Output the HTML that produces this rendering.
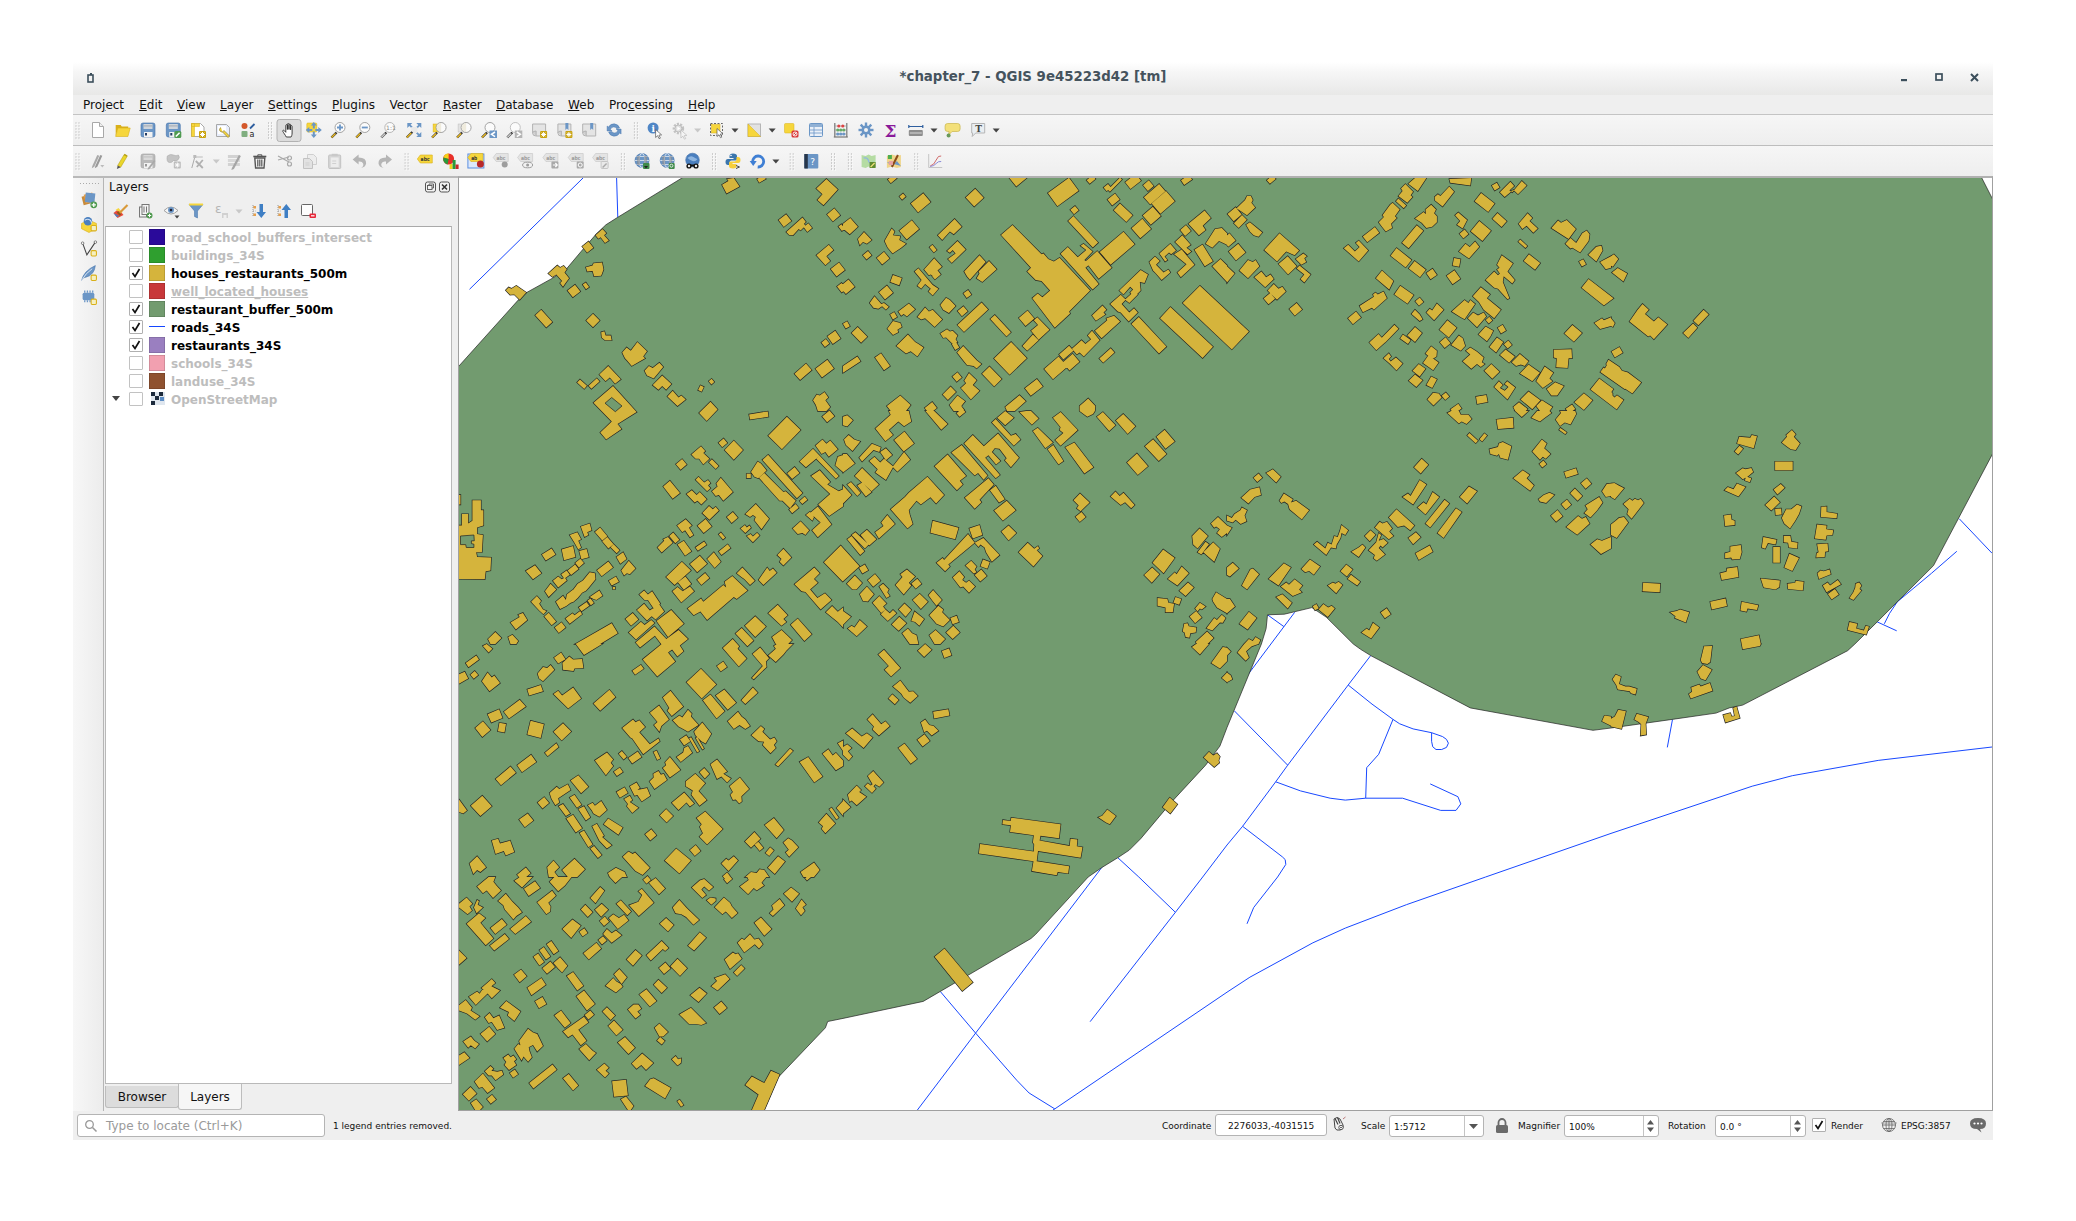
<!DOCTYPE html>
<html><head><meta charset="utf-8"><title>chapter_7 - QGIS</title>
<style>
html,body{margin:0;padding:0;background:#fff;}
body{width:2076px;height:1221px;position:relative;overflow:hidden;font-family:"DejaVu Sans","Liberation Sans",sans-serif;font-size:12px;color:#000;}
.abs{position:absolute;}
#win{position:absolute;left:73px;top:62px;width:1920px;height:1078px;background:#efefef;}
#title{position:absolute;left:0;top:0;width:1920px;height:33px;background:linear-gradient(#ffffff 0%,#f6f6f6 30%,#efefef 65%,#e8e8e7 100%);}
#title .t{position:absolute;left:0;width:1920px;top:7px;text-align:center;font-weight:bold;font-size:13.33px;color:#45535d;line-height:16px;}
#menubar{position:absolute;left:0;top:33px;width:1920px;height:19px;background:#efefef;border-bottom:1px solid #c4c4c4;}
#menubar span{position:absolute;top:3px;line-height:15px;font-size:12px;color:#111;}
#menubar u{text-decoration-thickness:1px;text-underline-offset:1px;}
.tb{position:absolute;left:0;width:1920px;height:30px;background:linear-gradient(#f6f6f6,#eeeeee);}
#tb1{top:53px;border-bottom:1px solid #bdbdbd;}
#tb2{top:84px;height:30px;}
#tbsep{position:absolute;left:0;top:114px;width:1920px;height:2px;background:#b9b9b9;}
#leftbar{position:absolute;left:0;top:116px;width:30px;height:933px;background:linear-gradient(90deg,#f7f7f7,#ececec);border-right:1px solid #b5b5b5;}
#panel{position:absolute;left:31px;top:116px;width:354px;height:933px;background:#efefef;}
#ptitle{position:absolute;left:5px;top:2px;font-size:12px;line-height:15px;color:#111;}
#ptitle.big{font-size:13px}
#list{position:absolute;left:1px;top:48px;width:345px;height:856px;background:#fff;border:1px solid #b9b9b9;border-top-color:#a9a9a9;}
.row{position:absolute;left:0;height:18px;width:345px;}
.cb{position:absolute;left:23px;top:2px;width:12px;height:12px;border:1px solid #c2c2c2;background:#fff;border-radius:1px;}
.cb.on{border-color:#b0b0b0;}
.sw{position:absolute;left:43px;top:1px;width:16px;height:16px;box-shadow:inset 0 0 0 0.5px rgba(0,0,0,.25);}
.nm{position:absolute;left:65px;top:2px;font-weight:bold;font-size:12px;line-height:16px;white-space:nowrap;}
.off .nm{color:#bdbdbd;}
#tabs{position:absolute;left:0;top:907px;width:354px;height:27px;}
.tab{position:absolute;font-size:12px;line-height:15px;color:#111;text-align:center;}
#tabB{left:1px;top:1px;width:72px;height:17px;padding-top:4px;background:#dcdcdc;border:1px solid #bdbdbd;border-top:none;border-radius:0 0 3px 3px;}
#tabL{left:74px;top:-1px;width:62px;height:19px;padding-top:6px;background:#f6f6f6;border:1px solid #bdbdbd;border-top:none;border-radius:0 0 3px 3px;}
#mapframe{position:absolute;left:385px;top:114px;width:1535px;height:935px;background:#fff;border:1px solid #a0a0a0;border-top:2px solid #b0b0b0;box-sizing:border-box;}
#status{position:absolute;left:0;top:1049px;width:1920px;height:29px;background:#efefef;}
#status .lb{position:absolute;font-size:9px;line-height:12px;top:9px;color:#111;white-space:nowrap;}
.box{position:absolute;background:#fff;border:1px solid #b4b4b4;border-radius:3px;box-sizing:border-box;}
.box span{position:absolute;font-size:9px;line-height:12px;top:5px;white-space:nowrap;color:#111;}
svg{position:absolute;overflow:visible;}
</style></head><body>
<div id="win">
<div id="title"><div class="t">*chapter_7 - QGIS 9e45223d42 [tm]</div><svg width="8" height="10" viewBox="0 0 8 10" style="left:14px;top:11px"><rect x="1" y="2" width="5" height="7" fill="none" stroke="#3c4f5c" stroke-width="1.600"/><rect x="3" y="0" width="2" height="2" fill="#3c4f5c"/></svg><svg width="8" height="4" viewBox="0 0 8 4" style="left:1828px;top:17px"><rect width="6" height="2.200" fill="#3c4f5c"/></svg><svg width="9" height="9" viewBox="0 0 9 9" style="left:1862px;top:11px"><rect x="1" y="1" width="6" height="6" fill="none" stroke="#3c4f5c" stroke-width="1.700"/></svg><svg width="9" height="9" viewBox="0 0 9 9" style="left:1897px;top:11px"><path d="M1 1l7 7M8 1l-7 7" stroke="#3c4f5c" stroke-width="2"/></svg></div>
<div id="menubar"><span style="left:10px">Pro<u>j</u>ect</span><span style="left:66.2px"><u>E</u>dit</span><span style="left:104px"><u>V</u>iew</span><span style="left:147.1px"><u>L</u>ayer</span><span style="left:195px"><u>S</u>ettings</span><span style="left:259.1px"><u>P</u>lugins</span><span style="left:316.4px">Vect<u>o</u>r</span><span style="left:370px"><u>R</u>aster</span><span style="left:423px"><u>D</u>atabase</span><span style="left:495.1px"><u>W</u>eb</span><span style="left:535.9px">Pro<u>c</u>essing</span><span style="left:615.1px"><u>H</u>elp</span></div>
<div class="tb" id="tb1"></div><div class="tb" id="tb2"></div><div id="tbsep"></div>
<div id="leftbar"></div>
<div id="panel"><div id="ptitle">Layers</div><div id="list"><div class="row off" style="top:1px"><div class="cb"></div><div class="sw" style="background:#2a0a9a"></div><div class="nm">road_school_buffers_intersect</div></div><div class="row off" style="top:19px"><div class="cb"></div><div class="sw" style="background:#2f9f2f"></div><div class="nm">buildings_34S</div></div><div class="row" style="top:37px"><div class="cb on"><svg width="12" height="12" viewBox="0 0 12 12" style="left:0;top:0"><path d="M2.500 6l2.500 3.500 4.500-7.500" fill="none" stroke="#111" stroke-width="1.700"/></svg></div><div class="sw" style="background:#d5b43c"></div><div class="nm">houses_restaurants_500m</div></div><div class="row off" style="top:55px"><div class="cb"></div><div class="sw" style="background:#c8383a"></div><div class="nm" style="text-decoration:underline;text-decoration-thickness:1px">well_located_houses</div></div><div class="row" style="top:73px"><div class="cb on"><svg width="12" height="12" viewBox="0 0 12 12" style="left:0;top:0"><path d="M2.500 6l2.500 3.500 4.500-7.500" fill="none" stroke="#111" stroke-width="1.700"/></svg></div><div class="sw" style="background:#729b6f"></div><div class="nm">restaurant_buffer_500m</div></div><div class="row" style="top:91px"><div class="cb on"><svg width="12" height="12" viewBox="0 0 12 12" style="left:0;top:0"><path d="M2.500 6l2.500 3.500 4.500-7.500" fill="none" stroke="#111" stroke-width="1.700"/></svg></div><div class="abs" style="left:43px;top:8px;width:16px;height:1px;background:#1446ff"></div><div class="nm">roads_34S</div></div><div class="row" style="top:109px"><div class="cb on"><svg width="12" height="12" viewBox="0 0 12 12" style="left:0;top:0"><path d="M2.500 6l2.500 3.500 4.500-7.500" fill="none" stroke="#111" stroke-width="1.700"/></svg></div><div class="sw" style="background:#9a7fc0"></div><div class="nm">restaurants_34S</div></div><div class="row off" style="top:127px"><div class="cb"></div><div class="sw" style="background:#f2a0b0"></div><div class="nm">schools_34S</div></div><div class="row off" style="top:145px"><div class="cb"></div><div class="sw" style="background:#8f5230"></div><div class="nm">landuse_34S</div></div><div class="row off" style="top:163px"><div class="cb"></div><svg width="14" height="13" viewBox="0 0 14 13" style="left:45px;top:2px"><rect width="14" height="13" fill="#dfe6ee"/><rect x="0" y="0" width="4" height="4" fill="#1c2a3c"/><rect x="8" y="0" width="4" height="4" fill="#1c2a3c"/><rect x="4" y="4" width="4" height="4" fill="#1c2a3c"/><rect x="0" y="9" width="4" height="4" fill="#1c2a3c"/><rect x="9" y="5" width="4" height="4" fill="#5b8cc4"/></svg><svg width="10" height="8" viewBox="0 0 10 8" style="left:6px;top:6px"><path d="M0 0h8l-4 5z" fill="#444"/></svg><div class="nm">OpenStreetMap</div></div></div><div id="tabs"><div class="tab" id="tabB">Browser</div><div class="tab" id="tabL">Layers</div></div></div>
<div id="mapframe"><div class="abs" style="left:0px;top:0px;width:1533px;height:932px;overflow:hidden"><svg id="map" width="1533" height="932" viewBox="0 0 1533 932" style="left:0;top:0;overflow:hidden">
<rect width="1533" height="932" fill="#fff"/>
<path d="M124 0 L10.5 111.3M157.6 0 L158.8 39.5M808.5 436.8 L824.9 448.6M835.7 434.3 L789 496.5 L642.6 689.7 L516.6 855.1 L458.4 932M911.5 477.8 L889.2 507 L828.7 587.2 L816.7 603.8 L783.6 648.3 L768 667 L743.7 699 L716.4 734.3 L631.1 843.7M775.3 532.8 L828.7 587.2M889.2 507 L913 526.1 L934 541.4 L940.7 545.8 L954.1 550.9 L972.6 554.7 L983.6 558.6 L987.5 561.4 L989.4 565.2 L987.5 569.4 L982.7 571.5 L977 571.5 L973.7 568.7 L972.6 563.3 L972.6 554.7M934 541.4 L919.7 576.3 L907.7 589.7 L906.7 620.2M816.7 603.8 L841.5 612.9 L871.1 620.2 L886.3 622.1 L906.7 620.2 L943.6 620.2 L981.7 632.4 L997 632.4 L1001.8 625.9 L998.9 618.7 L971.2 605.9M783.6 648.3 L823.3 678.8 L826.2 681.6 L826.8 686.4 L818.6 699 L794.7 729.5 L788 745.8M1533 569 L1419.2 582.4 L1333.3 597.7 L1293.2 608.2 L1152 655.4 L1026.6 699 L947.4 726.7 L886.3 750.1 L853.9 764.8 L790.9 799.2 L768 814.2 L595.8 930.9 L594 932M481.3 813.5 L516.6 855.1 L557.7 902.2 L570.1 915 L595.8 930.9M658.8 679.7 L679.8 699 L716.4 734.3M1213.5 541.4 L1208.3 569.4M1500.3 340.8 L1533 375.2M1497.8 373.3 L1472.6 395.2 L1438.3 423.8 L1430.6 435.3 L1425.3 445.8M1418.2 443.9 L1437.7 452.8" fill="none" stroke="#1848ff" stroke-width="1"/>
<polygon points="226.2,-2 1521.8,-2 1535,23.9 1535,273.1 1474.5,387.6 1418.2,443.9 1395.9,466 1388.6,472.7 1283.7,527.1 1270.3,529.9 1257,535.1 1213.1,541.4 1152,550 1134,552.3 1011.3,529.9 912.1,477.8 901.6,471.3 894.3,466 867.2,439.1 852.9,429.6 825.3,436.2 808.5,436.8 807.1,450.6 802.4,466 768,549.5 760.9,568.1 746.6,587.2 712.2,624.4 681.7,660.7 670.3,672.1 658.8,679.7 642.6,689.7 629.2,699 576.7,756.3 572,760.5 464.2,823.4 384,840.4 368.7,843.5 366.4,849.8 319.1,899.4 304.4,934 -2,934 -2,190.2 59.2,122.1 67.7,114.5 93.5,100.2 106.9,91.6 122.1,73.5 137,56.3 146.9,46.8 158.4,39.5" fill="#729b6f" stroke="#232323" stroke-width="0.7"/>
<path d="M263 6.7 269.5 2.9 268.1 1 274.8 0 280.5 8.6 267.6 15.6ZM298.1 1 304.7 -2.8 306.8 0.9 300.2 4.7ZM367.4 1 378.8 11.5 364.5 27.3 358.4 21.9 363.5 16.2 357.3 10.5ZM368 36.4 375.3 30.3 381.2 37.3 373.9 43.4ZM319.6 42.1 327.1 36.2 332.4 43 324.8 48.9ZM327.3 54 343.5 39.5 346.9 43.9 345 45.8 346.4 47.7 341.6 52.5 339.7 51.1 334 57.3 330.2 56.9ZM344.6 49.1 349.4 45.3 353.1 50.1 348.3 53.9ZM357.4 77.3 369.8 66.8 374.4 72.1 367.4 78.2 371.2 83 366.4 87.2ZM371.7 91.1 380 84.6 385.9 92.1 377.6 98.6ZM378 108.5 382.5 105 387.2 111 382.7 114.5ZM136.5 57.3 143.5 51.1 147.3 55.3 145 57.3 149.8 62.6 146 64.9 141.6 59.2 139.3 60.7ZM123.2 68.4 129.5 63.5 134.4 69.8 128.1 74.7ZM126.9 89.3 133.6 87.4 134.5 85.3 143.1 84.5 144.5 91.6 142.2 97.7 135.1 98.3 133.6 93.1 128.2 93.5ZM89.3 95.4 98.3 87.4 101.1 89.7 104.6 87.8 107.8 91.2 105.5 94.5 110.1 100.2 106.9 104.6 104 108.8 101.1 105 103.1 103.1 97.3 96.4 93.5 98.9ZM108.5 112.5 116 106.7 121.3 113.4 113.8 119.3ZM123.7 106.6 126.8 104.4 130.1 109.1 127 111.3ZM46.8 112.2 49.6 109.4 52.5 110.7 57.3 107.8 67.2 114.5 60.7 121.8 55.3 116.4 51.1 116.8ZM82.2 131.8 93.3 144.1 87.3 149.5 76.2 137.2ZM134 135.8 140.7 142.6 134 149.3 127.2 142.6ZM142.2 154.2 145.4 153.2 146.6 157.4 151.7 157.4 152.7 162.2 146 162.2 142.7 159.4ZM163.2 174.6 167.6 169.5 171.8 172.7 178.4 164.1 188 173.3 184.2 178.4 186.1 180.3 172.7 188 167.9 182.3 166 180.3ZM185.5 192.7 189.9 188 193.7 189.9 200.4 184.7 204.2 188.9 194.7 200.4 188 197.5ZM193.7 207.1 203.2 197.5 212.4 206.1 207.1 211.8 203.2 208 199.4 211.8ZM208.4 218.5 213.7 212.8 219.5 219.5 222.3 217.6 226.7 221.4 218.5 228.1ZM241.4 207.3 244.8 208.9 242.6 213.7 239.1 212.1ZM249.7 203.2 252.6 200.8 255.3 204 252.4 206.5ZM140.3 196.6 149.2 188 161.8 201.3 156.1 205.7 150.8 199.4 146.6 203.2ZM121 201.4 128 207.7 125.2 210.9 118.1 204.5ZM129.6 207.7 137.8 200.3 140.6 203.4 132.4 210.8ZM335.5 195.7 347 185.6 352.7 192.1 341.1 202.1ZM356.4 190.7 368.3 181.7 374.9 190.6 363 199.5ZM368.4 158.2 376.2 152.7 381.6 160.5 373.8 166ZM362.4 164.6 366.9 161.1 370.4 165.6 365.9 169.1ZM354 222.3 357.8 216.6 360.7 217.6 365.5 214.1 369.3 219.5 366.4 222.3 371.2 229 367.4 233 358.8 233 356.9 227.1ZM379.4 48.5 382.4 46.2 385.9 50.7 382.9 53ZM240.1 234.9 251.5 223.8 258.6 231.5 247.7 242.9ZM290.1 236.4 308.8 233.4 309.5 238.7 291 241.6ZM309.2 257.8 327.9 238.7 341.6 252.1 322.9 271.2ZM363.2 238.5 370.5 232.4 375.4 238.2 368.1 244.3ZM259.5 264.8 264.6 260.5 268.3 264.9 263.2 269.2ZM265.6 272.1 274.8 262.6 284 272.1 274.8 281.7ZM232.4 276.5 242 268.3 246.2 273.1 244.3 275 250.4 280.7 244.3 286.4 240.1 280.7 236.6 280.7ZM252.9 281.2 259.6 287.9 256.7 290.9 249.9 284.2ZM216.9 286.2 223.1 281.1 227.7 286.6 221.6 291.8ZM204.2 308.4 210.9 302.7 221 315.1 213.7 320.8ZM236.6 301.7 239.5 298.8 245.2 304.6 249 302.1 251.5 305.1 249 307.4 251.5 310.3 248.1 313.2ZM227.5 316 232.8 312.2 237.6 317 240.8 314.1 247.7 321.2 242.4 326.5 238.5 322.7 235.7 324.6ZM252.9 313.2 258.6 308.4 257.3 305.5 261.8 299.8 273.9 314.1 264.3 322.7 259.9 317 256.7 317.9ZM243.3 335.1 250 328 253.8 331.3 256.7 328.8 259.9 332.6 250.4 341.8ZM267.8 339.1 273.9 334 278.8 339.8 272.7 345ZM238.5 347.8 246.6 341 252.7 348.4 244.7 355.1ZM218.1 347.5 226.7 341.2 232.8 347.5 230 349.8 234.4 357 230.9 359.3 226.1 352.3 223.3 354.2ZM198.5 369.5 205.2 362.8 204.2 361.2 209 359 213.7 364.7 202.7 374.6ZM214.2 354.5 220.4 361.8 216.3 365.3 210.2 358ZM218.5 366.6 224.8 362.8 232.4 373.3 226.1 377.7ZM236.5 369.4 245.1 363.4 247.5 366.8 238.9 372.8ZM261.9 354.5 266.2 359.6 264 361.5 259.7 356.4ZM259.7 373.4 268.7 366.3 271.6 370.1 262.6 377.1ZM248.1 380.9 254.8 374.2 261.8 383.8 255.7 389.9ZM230.9 386.1 240.8 377.7 248.1 385.7 238.2 394.3ZM207.1 399 222.9 383.8 231.9 392.4 215.6 407ZM218.9 404.3 226.4 398.4 232.3 406 224.8 411.8ZM238.1 401.8 246.1 395 250.4 400.1 242.4 406.9ZM213.4 413.3 218.5 409 223.7 413.3 230.9 408.6 235.1 413.3 222.3 424.4ZM286.3 336.1 296.8 325.9 310.1 340.8 302.5 351.3 295.4 342.2 296.8 338.9 293.9 337 291 338.9ZM281.5 350.4 285.9 347.1 287.8 349.4 290.5 347.5 292 349.8 286.3 355.1ZM287.8 358 291.6 356.1 293.9 358.6 298.1 354.8 300.6 357.4 293.9 364.3ZM318.3 377.1 324.4 370.8 332.4 379.6 324.4 387.6 320.6 383.8 322.5 380.9ZM299.6 401.9 308.2 389.5 310.7 392.9 313.9 390.4 317.7 394.8 304.4 407ZM277.7 395.2 283.4 389.5 295.8 402.8 291 407 285.3 400.9 282.4 399ZM228.6 430.5 242 420.4 244.3 423.8 264.3 407 267.2 409.5 265.6 403.8 273.3 398.1 288.5 412.4 277.7 421 274.8 419.1 248.1 442 241.4 433.4 234.7 437.2ZM335.5 406.3 355.3 389.5 360.7 395.2 355 400.9 358.8 404.8 351.1 411.4 358.4 420 366 415.3 372.5 421.9 361.6 431.5 346.4 413.9 342.6 413.3ZM309.2 435.3 318.7 426.7 328.6 437.2 324.4 441 327.3 443.9 322.5 447.7ZM285.9 447.7 296.2 438.2 306.9 448.6 296.2 459.1ZM331.7 446.7 338.7 440.6 352.7 456.3 345.4 463ZM366.8 434.3 373.1 428 378.8 433.8 384 429.6 384 449.6 378.8 443.9ZM333.6 350.4 341.6 343.3 350.2 352.3 346.4 357 343.5 355.1 338.7 356.1ZM346.9 337 350.8 333.8 355 338.9 353.4 342.7ZM351.1 335.1 358.8 328.4 372.5 346.5 358.8 359.3 353.1 352.3 361.6 344.6ZM352.1 297.9 360.7 292.2 371.2 304 368.3 306.5 379.8 313.2 384 311.2 384 328.4 370.2 338 359.2 326.5 371.2 316ZM340.6 283.6 354 270.8 360.7 277.8 346.9 289.3ZM356.5 267.4 363.5 261.6 367.4 265.8 371.2 262.6 378.8 271.2 369.8 278.8 366.4 274 362.6 275.9ZM328.2 295.2 335.6 289 340.5 294.9 333.1 301ZM357.3 280.7 360.7 277.8 379.8 297.9 376.9 300.7ZM376.3 287.4 378.8 278.8 384 276.9 384 294.1ZM309.1 276.8 343.5 315 337.9 320.2 303.4 281.9ZM300 299.8 305.3 295 324.4 314.1 326.7 313.2 336.8 322.7 331.1 330.3 323.5 322.7 320.6 322.7ZM292 294.1 298.7 283.6 301.9 285.5 307.6 292.5 299.2 300.2 295.4 298.8ZM287.6 295.8 291.8 295.8 291.8 300 287.6 300ZM330.1 331.6 336.7 326.1 339.7 329.8 333.2 335.3ZM340.6 322.9 345.7 318.6 348.4 321.8 343.3 326.1ZM0 317 1.5 317 1.5 326.5 0 326.5ZM0 347.5 2.9 347.5 2.9 336.1 9.2 336.1 9.2 345.6 13.4 342.7 13.4 322.3 21.9 322.3 21.9 332.2 24.4 332.2 24.4 347.5 18.1 349.4 18.1 356.1 23.9 357 22.9 374.2 17.2 374.2 18.1 379 32.1 379.6 31.5 392.4 26.7 393.3 25.8 401.3 0 400.9ZM66.8 392.9 76 387.2 82.4 395.2 74 401.3ZM82.9 376.5 92.6 370.4 96.5 376.6 86.8 382.6ZM102.7 371.4 114.1 368.1 116.4 379 105 382.2ZM120.2 373 127.6 371 129.8 379.3 122.4 381.3ZM110.7 357 118.3 354.2 122.1 361.2 119.3 362.8 122.1 369.5 119.3 371.4 115.5 364.7ZM121.8 348.5 130.7 345.6 132.6 352.3 128.2 354.2 129.4 357 125.6 359ZM141.1 349.6 148.4 358.3 143.3 362.6 135.9 353.9ZM148.3 358.9 154.5 366.2 149.4 370.5 143.2 363.2ZM154.6 366.3 160.6 372.3 157.7 375.3 151.6 369.2ZM157.4 379 164.1 374.2 167.6 380.9 161.3 385.7ZM162.2 392.4 169.8 382.8 176.5 390.4 170.8 396.2 167.9 395.2 165.1 397.5ZM138 392.2 149.3 383.4 154 389.4 142.7 398.2ZM116.2 385.1 121.3 380.8 125 385.1 119.9 389.4ZM108.6 392.5 116.1 386.6 119.6 391.1 112.1 397ZM102.2 396.3 107.7 392.4 110.8 396.8 105.3 400.7ZM93.9 402.8 99.2 398.6 102.7 401.3 105.9 399.4 107.8 402.5 99.2 409.5ZM85.9 413.3 91.6 405.7 97.3 411.4 89.7 419.1ZM72.1 423.8 77.9 418.1 82.1 422.9 80.2 425.7 84 431.5 87.4 433 84.4 436.2 80.2 432.4ZM89.7 434.8 97.1 443.6 92.7 447.2 85.3 438.5ZM95.7 449.6 102.5 444.3 106.6 449.6 99.8 454.9ZM106.5 440.6 113.5 435.3 115.5 437.2 121.2 433 123.1 436.2 110.7 445.8ZM119.7 429.4 127.5 423.9 130.3 427.8 122.5 433.3ZM128.5 422.6 131.6 420.4 134.9 425.1 131.8 427.3ZM130.7 419.1 140.3 412.4 143.5 417.7 137.4 421.9 134.5 421ZM96.9 423.8 104 417.7 106.9 421.9 107.8 416.6 112.6 412.8 114.5 411.4 118.7 405.7 124 402.5 130.7 394.3 135.9 395.2 136.5 401.3 129.8 409.5 126.9 412.8 123.1 414.7 118.7 420 114.5 423.8 111.6 424.8 107.3 428 101.1 431.1ZM149.8 402.8 156.9 398.6 159.9 403.8 152.7 407.6ZM153.8 409 156.1 409 156.1 411.2 153.8 411.2ZM51.5 444.5 60.7 439.1 59.2 436.8 63.9 434.9 68.3 442 56.9 451.5ZM29 461.1 36.3 454 42.4 460.1 36.3 466 31.5 466ZM49.2 459.1 53.4 456.7 59.2 463 57.3 466 51.5 466ZM116.4 466 152.7 445.2 158.8 455.3 141.2 466ZM180.3 416.6 185.1 412.4 188.9 416.6 193.1 413.3 201.3 425.7 194.7 430.5 188.9 421.9 185.5 421.9ZM177.9 431.9 185.1 425.7 190.8 432.4 196.6 428.6 200 426.1 205.2 433.4 196.6 441.4 192.7 438.2 188 442.5ZM166.4 441 173.7 434.9 179.4 441.4 172.1 447.7ZM197.5 442.9 212.2 431.9 224.8 445.8 209 459.1ZM313 459.1 322.5 452.1 333 462 329.2 466 316.8 466ZM23.9 467.9 27.7 466 33.4 470.8 29.6 474.6ZM116.8 466 143.1 466 125 477.1ZM6.7 485.1 17.2 477.5 20 481.6 9.5 489.3ZM11.4 496.7 15.7 493 19.2 497.1 14.8 500.8ZM0 496.2 5.7 493.7 9.2 500.4 0 505.7ZM22.9 503.2 28.6 494.6 32.8 499.4 35.3 497.5 41 505.1 30.5 513.3ZM95 479.7 102.1 474.6 106.5 481.3 99.2 485.5ZM103.4 485.1 110.3 478.4 114.1 481.6 123.1 480.9 124.4 489.9 115.5 490.4 114.5 493.1 104 491.8ZM78.6 495.6 84 488.9 88.2 489.9 91.6 487 95.4 491.8 84 503.2 80.2 500.4ZM68.3 511.4 81.7 507 84 513.3 70.2 517.5ZM94.5 516 99.2 512.8 103.1 517.5 114.1 509.5 122.1 520.4 109.2 530.5ZM134.5 525.5 150.4 511.8 156.5 519.1 141.2 532.8ZM173.3 492.8 181.9 486.8 184.7 490.7 176.1 496.7ZM227.5 504.2 242 490.8 257.3 506.5 242.7 520.4ZM257.9 488 264.2 483.6 268 489.1 261.8 493.4ZM293.5 475.9 301.1 469.4 310.1 480.3 306.9 483.6 307.6 488.9 294.8 501.3 292.9 500 303.8 487.9ZM309.2 477.5 316.8 470.8 314.9 467.9 317.7 466 334 466 327.3 472.7 324.4 476.5 316.8 484.1ZM243.9 522.3 251.5 516.6 265.6 533.2 257.6 540.4ZM256.7 517.5 265.3 511.4 277.1 524.8 268.7 531.8ZM282.4 522.3 293.9 509.5 298.7 514.7 286.3 526.1ZM203.8 519.4 211.5 512.8 224.2 528.6 212.8 538.1 208.4 532.8 210.3 529.9ZM190.8 534.7 200 527.5 205.2 534.7 209.9 541.4 202.3 548.1 200.4 553.8 195 547.1 198.5 543.9ZM163.2 550 174 541.4 176.5 544.2 180.3 542.3 186.1 549 180.3 554.2 190.8 566.2 199.4 560.5 200.8 563.3 184.2 576.3 173.3 560.5 171.4 559.5ZM213.7 542.3 220.4 537.6 223.3 539.5 229 531.8 232.8 535.7 231.9 538.5 239.5 547.1 229 553.8 224.2 550.9 219.5 548.4ZM235.1 553.8 243.3 544.6 252.3 555.7 249 561.4 246.6 565.6 242.4 563.3 236.6 557.6ZM220.9 561.6 227.2 557.2 231.4 563.2 225.1 567.5ZM232.1 559.2 240.2 573.2 238.2 574.4 230.1 560.3ZM238.3 559 245 570.5 243.4 571.5 236.7 559.9ZM217.6 579 224.2 574.4 225.2 570 229 568.1 233.2 574.8 221.8 583.9ZM268.7 543.3 279 533.7 282.4 538.5 286.3 541.4 291 548.1 286.3 550.9 280.5 547.1 274.8 550.9ZM292.4 557.2 301.9 548.1 305.3 550.9 303.4 553.8 311.1 561.4 315.3 559.5 317.7 563.3 314.9 567.1 316.8 570 311.5 575.2 303.8 567.1 305 563.7 299.6 563.3ZM316.4 586.6 331.1 570.6 334 572.9 319.1 588.5ZM340.6 583.9 349.2 579 363.5 598.6 355.3 604.4ZM363.5 575.7 369.3 571.3 373.7 577.6 376.9 574.8 384 582.4 384 588.1 376.9 592.3ZM378.8 565.2 384 562.4 384 572.9ZM44.8 533.7 60.7 521.7 66.8 528.6 50 540.4ZM28.6 536.2 40.1 531.3 43.5 540 32.4 544.6ZM16.2 550 23.9 543.3 31.5 551.9 23.3 559.1ZM40.4 544.8 47 545.9 45.5 554.4 38.9 553.2ZM71.6 542.7 84.9 546.2 81.7 559.9 68.3 556.6ZM94.5 553.8 104 545.2 112.2 553.4 102.7 562.4ZM85.9 574.8 97.3 565.2 99.6 569.1 88.7 578.2ZM58.2 587.2 72.1 576.7 77.3 583.9 63 594.2ZM36.6 601.1 51.5 588.5 56.9 594.8 42 607.2ZM135.9 582.4 147.9 574.4 154.2 581.5 151.7 584.7 154.2 588.1 146.9 597.3ZM162.9 573 167.8 578.8 164.6 581.5 159.7 575.7ZM169.3 580.1 178.7 573.5 182.6 579 173.2 585.6ZM197.6 572.6 201.3 580.4 198.2 581.9 194.5 574.1ZM154.8 593.8 160.8 589.6 163.9 594 157.9 598.1ZM203.8 590 207.1 587.2 206.1 584.3 210.9 579 221.4 592 210.9 599.6ZM190.5 603.4 194.7 599.6 194.3 595.8 199.4 592.9 201.9 596.7 204.6 595.8 208 601.9 195.6 611ZM240.5 594.2 245.2 590 250.4 595.8 245.8 600.5ZM251.5 586.2 258 581.5 268.1 593.5 264.3 595.8 271.9 600.5 268.1 604.4 262.4 598.6 258 601.1ZM270.6 608.2 280.9 599.6 290.1 611 282.4 618.3 282.8 623.4 280.2 625.4 276.7 621.5 273.9 622.1 271.4 616.8 273.9 613.9ZM226.7 603.4 236.3 595.8 246.2 605.3 239.5 612.9 247.7 622.1 240.5 627.8 232.4 616.8 233.8 612.6 226.7 608.2ZM212.8 624.8 225.2 614.5 235.1 625.4 230.9 628.6 227.5 624.4 219.5 632ZM200.8 637.4 207.1 631.1 214.1 638.1 207.6 644.4ZM170.8 608.2 177.5 604.4 180.9 610.1 178.4 612 188 610.1 191.2 617.7 182.8 623.4 178.4 617.1 175.6 617.7ZM157.5 613.9 165.5 609.3 168.8 615.1 160.9 619.7ZM165.1 621 170.8 617.7 173.3 622.1 170.8 624 179.4 629.7 173.3 634.9 167.9 628.2 168.9 625.9ZM111.6 602.5 119.3 597.3 129.4 608.7 122.1 615.2ZM90.6 614.9 97.7 608.7 100.2 611 108.8 606.3 111.6 612 99.2 620.2 100.2 624.4 96.4 627.3 92.6 621ZM78.6 624.6 85.2 619.1 90.1 624.9 83.5 630.5ZM110.7 619.6 115.5 616.8 122.5 626.7 117.9 629.7ZM99.6 628.2 104 625.9 111.1 635.5 106.9 638.1ZM119.3 631.1 125 628.2 131.3 639.3 126.9 642.5ZM128.8 627.3 133.6 624.8 135.9 627.8 142.2 622.9 147.9 632 140.3 638.7 134.5 635.5 132.6 632ZM107.3 640.6 114.1 636.8 123.1 650.2 116.8 654.5ZM144.7 646.3 149.2 640.6 163.7 649.6 159.4 656.8ZM133.2 648.3 137.8 645.8 145 657.8 143.1 659.1 152.7 667.3 147.9 670.6 140.3 662.6ZM120.6 654.9 125 652.6 133.6 666.4 129.4 669.2ZM131.3 670.6 135.1 667.9 142.7 676.9 138.9 680.1ZM11.8 627.8 23.3 617.7 32.8 628.2 21.4 638.1ZM0 621.5 8 632.4 4.2 635.5 0 633.9ZM60.1 641.6 68.7 635.5 74.4 642.5 65.8 649.2ZM186.1 656.3 192.3 651.2 197.4 657.3 191.3 662.5ZM237.6 640 246.2 633.6 263.7 651.1 248.1 666.4 240.5 658.7 243.9 655.3 240.8 648.8 242.7 646.3ZM305.7 646.9 314.9 640 324.8 652.1 317.7 660.3ZM230.9 672 236.7 667.1 241.6 673 235.8 677.9ZM205.7 682.6 217.2 670.6 231.9 682.6 220.4 695.4ZM163.7 678.8 169.5 673.6 173.7 675.9 176 674.4 190.8 689.7 183.6 696.9 176.5 693.1ZM32.8 662.6 39.1 660.7 41 665.4 51.1 662.6 55.3 674 46.8 677.5 44.8 673.1 36.6 675.9ZM10.5 685.5 18.1 678.2 27.1 689.3 21.4 694.1 18.1 692.1 14.3 696ZM103.1 692.1 115.5 680.7 126 691.2 118.3 699 108.8 699ZM88.2 689.3 94.5 682.6 100.2 689.3 95.4 694.1 99.2 699 89.7 699ZM58 696.7 66.8 689.4 71.7 695.2 63 702.6ZM148.9 695 156.9 689.7 165.6 694.1 167.9 699 150.8 699ZM285.9 663.5 295.4 654 301.5 660.7 292 669.8ZM299.3 663.7 304.4 669.8 300.7 672.9 295.6 666.8ZM306.5 674.9 311.2 669.3 314.8 672.4 310.2 677.9ZM324.4 664.5 329.2 660.3 333 662.6 339.3 669.2 330.2 678.8 326.7 674.4 329.8 671.7ZM262.4 685.5 267.2 680.7 269.5 682.6 274.8 678.2 279 682.6 269.5 693.1ZM308.8 689.7 319.1 678.2 326 683.6 315.8 696ZM341.6 694.1 355 684.5 360.7 692.1 355 699 344.5 699ZM359.7 644.4 367.4 635.8 376.3 645.4 366.4 655.3 362.6 650.7 364.1 648.3ZM372.6 629.6 379.7 639.7 377.4 641.4 370.3 631.2ZM377.5 630.1 384 622.9 384 637.8ZM286.3 699 292 694.1 297.7 695 300.6 691.2 305.3 692.1 310.1 699ZM263.8 698.2 268.1 694.6 270.6 697.5 266.2 701.2ZM18.1 708.5 29.6 699 36.3 699 34.4 703.8 38.2 708.5 42 712.4 34 720 27.7 712.4 23.9 715.2ZM55.3 702.8 61.1 699 73.5 699 63 709.5ZM64.9 710.8 76 703.2 81.1 710.1 69.7 718.1ZM90.6 703.8 95.4 699 112.6 699 105.9 707.6 99.2 713.3ZM150.8 699 163.2 699 156.5 705.1ZM184.1 701.7 188.5 698 191.9 702.1 187.5 705.7ZM189.9 704.7 196.6 700 206.1 710.5 200 716.2ZM232.8 709.5 240.8 702.4 245.2 700.9 254.2 708.9 250 712.7 245.2 708.5 242.4 711.4 247.1 717.1 243.3 720ZM247.7 722.3 251.5 719.6 256.7 720.4 256.7 722.9 252.3 726.7ZM280.9 708.5 289.7 701.9 288.2 699 307.3 699 302.5 704.7 305 707.6 297.7 712.4 294.8 710.1 289.1 716.2ZM265 701.6 270.1 697.3 273.2 701 268.1 705.3ZM346.1 700.3 350.5 696.6 352.3 698.8 348 702.5ZM324.8 715.8 332.1 709.5 340.1 715.8 333 723.8ZM336.8 730.5 342.6 721.5 346.9 726.7 343.5 729.2 345.8 733 342 737.2ZM310.7 735.3 314.5 731.4 313 727.6 320.6 720.9 325.4 727.2 313.9 738.1ZM255.7 729.2 264.9 719.6 271 724.8 272.9 728.6 278.6 734.9 272.9 740 266.8 733.4 263.4 736.2ZM213.7 729.5 220.4 721.9 228.1 730.5 240.1 741.9 234.4 746.7 227.1 739.1 222.3 736.2 216.6 735.3ZM200.8 745.8 207.1 740 214.7 747.1 209 753.4ZM295.4 744.8 301.9 739.5 312.6 750.9 305.3 757.8ZM278.6 764.8 282.8 760.5 285.3 762 291 756.3 295.4 761.6 299.6 760.5 303.8 766.2 300 770.6 295.8 766.2 285.3 774.4ZM229 767.7 240.8 754.3 247.1 759.7 235.1 772.5ZM265.6 781.4 273.9 774.4 276.7 776.3 279 775.3 282.8 780.7 271 791ZM274.8 794.5 282.2 787.1 285.6 790.5 278.1 797.9ZM252.3 808.2 258 803 255.7 800.1 266.2 796.3 270.6 801.1 258.6 812.5ZM231.3 817.3 240.5 809.7 247.7 815.4 239.5 824ZM255 829.5 262.3 823.4 267.9 829.9 260.6 836.1ZM220.4 836.4 231.9 829.7 247.1 845 242.4 846.9 236.6 845.9 230 845.9ZM170.2 727.2 179.4 723.8 183.2 717.1 179.4 713.3 182.8 710.8 194.7 724.8 179.8 738.1ZM157.4 725.7 161.8 722.3 172.1 733.4 168.3 737.2ZM149.8 740 154.2 736.2 159.9 740 165.1 736.8 169.5 742.5 158.8 750.9ZM140.7 742.9 145.8 738.6 150.1 743.7 145 748ZM135.9 731.8 142.7 725.7 149.2 731.8 142.2 738.7ZM121.8 731.4 126.3 726.7 133.6 734.3 128.8 739.1ZM131.3 720 141.2 708.9 145.4 712.7 136.5 725.3ZM78.2 724.2 93.1 712.7 96.9 717.7 89.3 724.8 91.6 728.6 91.2 733.4 87.4 736.2ZM103.4 750.9 113.5 741.4 121.8 747.7 112.2 760.1ZM120.3 753.7 125.3 750.2 128.6 754.9 123.6 758.4ZM144.1 755.9 147.9 750.9 152.7 755.3 156.9 752.4 162.6 757.2 152.7 764.8ZM139.3 762.1 144 758.2 147.7 762.6 143 766.5ZM124.4 775.3 137.4 764.8 142.2 770.6 129.8 781.4ZM167.6 781.4 176.5 771.9 182.8 777.6 174 787.7ZM187.4 777.2 202.7 762.9 209.5 770 206.1 773 203.8 771.1 191.8 782.6ZM199.9 789.9 206.4 784.4 211.6 790.5 205 796.1ZM211.5 788.3 218.5 780.7 228.1 790.2 221 797.9ZM194.7 806.8 199.4 801.7 208 809.7 202.7 815ZM180.3 816.4 187.4 811.2 197.5 823 190.8 828.4ZM146.6 807.8 154.2 800.1 157.4 803.6 161.8 805.9 163.7 808.7 156.9 814.5ZM155 796.3 160.3 791 167.9 799.2 162.6 805.9ZM168.9 831.6 174.6 826.5 179.4 826.5 182.3 830.7 178.4 833.5 181.3 836.8 176.5 840.6ZM143.5 833.5 147.9 829.2 156.1 837.4 151.7 842.1ZM149.2 847.9 155 842.5 163.7 851.7 157.4 857.4ZM158.8 864.6 166 858.9 176 869.8 169.5 876.1ZM195.6 849.8 200.4 845.6 209 854 204.2 858.4 200.4 858.4ZM201.1 859 205.8 862.9 202.7 866.5 198 862.6ZM172.7 885.6 183.2 875.5 194.3 885.1 187 892.1 182.3 887 177.5 890.8ZM212.8 881.3 216.6 878 219.1 881.3 222.3 880.3 221.8 885.1 218.5 887.5ZM137.8 891.7 145.4 885.6 149.8 889.8 146.6 892.7 149.8 895.6 146 899.4ZM153.1 903.2 167 901.7 168.9 917.5 155 918.8ZM186.1 908 191.2 901.3 194.7 900.3 211.8 909.9 206.1 920.4ZM161.8 921.3 167 918.5 174.6 928 171.8 932 168.9 932ZM220.6 921.6 224.5 927.1 222.1 928.7 218.3 923.2ZM286.3 907 292.9 898.4 305.3 905.1 312 892.7 320.6 896.5 305.3 932 292.9 932 299.6 916.6ZM7.6 745.8 20 735.3 26.3 740 21.4 744.8 34.4 760.5 26.7 767.3ZM31.5 750.1 42.9 741 47.7 746.7 36.3 755.9ZM30.9 767.7 45.8 755.9 50 761 35.3 772.5ZM39.1 722.9 46.8 715.8 53.4 723.8 59.2 729.5 63 734.3 57.3 738.1 54.4 741.4 50 736.2 45.8 731.4 44.3 727.2ZM51.1 750.9 66.8 738.1 72.1 743.8 56.3 755.9ZM0 772.5 7.6 780.1 0 786.8ZM0 725.7 7.6 719.6 13.4 725.7 10.5 728.6 13 732.4 8.6 736.2 0 729.5ZM14.9 729.5 18.1 721.9 20 722.9 18.7 726.7 23.9 729.5 17.6 735.3ZM55 796.7 62 791.6 67.7 798.2 60.7 804.3ZM79.1 775.5 85.1 784.1 80.4 787.4 74.4 778.8ZM84.8 769.1 91.4 778.5 87 781.6 80.4 772.2ZM92.3 762.9 99.4 773 94.7 776.3 87.6 766.2ZM83.3 790.2 91.4 783.5 96 789.1 88 795.8ZM94.5 784.9 101.1 779.2 108.4 787.7 103.1 794.4 99.2 790.6ZM68.3 809.7 82.4 800.1 86.8 806.8 72.5 817.3ZM76 823.2 83.4 819 87.4 825.9 80 830.2ZM107.8 797.9 114.1 794 124.4 807.8 118.3 812.5ZM117.4 818.3 125 812.5 135.9 825.9 127.9 832.6ZM125.7 837.1 131.3 832.5 135 836.8 129.4 841.5ZM95.4 837.4 102.1 832.6 111.6 845 105.9 849.8ZM104 853.6 125 838.7 129.4 844.4 119.3 851.7 127.5 862.7 121.8 867.3 113.5 856.4 109.2 859.3ZM120.2 871.1 126.9 866 133.6 872.7 137 875 130.2 882.2ZM22.5 810.1 32.8 801.1 36.3 804.9 32.4 808.2 35.3 809.7 41 812.5 32.8 820.2 28.6 815.4ZM9.9 818.8 18.1 813.5 20.6 815.8 24.4 810.1 28.6 815.4 16.8 826.9ZM0 827.2 6.7 822.1 13 829.7 11.5 832.6 20.6 838.3 16.2 841.7 8 835.5 0 832.6ZM41 829.7 47.3 823 61.5 833.5 55.3 843.1 48.7 837.4 50 834.1ZM25.8 839.3 30.5 834.9 34.4 840.2 40.1 837.4 45.4 849.8 38.2 852.1 32.8 844 29.6 845ZM21.4 855.9 30.2 848.8 36.3 855.9 28.2 863.5ZM4.2 863.5 11.8 858.4 15.3 862.7 20 866 16.2 870.4 11.8 867.3 9.2 869.8ZM55.3 870.8 59.2 866 61.5 867.3 60.1 863.1 69.1 850.7 74 854.5 78.2 855.9 84 867.9 78.2 873.6 74 866.9 69.7 869.2 70.6 873.6 72.9 879.3 69.1 883.7 64.5 878.4 62.6 882.6ZM44.3 879.9 49.2 876.5 51.5 879.3 54.4 877.4 57.3 881.3 55 883.2 57.3 887 50 892.1 45.4 887 47.3 884.1ZM50.8 895 55.8 891.5 59.1 896.2 54.1 899.7ZM0 877.4 5.3 874.2 10.5 879.9 0 887ZM70.2 905.1 93.5 886.4 97.7 891.7 74.4 910.5ZM104 900.3 109.7 895.9 119.3 907.4 114.1 912.4ZM15.6 903.6 23.9 895.6 35.3 909.9 28.6 915 23.3 908.9 20 909.9ZM25.8 893.3 31.5 887.9 34.4 890.8 32.4 892.7 38.2 893.7 42.9 892.7 44.3 896.5 36.6 902.2 32.8 897.5 29.6 897.5ZM3.8 916.2 11.5 908.9 17.6 915.6 9.9 922.7ZM27.9 921.1 33 916.8 37 921.5 31.8 925.8ZM11.8 925.1 17.2 921.3 23.9 929 21 932 16.2 932ZM428.8 1.6 434.6 -3.3 437.7 0.3 431.8 5.2ZM440.4 18.4 444 15.4 446.7 18.6 443.1 21.7ZM451.8 25.6 464.2 15.2 471.6 24 459.1 34.4ZM506.7 19.5 516.2 10.7 524.7 19.8 515.2 28.6ZM550.4 0 567.6 0 557.3 8.6ZM588.9 15.1 610 -0.3 619.6 12.8 598.4 28.2ZM627.6 2.2 633.5 -2.8 636.5 0.9 630.7 5.8ZM648.9 11.7 661 -0.4 663 1.6 650.9 13.8ZM644.6 9.6 649 5.9 652 9.5 647.7 13.2ZM666.2 4.2 676.7 -4.1 682 2.7 671.5 10.9ZM684 7.2 689.8 2.3 694.7 8.1 688.9 13ZM722 2.3 729.8 -3.2 733.1 1.5 725.2 7ZM648.5 21.5 656 15.6 660.7 21.6 653.2 27.5ZM611.3 31.8 616 27.9 619.7 32.3 615 36.2ZM661 25.5 673.6 37.2 667.3 43.9 654.7 32.2ZM684.9 19.2 700.1 6 706.3 13.2 691.2 26.4ZM692.6 25.6 707 13.1 715.8 23.2 701.4 35.7ZM683.7 37.5 693.8 28.7 701.9 38.1 691.8 46.8ZM672.5 50.2 683.3 40.8 692.1 50.9 681.3 60.3ZM729.4 45.8 745.6 32.4 751.9 40.1 743.7 47.7 746.6 51.9 739.9 57.3ZM721.2 52 727 47.1 731.9 53 726.1 57.9ZM746.6 65.8 756.1 51.1 762.8 50 768 55.3 768 66.8 760 63 753.3 69.7ZM716.1 63.9 723.3 57.3 731.7 66.8 727.5 69.7 732.3 73.5 728.5 76.3ZM743.5 66.6 753.9 83.3 745.8 88.3 735.4 71.7ZM753.3 88.2 761.5 81.1 768 87.4 768 104ZM700.4 75.4 711.3 65.8 717 72.5 712.2 76.3 710 74.4 705.6 78.6 708.4 82.1 706.1 83.6ZM715.1 76.3 722.7 71.6 735.5 86.8 721.8 99.2 718.4 94.5 727.5 86.3ZM690.3 84 696 78.6 700.8 83 697 86.8 704.6 94.5 709.4 91.6 711.3 94.5 702.7 102.1 697 95.4 694.1 92.6ZM660.3 112.6 681.7 92 689 96.4 685.5 105 680.8 104 681.7 112.6 675 119.3 671.2 114.5 674.1 111.6 671.2 108.8 664.5 116.4ZM651.2 126 661.7 116.8 666.4 121.2 676 112.6 678.8 116.4 670.3 125 666.4 122.1 662.6 126 670.3 134.5 675 130.2 678.8 134.5 669.7 143.5 661.7 134.5 658.8 133.6ZM633 137.4 643.5 127.5 647.4 131.7 644.5 134.5 646.4 136.5 636.9 142.7ZM635.9 152.7 648.3 142.2 647.4 140.3 655 137.8 661.1 143.5 642.6 160.3ZM613 170.8 622.5 162.2 626.4 166 632.1 161.3 628.7 157.4 633 152.7 640.7 162.2 624.8 178.4 620.6 174.6 617.8 176.5ZM585.2 191.1 599.6 178.6 608.4 188.7 594 201.2ZM603.6 184.6 613.7 175.8 620.5 183.7 610.5 192.5ZM600.1 176.5 610.1 167.7 614.5 172.8 604.4 181.5ZM640.3 180.5 651.7 170.2 655.5 174.5 644.2 184.7ZM679.8 139 707.4 168.6 700 175.5 672.4 145.9ZM711.4 129.1 754 168.8 743.6 180 701 140.3ZM542 56.9 553.5 47.1 582.5 76.3 584.4 75.4 589.2 81.1 594.9 83.6 600.6 79.8 631.1 112.6 610.1 133.6 611.1 135.5 595.8 149.8 573.3 120.2 578.7 115.5 583.4 119.3 591.1 112.6 582.5 103.1 576.7 102.1 568.2 93.5 572 89.7ZM614.4 38.1 639.1 64.6 633.8 69.5 609.1 43ZM601.6 75.8 608.8 69.1 618.7 79.2 627.3 72.1 621.6 67.7 624.5 65.8 633.6 73.5 625.4 82.1 630.2 86.8 626.4 89.7 639.7 105.9 633.6 111.6ZM626.4 83.4 638.2 73.1 652.7 89.7 639.7 100.8ZM640.7 73.9 664.5 53.8 675.6 66.2 651.6 86.8ZM384 45.8 391.3 40.1 398.9 48.7 390.7 56.3 384 50.6ZM398.9 61.1 405 54 412.6 62 407.9 65.8 404 63.9 400.8 67.2ZM425.6 63 432.7 50.6 435.5 53.4 434 57.3 441.3 58.2 440.3 62 447 65.8 442.2 69.7 433.6 75.4 428.8 69.7ZM440.3 52.7 452.8 42.3 460.1 51.1 447.7 61.5ZM403.8 77.2 409 73 412.6 77.3 407.5 81.6ZM417.7 79.9 425 73.8 430.5 80.4 423.2 86.5ZM478.8 57.3 495.6 41 502.7 48.7 494.7 56.3 490.9 53.4 483.2 62ZM470.5 69.3 473.4 66.8 477.7 71.9 474.8 74.4ZM488 72.9 498.5 63 506.7 71.6 492.8 84.9 489 81.1 496.6 75.4 493.7 72.1 490.9 74.8ZM465.1 91.6 475.2 80.2 482.9 88.7 478.5 92.6 480.4 94.5 475.2 99.2 471.8 96.4 469.9 97.3ZM473.2 98.2 479.1 93.3 481.8 96.5 475.9 101.4ZM455.6 93.5 459.4 90.3 473.7 106.9 479.4 110.7 473.7 117.4 469.5 113.5 471.8 110.7 466.1 105.9 462.2 110.7 458.4 107.8 462.6 102.1ZM433.9 96.9 442.8 100.1 440.2 107.3 431.3 104.1ZM419.9 114.2 427.9 107.5 434 114.8 426 121.5ZM380.7 108.8 389.5 101.4 395.7 108.8 386.9 116.1ZM410.7 125 415.5 118.3 422.2 126 425 125 429.8 128.8 426.9 131.7 423.1 128.2 419.3 130.7 414.5 129.8ZM505.2 93.5 520.5 77.3 526.7 84 510.9 101.7 508 98.3ZM517.6 100.2 520.5 95.4 519.5 93.5 530 83 537.6 91.2 523.3 104ZM504.4 115.3 509.1 112 512.4 116.7 507.7 120ZM481.3 126.9 487.1 119.8 490.9 122.1 496.6 127.9 489.9 135.1 484.2 131.7ZM498.6 133.1 504.4 128.2 508.7 133.3 502.9 138.2ZM498.4 146.9 522.6 124.4 529.1 131.4 505 153.9ZM439.3 133.6 449.8 125.6 456.1 131.3 447.9 138.4 444.7 135.9 442.2 137.8ZM458.4 138.9 466.1 129.4 469.9 133.6 473.7 131.7 483.2 141.6 475.6 148.9 466.1 140.3 462.2 141.6ZM431.1 136.5 435.2 134.1 438.1 139.1 433.9 141.5ZM428.3 150.8 434 143.1 441.3 145 442.8 148.9 438.4 151.7 439.3 154.2 434 156.9ZM383.9 145.7 388.1 143.3 390.9 148.2 386.8 150.6ZM398.7 148.9 408.3 158.8 402.1 164.8 392.6 154.9ZM437.4 167.9 448.9 156.5 456.1 164.1 459.4 166 464.5 169.5 458.4 178.4 451.7 173.3 447 175.6ZM422 175.3 431 188.1 425 192.3 416 179.4ZM384 188 398.3 178.4 401.6 183.2 384 194.7ZM481.3 155.5 488 151.3 490.9 153.6 493.7 152.7 498.5 157.4 496.6 161.3 498.5 164.1 493.7 166 489.9 162.2 487.1 159.4 484.2 159.9ZM492.9 166.2 497 163.9 500.3 169.6 496.2 172ZM498.1 174.6 504.2 167.9 517.6 182.3 522.4 186.1 517.6 190.5 514.7 188 508 187 504.2 182.3ZM530.5 188.5 542.7 201.1 535.2 208.4 523 195.8ZM535 180.5 552.1 164 567.8 180.2 550.6 196.7ZM563.4 167.9 573.9 156.5 579.6 162.2 568.2 172.7ZM572 152.7 579 146.9 574.8 142.2 578.3 139.3 590.5 151.7 579.6 161.8ZM559.8 139.9 568.6 132.6 575.3 140.6 566.6 148ZM535.8 137 551.9 154.3 547.5 158.4 531.3 141.1ZM493.4 198.6 498.5 194.3 502.8 199.5 497.7 203.8ZM501.9 209.9 507.1 205.2 505.2 202.7 510 195 517.6 202.3 513.8 207.1 520.5 212.8 511.9 221.4ZM483.6 216.6 491.6 208.5 497 213.9 488.9 222ZM490.5 227.1 498.5 217.6 506.1 223.3 502.3 228.1 505.2 231.9 500.4 233 494.7 233ZM565.9 210.3 577.9 200.9 583.8 208.4 571.8 217.8ZM427.9 228.1 441.3 217.6 451.7 227.1 447 233 431.7 233ZM465.7 229.9 473.2 224 477.9 230 470.4 235.9ZM546.2 229 560.5 217.2 566.8 223.3 555.8 233 548.1 233ZM620.6 228.1 629.2 220.4 636.3 228.1 635.9 233 634 235.9 628.3 238.7 620.6 233ZM384 238.7 388.2 237.2 393.9 242.2 388.2 248.6 384 247.3ZM416.4 250.6 431.7 236.8 429.8 233 449.8 233 452.3 243.5 445.1 248.3 439.3 243.5 429.8 252.1 434 256.9 426.4 263.2ZM466.4 233 475.2 233 488.6 246 482.3 251.7ZM497.5 235.2 503.3 230.2 506.4 233.9 500.5 238.8ZM435.1 262 445.5 253.6 455 265.4 444.7 273.5ZM385 261.6 389.7 256.9 395.1 261.6 401.2 263.5 393.5 273.1 386.9 267ZM400.2 279.8 413 265.8 421.8 269.3 420.3 274 414.5 272.1 403.1 283.6ZM421.2 274 426.9 270.2 433.2 276.9 426.9 282.2ZM410.3 283 415.5 278.8 421.2 284.5 425 280.7 434 288.3 445.1 274 451.2 281.7 438.4 293.7 434 289.3 426.9 302.1 416.4 294.5 418.7 291.2ZM384 275.9 387.8 275.9 395.8 285.5 384 294.5ZM395.8 297.9 403.1 289.9 419.9 306.5 412.6 313.2ZM398.3 307.4 403.1 304.6 412.6 314.1 406.9 318.5ZM388.2 306.5 392 304 401.6 314.7 398.3 317.9ZM384 307.4 392.6 317 384 325.6ZM431.7 331.3 446 318.9 449.8 314.7 468.4 298.8 485.1 317 477.1 325.6 471.4 319.3 461.9 326.5 457.5 322.7 449.8 332.2 450.8 337 453.7 346 448.5 350.4ZM416.1 354.2 424.5 347.9 422.2 344.6 428.3 337 435.9 346 419.9 360.5ZM401.6 357 407.9 351.7 417.4 361.2 410.3 367.5ZM392.6 357 396.4 354.2 409.8 366.6 405.9 370.4ZM388.2 361.2 392.6 358 405.4 373.3 401.2 377.1ZM400 389.8 405.8 386.5 409.2 392.2 403.4 395.6ZM475.6 288.3 488.6 276.5 507.1 297.9 500.8 302.7 503.8 306.5 497.9 312.2ZM492.4 274.6 502.7 267 528.5 297.5 524.6 301.7 519.1 295 515.7 297.5ZM505.2 265.4 513.8 256.9 524.8 268.3 539 255.5 560 279.8 551.9 289.3 545.8 282.2 547.7 280.3 540.5 270.8 535.7 270.2 532.9 274 541.4 283 537.1 286.4 529.4 277.3 526.2 279.8 540.9 296.9 536.7 300.2ZM532.9 244.5 536.7 241 551.9 257.8 556.7 255.9 561.5 261.6 554.8 267.7ZM538.2 239.7 546.2 233 554.8 239.7 546.2 247.3ZM560.5 234 567.2 233 572 233 579.6 240.6 572.9 246.7ZM593.9 239.7 601.6 234 618.7 252.1 601.6 267.7 596.2 262 604.4 254.9 600.6 252.1 601.6 249.2ZM573.9 253 578.7 249.8 593.9 264.5 586.3 270.2ZM588.6 271.2 594.3 267 604.4 283 599.6 286.4ZM606.3 269.3 615.3 264.5 634.4 289.3 625.4 295.6ZM637.8 238.7 643.9 234 656.5 247.3 650.2 253ZM656.9 242.5 664.2 235.9 676.4 248.3 668.7 255.9ZM697.4 258.8 705.6 251.7 715.7 263.5 706.5 270.8ZM685.9 268.3 694.1 261.2 707.5 275.9 699.8 283ZM668 284.5 677.9 275.4 689 288.3 678.8 296.9ZM505.8 319.8 529.4 300.2 534.8 306.5 520.5 321.7 522.4 324.2 515.7 330.7ZM530.9 312.2 536.7 307.8 545.8 321.2 540.1 324.6ZM535.1 332.6 547.7 322.7 556.7 332.2 543.9 342.7ZM542.4 353.6 549.6 347.5 557.3 355.1 549.6 362.4ZM614.5 322.3 621 315.4 630.6 324.6 621.6 333.2 617.8 330.3 619.7 327.5ZM616.5 338.8 622.4 333.9 626.7 339 620.8 343.9ZM651.6 318.5 656.5 313.5 660.7 317.9 664.5 314.7 675.6 326.9 672.2 330.3 666.1 324.2 661.7 326.9ZM473.7 342.7 499.5 349.8 496.2 361.2 471.4 354.8ZM510.3 350.4 520.5 347.1 523.3 357 513.8 360.5ZM477.5 384.7 483.6 379.9 485.1 381.9 509 356.1 515.7 364.7 489.3 386.6 490.9 388.5 486.1 393.3ZM515.7 364.7 524.3 359.9 540.5 377.1 532.9 383.8 527.1 374.2 525.6 369.5 521.4 366.6 519.5 368.9ZM524 381.4 530.8 383.9 528.3 390.7 521.5 388.2ZM506.5 387.6 512.2 382.8 517.6 388.5 515.7 391.4 517.6 394.3 514.7 395.6ZM515.7 397 522.3 391.5 527.8 398 521.3 403.6ZM493.7 399.4 500.4 393.3 505.2 399 503.3 401.9 507.1 404.8 510 402.5 516.1 408.6 510 414.7 504.2 408.6 501.4 409.5ZM559.6 374.2 568.7 364.7 575.2 370.8 579 368.1 580.2 370.4 577.7 372.3 583.4 378 574.5 388.5ZM387.8 405.7 395.8 397.5 403.1 405.1 397.4 411.4 393.5 411.4ZM408.7 402.2 416 396.1 421.5 402.7 414.2 408.8ZM420.3 408.6 424.1 405.7 429.8 411.4 428.3 414.3 430.8 418.1 427.5 420ZM400.8 416.2 407.9 408.6 414.9 416.2 408.8 423.5 404 422.9ZM436.5 407 443.5 399 441.3 396.2 447.9 391.4 456.1 398.6 449.8 404.8 452.3 407.6 444.7 416.6ZM452.4 405.6 458.3 400.7 462.5 405.8 456.7 410.7ZM413.6 424.8 420.3 418.1 427.5 425.4 424.1 428.6 426.4 431.5 422.2 434.9ZM453.7 421.9 460.7 415.8 468.9 423.8 461.9 431.1ZM469.5 417.2 474.1 412 482.9 421.9 477.5 427.7 473.7 422.9ZM421.8 436.2 426.4 431.5 430.8 435.3 434 431.9 437.4 435.3 428.8 442.9ZM439.7 431.5 445.5 425.4 452.3 431.9 446.6 438.7ZM452.3 442.9 455.6 433.4 465.1 441 460.3 447.7 456.1 443.9ZM470.3 437.2 479.4 427.7 484.2 431.5 483.2 434.3 490.9 442 484.2 448.6 477.5 445.8ZM491.4 440 497.6 437.7 499.9 444 493.6 446.2ZM432.7 446.4 440.3 438.7 447.4 445.2 439.7 452.8ZM487.1 454.4 494.3 447.7 500.8 454.4 493.7 461.1ZM470.3 457.2 476.6 452.1 486.1 461.1 481.3 466 475.6 466ZM443.2 455.3 448.9 450.6 453.1 455.3 457.5 457.2 459.4 466 450.8 466ZM388.8 450.6 392.6 447.7 395.5 449.6 400.8 442 407.9 448.6 397.7 458.2ZM384 433 392 438.7 384 446.7ZM751.9 345.6 759 338.9 768 347.5 768 355.1 762.8 359 758 355.1 760.9 351.3 757.1 348.5 755.2 349.8ZM733.2 358 740.5 350.4 748.9 358 738.6 370.4 734.2 366.6ZM738.6 374.2 746.6 363.7 750 366.2 742.4 376.5ZM744.3 374.2 754.2 364.3 760.9 370.8 755.2 383.8ZM693.5 384.7 704.2 371.4 715.7 379.9 704.6 395.2ZM685.1 397.1 693.2 389.5 700.4 396.2 692.8 404.8ZM708.8 400.9 715.7 394.3 717.6 396.2 722.7 388.5 729.8 395.2 718.4 407.6ZM720.3 412.8 729 404.4 734.8 409.5 726.6 418.1ZM698.5 420 708.4 421 709.4 424.8 715.1 425.7 713.8 434.3 706.5 434.3 706.5 429.6 698.5 427.7ZM716.5 419 722.3 421.1 720.2 426.8 714.4 424.7ZM736.1 430.5 740.9 424.8 746.6 428.6 742.8 431.5 740.9 430.5 738.6 433.4ZM730.6 438.6 737.2 433.1 742.7 439.6 736.1 445.2ZM725.2 445.8 728.5 445.2 729.8 448.3 737.4 449.6 736.7 454.4 731.3 455.3 730.4 459.7 726.6 459.1 725.6 454.4 723.7 453.4ZM747.5 450.2 755.2 440.1 758 442 762.8 436.8 766.6 440.1 763.8 444.8 760.9 444.5 753.3 452.5ZM753.3 421 757.1 414.3 768 421 768 435.3 758 429.6 754.2 423.8ZM736.7 463.9 748.1 453.4 754.6 460.1 748.5 466 738 466ZM732.9 468.9 737.1 466 750 466 740.9 476.5ZM752.3 485.1 763.8 468.9 768 469.8 768 483.2 760.9 490.4ZM762.8 500 768 494.6 768 504.2ZM744.7 579.5 750 573.8 754.2 577.6 758 575.2 760.9 578.6 759.6 582.4 760.3 584.7 755.2 589.1ZM703.7 629.2 710.7 619.6 718.4 626.3 711.3 635.5ZM639.3 639.3 643.2 637.8 648.3 631.6 656.9 638.1 650.8 646.3 647 644.4ZM543.9 642 551.6 643.1 552.3 639.7 601.6 646.3 600 660.3 581.5 657.8 580.6 662.6 610.7 667.9 611.5 660.7 618.4 661.6 617.8 668.3 623.5 669.2 621.6 679.7 579 673.1 577.7 683.2 610.1 688.3 609.2 695.4 598.7 694.1 597.7 697.3 572.9 693.1 574.5 683.2 519.9 675.5 521 666 574.8 673.6 575.2 666.4 573.9 664.5 574.8 657.2 551 654 551.9 647.3 543.4 646.3ZM458.8 472.7 466.1 466 472.7 471.7 465.1 479ZM482.8 473.1 490 470.4 492.5 477.3 485.3 479.9ZM419.3 476.5 425 471.7 441.3 489.9 432.1 498.4 425.6 491.8 429.8 487.9ZM434 508.4 441.3 502.6 449.8 513.7 454.2 513.3 458.8 517.9 451.2 524.8 444.7 519.4 442.2 515.6ZM433.3 516.3 439.7 522.1 435.8 526.3 429.5 520.6ZM474.1 533.7 489.3 531.3 490.5 537.6 475.2 540.4ZM461.9 544.6 466.1 541.4 470.3 547.1 474.6 548.1 479.4 552.8 472.7 557.6 468 552.8 465.1 554.2 463.8 550ZM458.3 561.8 465.5 556.2 470.8 562.9 463.6 568.6ZM439.3 570 445.5 565.6 458 580.9 451.7 585.8ZM408.4 541.4 413.6 536.2 422.2 546.2 426.4 543.3 430.8 548.1 419.9 557.6 413.6 551.5 414.9 548.4ZM386.9 555.3 393.2 550.4 402.7 558.6 407.9 555.3 413.6 559.5 404.6 570ZM384 569.1 388.2 566.2 392.6 570 388.8 573.3 393.2 578.6 389.7 582.4 384 576.7ZM408.8 598.1 414.2 592.9 424.5 604.4 420.3 608.7 416.4 606.3 414.5 608.2 416.8 610.7 413 614.9 405.9 608.2 408.8 605.3 411.7 607.6 413.6 606.3ZM388.8 616.8 397.7 607.6 402.1 612 400.2 613.9 407.3 618.7 397.7 627.3 392.6 622.5 390.7 624ZM384 621.5 391.6 629.2 384 635.8ZM475.6 778.8 485.5 770.6 513.8 804.3 503.3 813.1ZM807.8 2.2 813.7 -2.8 816.7 0.9 810.9 5.8ZM777.5 30.2 786.1 21.9 788 18.1 791.9 18.1 793.8 21.9 792.4 24.8 796.2 29.6 788 37.2ZM768.5 36 776.6 29.2 782.7 36.5 774.7 43.3ZM774.9 45.2 783 37.1 787.8 41.8 779.7 49.9ZM787.1 46.8 790.9 44.3 803.3 54.4 799.5 58.8 794.7 57.3 790.9 53.4ZM763.2 61.4 770.5 55.3 776.6 62.6 769.3 68.7ZM769.7 73.6 779.2 65.7 786.5 74.4 777 82.4ZM805.2 72.1 820.5 55.3 840.1 72.5 835.7 77.3 827.2 73.5 818 83.4ZM819.5 85.9 828.7 78.2 837.7 88.2 829.1 96.4ZM836.7 81.1 844.3 75.4 847.8 78.2 845.3 80.2 847.2 84 842.4 86.8ZM837.7 90.6 840.5 87.4 851.6 96.4 845.3 104.6 841.5 101.1 845.3 96.4ZM780.4 92.6 789 82.1 793.8 84 796.6 82.1 800.4 88.2 789 100.2ZM768 88.2 775.6 95.4 768 104.6ZM795.3 99.2 802.4 93.5 807.1 99.2 811.5 96.4 814.8 101.1 806.2 109.2ZM808.6 112.6 814.8 105.9 819.5 110.7 823.3 108.8 826.8 113.5 818 121.8ZM804.6 120.4 811.2 114.9 816.1 120.8 809.5 126.3ZM830.3 131.1 837.6 124.9 843.1 131.5 835.8 137.7ZM884.8 70.2 889.2 66.8 895.9 73.5 900.6 69.1 896.8 64.9 899.7 62.6 909.2 72.5 899.7 83.4ZM903.8 58.5 915.9 49.1 920.3 54.8 908.3 64.2ZM919.7 44.3 924.9 39.1 923.5 37.2 931.2 26.7 933.6 24.8 940.7 31.5 935.9 38.2 937.8 40.1 932.1 45.8 933.1 50 926.8 53.4 923 48.7ZM939.4 20.5 947.2 27.5 944.7 30.3 936.9 23.3ZM939.4 18.1 943.6 13 942 10.5 946.4 6.1 954.1 13.7 951.6 17.2 953.5 19.1 948.3 24.8ZM949.3 5.7 956 0 967.4 0 958.8 13ZM943 64.8 957.8 47.2 964.3 52.8 949.6 70.3ZM956 40.5 964.6 34 966.9 36.3 966.5 31.5 972.2 26.7 977 31.5 975.1 35.3 977.9 38.2 977.9 44.3 973.2 48.7 967.4 50 962.7 44.8ZM975.6 19.1 978.9 16.2 981.4 18.1 990.3 8.6 995.1 13.7 983.6 28.6 976 22.5ZM990.3 1 1012.3 0 1011.3 7.6 991.3 4.8ZM1032.8 7.5 1037.8 4.7 1040.6 9.6 1035.7 12.5ZM1040.9 14.3 1051.4 3.8 1055.2 8 1050.4 12.4 1053.3 14.3 1062.8 2.9 1067.6 7.6 1059 16.2 1054.3 11.8 1045.7 19.1ZM1022.1 15 1035.6 25.6 1029.2 33.9 1015.6 23.3ZM1038.5 35 1047.7 43.3 1042.6 49 1033.4 40.7ZM996.1 37.2 999.3 34.4 1008.1 42 1003.7 50.6 998 46.8 1001.2 42.9ZM1000.5 55.7 1005.6 51.4 1009.5 56.1 1004.4 60.4ZM1020.3 43 1032 52.8 1023.4 63.1 1011.7 53.3ZM1059.6 45.8 1068.6 35.3 1073.3 40.1 1070.5 42.9 1078.7 50.6 1074.3 54.8 1067.6 47.7 1063.4 51.1ZM1061.2 61.6 1068.3 68 1066.4 70.1 1059.3 63.7ZM999.9 73.5 1006.5 65.8 1010.7 69.1 1016.1 63.4 1020.3 68.7 1010 80.5ZM1070 76.2 1081.2 85 1076 91.8 1064.7 82.9ZM995 80 1001.5 81.2 1000.2 88.7 993.6 87.5ZM987.6 97.7 995.4 92.2 1001.4 100.8 993.6 106.3ZM967.3 95.1 973.5 90.7 977.9 96.9 971.6 101.3ZM937.5 70.1 952.5 81.9 946.6 89.4 931.6 77.7ZM955.6 82.9 966.8 91.7 961 99.2 949.7 90.4ZM916.9 100.2 923 92.6 934.4 103.1 930.2 111.6ZM941.3 107.8 954.6 117.1 948.5 125.7 935.3 116.4ZM956.3 123.3 960.7 119.6 964.4 124 960 127.7ZM900.6 127.9 914.9 118.7 914 116.4 916.5 114.5 918.8 116.4 924.5 113.5 927.9 120.2 914.9 131.7 913 129.8 903.9 134.2ZM889 140.3 897 133.6 902 139.4 893.9 146.2ZM952.5 135.9 956 131.7 960.7 136.5 963.6 141.2 960.7 143.1ZM967.4 134.5 970.7 130.7 973.2 132.6 977.9 125.4 984.6 131.7 975.1 142.2ZM922.1 160.4 935.4 146.7 939.5 150.7 926.2 164.4ZM910.3 164.4 919.5 156.1 926.5 163.9 917.3 172.2ZM948.3 157.4 956 148.9 963 155 956 164.1ZM943.9 156.6 951.7 162 949 166 941.2 160.5ZM924.5 180.3 929.8 175.2 932.1 178.4 929.8 180.9 931.7 183.6 936.9 179.4 943.6 185.5 937.5 192.4 931.2 186.1 929.8 184.7ZM966.5 175.6 972.2 168.3 977.9 172.7 977.5 178.4 973.2 181.3ZM969.5 177.3 979.6 184.4 974.2 192.2 964 185.1ZM953.5 192.7 959.8 186.1 966.5 190.8 960.7 198.5ZM949.7 202.7 956 196.6 963.6 202.3 957.3 209ZM967.4 207.1 972.2 198.5 977.9 201.3 973.2 209.9ZM968.4 221.4 974.1 214.7 979.8 215.6 982.7 219.5 974.5 227.5ZM982.7 217.8 986.8 214.4 990.3 218.5 986.2 221.9ZM991.5 231.3 999.3 225.8 1002.6 230.5 994.7 236ZM1017 218.7 1027.3 216.9 1028.6 224 1018.2 225.9ZM1026.6 102.1 1035.2 93.5 1039 97.3 1040.9 95.4 1038 91.6 1040.5 89.7 1038 86.8 1042.8 77.3 1053.9 85.5 1048.5 93.5 1055.8 102.1 1053.3 105.5 1044.7 98.3 1043.8 104 1050.4 120.2 1048.5 121.2 1039 110.7 1035.2 109.7ZM1013.8 118.3 1021.8 109.2 1031 116.4 1027.9 120.2 1041.9 131.7 1035.2 140.3 1024.7 131.7 1019.9 124ZM992.8 133.6 1005.6 122.1 1009.4 125 1011.3 122.1 1016.1 126 1014.2 128.8 1005.6 141.2 1001.8 139.3ZM1008.8 140.3 1014.2 134.5 1019 137.4 1024.7 134.5 1027.2 138.4 1018 149.2ZM1026.7 141.9 1030.3 138.8 1033.4 142.5 1029.7 145.5ZM980.4 151.7 988.4 142.2 997.6 149.8 989.8 159.4ZM1019.5 156.5 1026.6 148.5 1034.2 152.7 1031.4 158.4 1027.9 163.2ZM1038.7 149.7 1043.6 146.8 1047 152.6 1042 155.5ZM980.8 164.2 986.6 159.3 991.5 165.2 985.7 170.1ZM992.2 167 999.9 157.4 1003.7 160.3 1006.2 167.9 1001.8 172.7ZM1030.4 168.9 1038 159.4 1044.3 164.1 1037.1 174.6ZM1044.9 166.3 1049.3 162.6 1052.9 167 1048.6 170.6ZM1003.7 183.2 1011.3 176.5 1006.9 172.7 1011.3 169.5 1018 173.7 1024.7 179.4 1022.8 184.2 1025.6 186.1 1021.8 188.9 1018 186.1 1012.3 190.8ZM1040.9 177.1 1046.6 171.4 1055.8 178.4 1050.1 184.7ZM1052.7 184.2 1060.9 176 1069.5 183.2 1065.7 188 1061.9 186.6 1057.1 188ZM1025.3 192.7 1032.3 186.1 1040.5 193.7 1033.3 200.8ZM1060.9 195.6 1069.5 186.6 1081 194.7 1073.3 203.2ZM1077.2 203.2 1085.7 188.5 1094.3 194.7 1090.5 200.4 1093.4 203.2 1083.8 209.9ZM1087.7 210.9 1096.2 204.2 1104.8 208 1098.2 217.6 1092.4 217.6ZM1035.2 209 1039.9 203.2 1043.8 207.1 1040.9 209.9 1045.7 212.8 1049.5 209 1045.7 206.1 1048.2 203.2 1056.2 209.5 1048.5 221.4ZM1061.5 221.4 1069.5 213.4 1081.4 222.3 1073.3 231.3ZM1115.3 224.2 1124.9 215.3 1133.5 222.3 1124.9 231.9ZM1077.2 228.1 1082.9 222.3 1093.4 229 1090.5 233 1081 233ZM1054.3 229 1060 224.2 1068.6 230.9 1066.7 233 1056.2 233ZM1106.7 230.8 1113 226.4 1116.3 231.1 1110 235.5ZM1092.4 50 1099.1 42.4 1102 44.8 1107.7 42 1116.9 51.1 1109.6 61.1ZM1106.4 65.8 1111.5 60.1 1117.2 64.9 1123.3 55.3 1127.7 52.5 1130.6 56.3 1129.6 63 1121.1 74.4 1113.4 69.7 1111.5 70.6ZM1129.3 76.7 1137.3 68.7 1142.4 67.7 1143.6 72.5 1137.3 83.4ZM1120 83.6 1124.2 81.3 1127 86.2 1122.9 88.6ZM1141.1 84 1152 78.2 1152 89.7 1146.8 91.2ZM1122.6 109.7 1129.6 101.1 1154.5 120.2 1144.9 127.5ZM1135.4 145 1143 140.3 1144.9 142.2 1152 139.3 1152 147.9 1141.1 151.1ZM1105.4 155.5 1113.4 146.9 1123 155 1114.9 163.7ZM1094.7 171.8 1112.5 171.2 1113 180.3 1109.6 180.3 1108.6 189.9 1097.2 189.3 1097.8 180.3 1094.7 179.4ZM988.4 234.9 992.2 233 999.9 233 1001.8 236.8 1009.4 236.8 1012.7 241 1007.5 246 1002.7 243.5 999.9 245.4ZM1037.5 241.6 1053.9 239.7 1054.6 249.8 1039 251.1ZM1056.2 233 1069.5 233 1062.8 239.1ZM1072.4 239.7 1078.1 233 1090.5 233 1092.4 234.9 1084.8 240.6 1081 243.5ZM1096.6 241.6 1102 234.9 1101 233 1116.3 233 1117.2 235.9 1111.5 246.4 1105.8 244.5 1101 247.9ZM1101.4 249.9 1107.7 254.3 1106.3 256.2 1100.1 251.8ZM1010.5 255 1019 262.7 1016.7 265.2 1008.2 257.5ZM1020.5 261.2 1025.4 255.3 1028.1 257.5 1023.2 263.4ZM1030.4 271.2 1039 268.9 1039.9 265.4 1043.8 263.9 1052.4 268.3 1048.9 281.7 1041.3 279.8 1039.9 275.9 1038 277.8 1031.4 275.9ZM1073.3 273.5 1082.9 261.6 1087.7 265.4 1085.2 270.2 1091.5 275.9 1086.7 280.7 1083.8 278.8 1081 281.7ZM1080.3 285.9 1084.4 282.5 1087.4 286.2 1083.3 289.6ZM1105.2 294 1117 290.2 1118.9 296 1107.1 299.8ZM1054.3 300.2 1063.8 292.2 1070.5 296.9 1067.6 300.2 1074.9 307.4 1071.1 312.8ZM1121.9 305.2 1127.8 300.3 1132.4 305.8 1126.6 310.8ZM1115.9 310.5 1123.3 317.9 1118.6 322.7 1111.2 315.2ZM1102.4 326.3 1107.9 321.6 1112.2 326.7 1106.7 331.4ZM1091.9 337.7 1098.5 332.1 1103.6 338.3 1097.1 343.8ZM1079.5 321.2 1084.8 317 1090.5 314.7 1095.3 317 1087.1 325 1081 323.6ZM1126.4 327.5 1140.1 318.9 1143.6 324.6 1138.2 332.2 1131.5 339.5 1125.3 335.1 1128.7 331.3ZM1107.3 349 1119.1 338 1123 340.8 1126.8 338.9 1130.6 345.6 1118.2 356.7ZM1143 313.2 1147.8 305.9 1152 305.5 1152 317.9 1146.8 318.9ZM1131.5 366.6 1138.2 361.2 1143 362.8 1152 359 1152 370.4 1142 376.1ZM955 289.3 962.7 280.7 969.3 286.8 961.7 295.6ZM943.6 318.9 948.9 315.4 951.6 317.9 960.7 302.1 967.4 306.5 954.1 326.5ZM958.5 329.4 964.6 324.2 967.4 326.5 973.7 314.1 980.2 318.9 966.5 336.4ZM966.5 345.6 985.6 321.7 990.3 325.6 971.2 349.4ZM978.5 355.1 997 330.3 1002.7 334.1 984.6 359.9ZM1000.8 318.9 1010 308.4 1018 313.2 1008.1 325.6ZM929.8 339.5 937.5 331.3 955.4 347.5 951.2 352.3 945.1 347.5 938.8 349ZM915.9 349.4 920.7 343.7 923.5 345.6 927.9 343.7 933.1 350.4 930.2 353.6 934.4 358 929.8 361.2ZM905.8 358 911.5 352.3 916.5 356.7 910.7 363.2ZM909.6 372.3 917.2 364.3 919.7 355.1 922.2 357 919.7 362.8 924.5 360.9 928.7 364.7 923.5 369.5 921.6 367.5 919.7 370 926 376.5 917.8 382.8 914.6 380.3 915.9 377.1ZM892.4 373.8 899.7 369.5 903.5 366.6 906.4 369.5 899.7 379ZM949.3 359.9 956.9 354.2 961.7 359.3 954.1 366.2ZM956.5 375.2 970.7 367.5 973.7 373.8 959.8 381.9ZM854.8 366.6 858.1 363.7 866.3 370.4 868.8 364.7 872.6 366.6 875.3 358 878.7 359 881 352.8 882.5 347.1 889.2 352.3 886.3 357 882.5 355.1 881.5 359.9 877.7 366.6 876.8 370.4 872 369.5 867.2 377.1ZM820.5 322.7 824.9 315.4 833.8 321.2 831.9 324.6 837.1 322.7 850.1 332.2 842.8 341.4 830.6 331.3 829.1 326.1 825.3 323.6 822.4 325ZM782.3 319.8 791.3 311.6 800.4 309.3 802 317 795.7 318.9 789.4 325.6ZM807.1 295 813.8 291.2 821.8 298.8 817.2 304.6ZM794.5 299.7 799.6 295.5 803.3 299.8 798.2 304.1ZM768 337.6 772.8 339.9 775.6 336.1 781.4 332.2 782.9 329.4 788 332.2 785.6 337.6 787.5 343.3 781.7 346 776.6 341.8 773.7 344.6 768 342.7ZM768 347.5 772.8 349.8 768 357ZM768 389.5 773.7 384.7 779.8 390.4 770.9 398.6 768 397.1ZM782.9 407.6 791.3 391.4 793.8 390.4 800.1 396.2 788 411.4ZM809.6 400.9 824.9 385.3 831.9 389.5 819.5 407.6ZM821.8 408.6 827.2 404.4 830 406.7 835.7 401.3 843.4 407.6 840.1 411.4 842.8 414.3 833.8 418.1ZM817.2 419.1 823.3 416.2 832.9 424.8 828.7 430.5ZM842.4 391 851 381.5 861.1 388.5 854.8 396.7 850.1 392.9 846.2 394.3ZM881.5 393.3 887.3 386.6 893.6 391.4 887.8 398.6ZM888.6 400.9 892 396.7 901.2 403.8 898.2 407.6ZM868.8 407.6 873.9 404.4 876.4 405.7 879.6 403.8 883.5 407 877.2 415.3ZM780.4 445.8 789.9 433.8 797.6 440.1 788.6 451.5ZM768 421 770.9 421 776 428.6 768 435.3ZM859.6 431.5 864.4 426.1 869.1 429.6 872.6 427.7 875.8 430.5 868.8 439.1ZM853.7 428.2 857.4 426.1 859.8 430.2 856.1 432.3ZM921.7 434.4 927.7 430.2 931.8 436.2 925.9 440.3ZM902.5 454.4 907.7 450.6 910.2 452.5 914 444.8 920.3 449.6 912.1 460.5ZM785.2 466 789.9 461.1 793.8 463 796.6 459.1 801.4 462 799.5 466ZM778.5 474.6 785.2 466 799.5 466 792.8 468.3 787.1 473.3 789.9 479.4 786.7 482.8ZM768 469.8 771.8 473.6 768 477.5ZM768 494.6 771.8 497.5 773.3 501.3 768 504.2ZM1143 543.3 1145.5 537.6 1152 538.5 1152 547.7ZM1152 78.2 1154.9 76.3 1159.3 81.1 1153.9 88.7 1152 87.8ZM1153 94.5 1158.7 90.1 1168.2 95.4 1164.4 103.4ZM1170.5 143.5 1178.7 131.7 1183.5 126 1189.8 131.7 1186 135.9 1194.9 143.5 1199.3 139.3 1208.3 146.6 1194.9 161.3 1191.1 157.4 1189.2 158.4ZM1234.4 142.7 1244.6 131.7 1249.7 136.5 1239.4 147.3ZM1224.1 155 1234.1 145.4 1238.3 149.8 1229.3 159.9ZM1152.5 173.6 1160.4 169.1 1163.7 174.8 1155.8 179.4ZM1152 140.3 1155.8 145 1153.9 148.9 1152 147.9ZM1278 265.4 1280.2 258.8 1291.3 259.7 1292.8 256.9 1298 258.2 1294.7 270.2ZM1275.6 273.5 1280.5 267.7 1284.1 270.7 1279.2 276.6ZM1322.8 264.5 1328 258.8 1327.2 256.9 1332.9 252.1 1336.7 256.3 1334.8 258.8 1340.9 265.4 1336.7 272.1 1331.8 271.2 1327.6 268.3ZM1316.1 283.6 1333.7 283.6 1333.7 292.2 1316.1 292.2ZM1277 295 1283.7 290.3 1286.5 291.2 1292.3 289.9 1294.2 294.1 1288.5 298.8 1283.7 301.3ZM1287.2 298.4 1292.3 300.3 1290.8 304.2 1285.8 302.4ZM1265.5 312.2 1268.8 309 1274.5 311.2 1278 305.5 1286.5 309 1279.5 318.5ZM1314.6 311.6 1321.8 305.9 1325.7 309.7 1318.4 316.6ZM1306.2 326.9 1315.2 318.5 1320.9 324.2 1312.3 332.6ZM1316.1 331 1322.1 330.5 1322.7 336.5 1316.6 337.1ZM1322.8 339.9 1327.2 331.3 1332.3 331.3 1338.1 326.5 1342.5 328.4 1340 336.1 1336.2 342.7 1331 350.4 1325.3 345.6ZM1362.3 328.8 1367.6 328.4 1367.6 334.1 1378.1 335.7 1377.6 340.3 1361.9 338.9ZM1358.1 346.5 1367.6 347.5 1367.3 351.3 1374.3 352.3 1373.4 357 1367.6 357.4 1366.7 361.8 1355.8 360.5ZM1358.1 366.2 1368.6 365.6 1369.2 373.3 1366.1 373.8 1365.7 379 1357.2 379.6 1357.7 375.2 1359.6 374.2ZM1265 337.6 1271.8 336.4 1272.6 341.8 1275.7 342.7 1275.7 347.1 1266.1 348.1ZM1304.3 359 1317.6 361.8 1316.5 366.6 1308.9 365.1 1306.2 370.8 1302.8 369.5ZM1324.7 358 1331.4 358 1332.3 363.7 1338.6 364.7 1338.1 370.4 1329.9 369.5 1329.1 364.7 1324.7 364.3ZM1314.2 368.9 1320.9 368.9 1320.9 384.7 1314.2 384.7ZM1330.4 375.7 1340 379.9 1333.3 392.9 1325.3 389.5ZM1266.1 375.2 1271.3 373.8 1271.3 368.5 1281.8 367 1282.7 374.2 1280.8 380.9 1273.2 381.5 1272.2 379.6 1266.1 380.3ZM1261.2 395.2 1267.5 393.7 1268 390.4 1278.3 389.1 1279.5 399 1262.7 401.9ZM1301.8 400.6 1320.9 402.5 1320.3 409 1316.5 411.4 1304.7 409.5ZM1328.5 405.7 1336.2 404.8 1336.7 402.8 1344.7 403.8 1343.8 412.4 1329.1 410.9ZM1358.5 395.2 1361.5 392.4 1364.8 393.3 1370.5 391.4 1371.8 396.2 1360 400.9ZM1363.8 407.6 1368.6 404.4 1371.1 407.6 1378.7 401.9 1382 406.3 1367.6 414.3ZM1368.9 415.9 1375.9 411 1379.8 416.5 1372.7 421.4ZM1390.5 420 1394.4 414.3 1396.3 409.5 1396.7 405.7 1400.1 404.4 1402.4 407.6 1400.5 410.9 1402.4 412.4 1394.4 421.9ZM1184.1 404.8 1201.2 405.7 1200.7 414.3 1183.5 413.3ZM1251.2 423.8 1266.5 420.4 1268 428 1252.8 431.5ZM1282.7 423.8 1299.3 427.3 1298 431.9 1288.5 430.5 1287.5 433.8 1281.4 432.4ZM1211.2 434.3 1217.8 433 1221.1 431.5 1230.2 434.3 1226.8 444.5 1215.9 440.1 1216.5 438.2ZM1390.5 443.9 1398.2 445.8 1397.2 450.6 1404.9 452.5 1406.8 447.7 1410 448.6 1407.3 456.7 1388.6 452.1ZM1281.8 461.1 1299.9 457.2 1301.8 466 1282.7 466ZM1152 305.5 1155.4 305.1 1159.6 307.4 1165 310.3 1155.8 321.2 1152 318.9ZM1164.4 326.1 1170.7 320.8 1173.4 322.7 1175.9 320.8 1179.1 322.3 1181.6 320.8 1184.8 325 1172.6 340.8 1168.2 336.1 1169.6 331.3ZM1152 346.5 1156.8 342.7 1160 339.9 1165 338.9 1169.2 344.6 1157.7 359.9 1152 357ZM1245.1 468.3 1253.1 467.9 1251.2 484.1 1248.4 486 1243.2 485.1 1241.7 482.2ZM1238.3 493.7 1244 487 1252.8 491.8 1246.5 502.3 1241.7 500.4ZM1229.9 516 1233.1 513.7 1232.2 509.5 1240.2 506.5 1241.7 508.4 1250.9 505.1 1253.5 512.8 1231.8 520.4ZM1153.5 501.3 1156.8 496.5 1161.9 498.8 1160 506.1 1166.3 508.4 1170.1 508.4 1177.8 510.8 1176.4 516.6 1172 515.2 1170.7 513.3 1158.7 511.4 1157.3 507ZM1152 540.8 1155.8 538.5 1159.3 531.8 1166.9 533.2 1162.5 550.9 1152 548.4ZM1175.3 541.4 1177.8 535.7 1189.2 538.9 1186.7 545.8 1187.3 556.6 1181.6 557.6 1182.2 546.2 1179.7 543.9ZM1264.2 537 1271.3 535.1 1272.6 538.5 1275.7 538.1 1274.1 529.9 1277.6 528.6 1280.8 540 1266.5 544.6ZM1282.7 466 1301.8 466 1300.9 467.9 1283.7 471.3ZM134.5 224.8 154 208 177.6 234 158.5 246 162.5 251 147.2 261.4 141.3 254.5 152.8 243.5ZM740.9 107.8 789.9 153.6 772.8 171.4 723.7 125ZM176.6 464.4 195.5 448.5 207.3 461.1 219.6 451.9 229 461 220.8 467.5 224.5 473.2 218.4 478.6 213.1 471.6 209 474.5 216.2 483.5 198.3 498.6 183.7 481.4 202.4 466.3 195.9 457.7 181.1 469.6ZM276.5 455.6 282.7 449.9 294.5 462.6 288.4 468.3ZM263.8 470 273.7 461 280.2 468.3 278.6 470.8 287.6 480.6 279.8 488.4ZM169.7 454.4 181.9 443.8 185.6 446.9 192.2 442.1 195.5 445 177 461.4ZM364.9 384.2 381.7 367.4 400.5 388.3 383.7 403.5ZM1141.3 194.1 1144.6 189.5 1145.9 190.5 1147.8 187.2 1147.2 185.9 1149.5 181.7 1160.3 188.9 1162.9 192.8 1168.8 194.4 1182.2 204.6 1173.4 215.4 1166.2 210.8 1165.5 211.1ZM1131.5 211.5 1140.3 200.6 1154.4 211.1 1152.4 214.1 1153.7 215.7 1153.4 217.3 1155.4 219.6 1158 217.3 1164.5 221.9 1157.7 231.4Z" fill="#d5b43c" stroke="#232323" stroke-width="1.3" stroke-linejoin="miter" fill-rule="nonzero"/>
<path d="M263 6.7 269.5 2.9 268.1 1 274.8 0 280.5 8.6 267.6 15.6ZM298.1 1 304.7 -2.8 306.8 0.9 300.2 4.7ZM367.4 1 378.8 11.5 364.5 27.3 358.4 21.9 363.5 16.2 357.3 10.5ZM368 36.4 375.3 30.3 381.2 37.3 373.9 43.4ZM319.6 42.1 327.1 36.2 332.4 43 324.8 48.9ZM327.3 54 343.5 39.5 346.9 43.9 345 45.8 346.4 47.7 341.6 52.5 339.7 51.1 334 57.3 330.2 56.9ZM344.6 49.1 349.4 45.3 353.1 50.1 348.3 53.9ZM357.4 77.3 369.8 66.8 374.4 72.1 367.4 78.2 371.2 83 366.4 87.2ZM371.7 91.1 380 84.6 385.9 92.1 377.6 98.6ZM378 108.5 382.5 105 387.2 111 382.7 114.5ZM136.5 57.3 143.5 51.1 147.3 55.3 145 57.3 149.8 62.6 146 64.9 141.6 59.2 139.3 60.7ZM123.2 68.4 129.5 63.5 134.4 69.8 128.1 74.7ZM126.9 89.3 133.6 87.4 134.5 85.3 143.1 84.5 144.5 91.6 142.2 97.7 135.1 98.3 133.6 93.1 128.2 93.5ZM89.3 95.4 98.3 87.4 101.1 89.7 104.6 87.8 107.8 91.2 105.5 94.5 110.1 100.2 106.9 104.6 104 108.8 101.1 105 103.1 103.1 97.3 96.4 93.5 98.9ZM108.5 112.5 116 106.7 121.3 113.4 113.8 119.3ZM123.7 106.6 126.8 104.4 130.1 109.1 127 111.3ZM46.8 112.2 49.6 109.4 52.5 110.7 57.3 107.8 67.2 114.5 60.7 121.8 55.3 116.4 51.1 116.8ZM82.2 131.8 93.3 144.1 87.3 149.5 76.2 137.2ZM134 135.8 140.7 142.6 134 149.3 127.2 142.6ZM142.2 154.2 145.4 153.2 146.6 157.4 151.7 157.4 152.7 162.2 146 162.2 142.7 159.4ZM163.2 174.6 167.6 169.5 171.8 172.7 178.4 164.1 188 173.3 184.2 178.4 186.1 180.3 172.7 188 167.9 182.3 166 180.3ZM185.5 192.7 189.9 188 193.7 189.9 200.4 184.7 204.2 188.9 194.7 200.4 188 197.5ZM193.7 207.1 203.2 197.5 212.4 206.1 207.1 211.8 203.2 208 199.4 211.8ZM208.4 218.5 213.7 212.8 219.5 219.5 222.3 217.6 226.7 221.4 218.5 228.1ZM241.4 207.3 244.8 208.9 242.6 213.7 239.1 212.1ZM249.7 203.2 252.6 200.8 255.3 204 252.4 206.5ZM140.3 196.6 149.2 188 161.8 201.3 156.1 205.7 150.8 199.4 146.6 203.2ZM121 201.4 128 207.7 125.2 210.9 118.1 204.5ZM129.6 207.7 137.8 200.3 140.6 203.4 132.4 210.8ZM335.5 195.7 347 185.6 352.7 192.1 341.1 202.1ZM356.4 190.7 368.3 181.7 374.9 190.6 363 199.5ZM368.4 158.2 376.2 152.7 381.6 160.5 373.8 166ZM362.4 164.6 366.9 161.1 370.4 165.6 365.9 169.1ZM354 222.3 357.8 216.6 360.7 217.6 365.5 214.1 369.3 219.5 366.4 222.3 371.2 229 367.4 233 358.8 233 356.9 227.1ZM379.4 48.5 382.4 46.2 385.9 50.7 382.9 53ZM240.1 234.9 251.5 223.8 258.6 231.5 247.7 242.9ZM290.1 236.4 308.8 233.4 309.5 238.7 291 241.6ZM309.2 257.8 327.9 238.7 341.6 252.1 322.9 271.2ZM363.2 238.5 370.5 232.4 375.4 238.2 368.1 244.3ZM259.5 264.8 264.6 260.5 268.3 264.9 263.2 269.2ZM265.6 272.1 274.8 262.6 284 272.1 274.8 281.7ZM232.4 276.5 242 268.3 246.2 273.1 244.3 275 250.4 280.7 244.3 286.4 240.1 280.7 236.6 280.7ZM252.9 281.2 259.6 287.9 256.7 290.9 249.9 284.2ZM216.9 286.2 223.1 281.1 227.7 286.6 221.6 291.8ZM204.2 308.4 210.9 302.7 221 315.1 213.7 320.8ZM236.6 301.7 239.5 298.8 245.2 304.6 249 302.1 251.5 305.1 249 307.4 251.5 310.3 248.1 313.2ZM227.5 316 232.8 312.2 237.6 317 240.8 314.1 247.7 321.2 242.4 326.5 238.5 322.7 235.7 324.6ZM252.9 313.2 258.6 308.4 257.3 305.5 261.8 299.8 273.9 314.1 264.3 322.7 259.9 317 256.7 317.9ZM243.3 335.1 250 328 253.8 331.3 256.7 328.8 259.9 332.6 250.4 341.8ZM267.8 339.1 273.9 334 278.8 339.8 272.7 345ZM238.5 347.8 246.6 341 252.7 348.4 244.7 355.1ZM218.1 347.5 226.7 341.2 232.8 347.5 230 349.8 234.4 357 230.9 359.3 226.1 352.3 223.3 354.2ZM198.5 369.5 205.2 362.8 204.2 361.2 209 359 213.7 364.7 202.7 374.6ZM214.2 354.5 220.4 361.8 216.3 365.3 210.2 358ZM218.5 366.6 224.8 362.8 232.4 373.3 226.1 377.7ZM236.5 369.4 245.1 363.4 247.5 366.8 238.9 372.8ZM261.9 354.5 266.2 359.6 264 361.5 259.7 356.4ZM259.7 373.4 268.7 366.3 271.6 370.1 262.6 377.1ZM248.1 380.9 254.8 374.2 261.8 383.8 255.7 389.9ZM230.9 386.1 240.8 377.7 248.1 385.7 238.2 394.3ZM207.1 399 222.9 383.8 231.9 392.4 215.6 407ZM218.9 404.3 226.4 398.4 232.3 406 224.8 411.8ZM238.1 401.8 246.1 395 250.4 400.1 242.4 406.9ZM213.4 413.3 218.5 409 223.7 413.3 230.9 408.6 235.1 413.3 222.3 424.4ZM286.3 336.1 296.8 325.9 310.1 340.8 302.5 351.3 295.4 342.2 296.8 338.9 293.9 337 291 338.9ZM281.5 350.4 285.9 347.1 287.8 349.4 290.5 347.5 292 349.8 286.3 355.1ZM287.8 358 291.6 356.1 293.9 358.6 298.1 354.8 300.6 357.4 293.9 364.3ZM318.3 377.1 324.4 370.8 332.4 379.6 324.4 387.6 320.6 383.8 322.5 380.9ZM299.6 401.9 308.2 389.5 310.7 392.9 313.9 390.4 317.7 394.8 304.4 407ZM277.7 395.2 283.4 389.5 295.8 402.8 291 407 285.3 400.9 282.4 399ZM228.6 430.5 242 420.4 244.3 423.8 264.3 407 267.2 409.5 265.6 403.8 273.3 398.1 288.5 412.4 277.7 421 274.8 419.1 248.1 442 241.4 433.4 234.7 437.2ZM335.5 406.3 355.3 389.5 360.7 395.2 355 400.9 358.8 404.8 351.1 411.4 358.4 420 366 415.3 372.5 421.9 361.6 431.5 346.4 413.9 342.6 413.3ZM309.2 435.3 318.7 426.7 328.6 437.2 324.4 441 327.3 443.9 322.5 447.7ZM285.9 447.7 296.2 438.2 306.9 448.6 296.2 459.1ZM331.7 446.7 338.7 440.6 352.7 456.3 345.4 463ZM366.8 434.3 373.1 428 378.8 433.8 384 429.6 384 449.6 378.8 443.9ZM333.6 350.4 341.6 343.3 350.2 352.3 346.4 357 343.5 355.1 338.7 356.1ZM346.9 337 350.8 333.8 355 338.9 353.4 342.7ZM351.1 335.1 358.8 328.4 372.5 346.5 358.8 359.3 353.1 352.3 361.6 344.6ZM352.1 297.9 360.7 292.2 371.2 304 368.3 306.5 379.8 313.2 384 311.2 384 328.4 370.2 338 359.2 326.5 371.2 316ZM340.6 283.6 354 270.8 360.7 277.8 346.9 289.3ZM356.5 267.4 363.5 261.6 367.4 265.8 371.2 262.6 378.8 271.2 369.8 278.8 366.4 274 362.6 275.9ZM328.2 295.2 335.6 289 340.5 294.9 333.1 301ZM357.3 280.7 360.7 277.8 379.8 297.9 376.9 300.7ZM376.3 287.4 378.8 278.8 384 276.9 384 294.1ZM309.1 276.8 343.5 315 337.9 320.2 303.4 281.9ZM300 299.8 305.3 295 324.4 314.1 326.7 313.2 336.8 322.7 331.1 330.3 323.5 322.7 320.6 322.7ZM292 294.1 298.7 283.6 301.9 285.5 307.6 292.5 299.2 300.2 295.4 298.8ZM287.6 295.8 291.8 295.8 291.8 300 287.6 300ZM330.1 331.6 336.7 326.1 339.7 329.8 333.2 335.3ZM340.6 322.9 345.7 318.6 348.4 321.8 343.3 326.1ZM0 317 1.5 317 1.5 326.5 0 326.5ZM0 347.5 2.9 347.5 2.9 336.1 9.2 336.1 9.2 345.6 13.4 342.7 13.4 322.3 21.9 322.3 21.9 332.2 24.4 332.2 24.4 347.5 18.1 349.4 18.1 356.1 23.9 357 22.9 374.2 17.2 374.2 18.1 379 32.1 379.6 31.5 392.4 26.7 393.3 25.8 401.3 0 400.9ZM66.8 392.9 76 387.2 82.4 395.2 74 401.3ZM82.9 376.5 92.6 370.4 96.5 376.6 86.8 382.6ZM102.7 371.4 114.1 368.1 116.4 379 105 382.2ZM120.2 373 127.6 371 129.8 379.3 122.4 381.3ZM110.7 357 118.3 354.2 122.1 361.2 119.3 362.8 122.1 369.5 119.3 371.4 115.5 364.7ZM121.8 348.5 130.7 345.6 132.6 352.3 128.2 354.2 129.4 357 125.6 359ZM141.1 349.6 148.4 358.3 143.3 362.6 135.9 353.9ZM148.3 358.9 154.5 366.2 149.4 370.5 143.2 363.2ZM154.6 366.3 160.6 372.3 157.7 375.3 151.6 369.2ZM157.4 379 164.1 374.2 167.6 380.9 161.3 385.7ZM162.2 392.4 169.8 382.8 176.5 390.4 170.8 396.2 167.9 395.2 165.1 397.5ZM138 392.2 149.3 383.4 154 389.4 142.7 398.2ZM116.2 385.1 121.3 380.8 125 385.1 119.9 389.4ZM108.6 392.5 116.1 386.6 119.6 391.1 112.1 397ZM102.2 396.3 107.7 392.4 110.8 396.8 105.3 400.7ZM93.9 402.8 99.2 398.6 102.7 401.3 105.9 399.4 107.8 402.5 99.2 409.5ZM85.9 413.3 91.6 405.7 97.3 411.4 89.7 419.1ZM72.1 423.8 77.9 418.1 82.1 422.9 80.2 425.7 84 431.5 87.4 433 84.4 436.2 80.2 432.4ZM89.7 434.8 97.1 443.6 92.7 447.2 85.3 438.5ZM95.7 449.6 102.5 444.3 106.6 449.6 99.8 454.9ZM106.5 440.6 113.5 435.3 115.5 437.2 121.2 433 123.1 436.2 110.7 445.8ZM119.7 429.4 127.5 423.9 130.3 427.8 122.5 433.3ZM128.5 422.6 131.6 420.4 134.9 425.1 131.8 427.3ZM130.7 419.1 140.3 412.4 143.5 417.7 137.4 421.9 134.5 421ZM96.9 423.8 104 417.7 106.9 421.9 107.8 416.6 112.6 412.8 114.5 411.4 118.7 405.7 124 402.5 130.7 394.3 135.9 395.2 136.5 401.3 129.8 409.5 126.9 412.8 123.1 414.7 118.7 420 114.5 423.8 111.6 424.8 107.3 428 101.1 431.1ZM149.8 402.8 156.9 398.6 159.9 403.8 152.7 407.6ZM153.8 409 156.1 409 156.1 411.2 153.8 411.2ZM51.5 444.5 60.7 439.1 59.2 436.8 63.9 434.9 68.3 442 56.9 451.5ZM29 461.1 36.3 454 42.4 460.1 36.3 466 31.5 466ZM49.2 459.1 53.4 456.7 59.2 463 57.3 466 51.5 466ZM116.4 466 152.7 445.2 158.8 455.3 141.2 466ZM180.3 416.6 185.1 412.4 188.9 416.6 193.1 413.3 201.3 425.7 194.7 430.5 188.9 421.9 185.5 421.9ZM177.9 431.9 185.1 425.7 190.8 432.4 196.6 428.6 200 426.1 205.2 433.4 196.6 441.4 192.7 438.2 188 442.5ZM166.4 441 173.7 434.9 179.4 441.4 172.1 447.7ZM197.5 442.9 212.2 431.9 224.8 445.8 209 459.1ZM313 459.1 322.5 452.1 333 462 329.2 466 316.8 466ZM23.9 467.9 27.7 466 33.4 470.8 29.6 474.6ZM116.8 466 143.1 466 125 477.1ZM6.7 485.1 17.2 477.5 20 481.6 9.5 489.3ZM11.4 496.7 15.7 493 19.2 497.1 14.8 500.8ZM0 496.2 5.7 493.7 9.2 500.4 0 505.7ZM22.9 503.2 28.6 494.6 32.8 499.4 35.3 497.5 41 505.1 30.5 513.3ZM95 479.7 102.1 474.6 106.5 481.3 99.2 485.5ZM103.4 485.1 110.3 478.4 114.1 481.6 123.1 480.9 124.4 489.9 115.5 490.4 114.5 493.1 104 491.8ZM78.6 495.6 84 488.9 88.2 489.9 91.6 487 95.4 491.8 84 503.2 80.2 500.4ZM68.3 511.4 81.7 507 84 513.3 70.2 517.5ZM94.5 516 99.2 512.8 103.1 517.5 114.1 509.5 122.1 520.4 109.2 530.5ZM134.5 525.5 150.4 511.8 156.5 519.1 141.2 532.8ZM173.3 492.8 181.9 486.8 184.7 490.7 176.1 496.7ZM227.5 504.2 242 490.8 257.3 506.5 242.7 520.4ZM257.9 488 264.2 483.6 268 489.1 261.8 493.4ZM293.5 475.9 301.1 469.4 310.1 480.3 306.9 483.6 307.6 488.9 294.8 501.3 292.9 500 303.8 487.9ZM309.2 477.5 316.8 470.8 314.9 467.9 317.7 466 334 466 327.3 472.7 324.4 476.5 316.8 484.1ZM243.9 522.3 251.5 516.6 265.6 533.2 257.6 540.4ZM256.7 517.5 265.3 511.4 277.1 524.8 268.7 531.8ZM282.4 522.3 293.9 509.5 298.7 514.7 286.3 526.1ZM203.8 519.4 211.5 512.8 224.2 528.6 212.8 538.1 208.4 532.8 210.3 529.9ZM190.8 534.7 200 527.5 205.2 534.7 209.9 541.4 202.3 548.1 200.4 553.8 195 547.1 198.5 543.9ZM163.2 550 174 541.4 176.5 544.2 180.3 542.3 186.1 549 180.3 554.2 190.8 566.2 199.4 560.5 200.8 563.3 184.2 576.3 173.3 560.5 171.4 559.5ZM213.7 542.3 220.4 537.6 223.3 539.5 229 531.8 232.8 535.7 231.9 538.5 239.5 547.1 229 553.8 224.2 550.9 219.5 548.4ZM235.1 553.8 243.3 544.6 252.3 555.7 249 561.4 246.6 565.6 242.4 563.3 236.6 557.6ZM220.9 561.6 227.2 557.2 231.4 563.2 225.1 567.5ZM232.1 559.2 240.2 573.2 238.2 574.4 230.1 560.3ZM238.3 559 245 570.5 243.4 571.5 236.7 559.9ZM217.6 579 224.2 574.4 225.2 570 229 568.1 233.2 574.8 221.8 583.9ZM268.7 543.3 279 533.7 282.4 538.5 286.3 541.4 291 548.1 286.3 550.9 280.5 547.1 274.8 550.9ZM292.4 557.2 301.9 548.1 305.3 550.9 303.4 553.8 311.1 561.4 315.3 559.5 317.7 563.3 314.9 567.1 316.8 570 311.5 575.2 303.8 567.1 305 563.7 299.6 563.3ZM316.4 586.6 331.1 570.6 334 572.9 319.1 588.5ZM340.6 583.9 349.2 579 363.5 598.6 355.3 604.4ZM363.5 575.7 369.3 571.3 373.7 577.6 376.9 574.8 384 582.4 384 588.1 376.9 592.3ZM378.8 565.2 384 562.4 384 572.9ZM44.8 533.7 60.7 521.7 66.8 528.6 50 540.4ZM28.6 536.2 40.1 531.3 43.5 540 32.4 544.6ZM16.2 550 23.9 543.3 31.5 551.9 23.3 559.1ZM40.4 544.8 47 545.9 45.5 554.4 38.9 553.2ZM71.6 542.7 84.9 546.2 81.7 559.9 68.3 556.6ZM94.5 553.8 104 545.2 112.2 553.4 102.7 562.4ZM85.9 574.8 97.3 565.2 99.6 569.1 88.7 578.2ZM58.2 587.2 72.1 576.7 77.3 583.9 63 594.2ZM36.6 601.1 51.5 588.5 56.9 594.8 42 607.2ZM135.9 582.4 147.9 574.4 154.2 581.5 151.7 584.7 154.2 588.1 146.9 597.3ZM162.9 573 167.8 578.8 164.6 581.5 159.7 575.7ZM169.3 580.1 178.7 573.5 182.6 579 173.2 585.6ZM197.6 572.6 201.3 580.4 198.2 581.9 194.5 574.1ZM154.8 593.8 160.8 589.6 163.9 594 157.9 598.1ZM203.8 590 207.1 587.2 206.1 584.3 210.9 579 221.4 592 210.9 599.6ZM190.5 603.4 194.7 599.6 194.3 595.8 199.4 592.9 201.9 596.7 204.6 595.8 208 601.9 195.6 611ZM240.5 594.2 245.2 590 250.4 595.8 245.8 600.5ZM251.5 586.2 258 581.5 268.1 593.5 264.3 595.8 271.9 600.5 268.1 604.4 262.4 598.6 258 601.1ZM270.6 608.2 280.9 599.6 290.1 611 282.4 618.3 282.8 623.4 280.2 625.4 276.7 621.5 273.9 622.1 271.4 616.8 273.9 613.9ZM226.7 603.4 236.3 595.8 246.2 605.3 239.5 612.9 247.7 622.1 240.5 627.8 232.4 616.8 233.8 612.6 226.7 608.2ZM212.8 624.8 225.2 614.5 235.1 625.4 230.9 628.6 227.5 624.4 219.5 632ZM200.8 637.4 207.1 631.1 214.1 638.1 207.6 644.4ZM170.8 608.2 177.5 604.4 180.9 610.1 178.4 612 188 610.1 191.2 617.7 182.8 623.4 178.4 617.1 175.6 617.7ZM157.5 613.9 165.5 609.3 168.8 615.1 160.9 619.7ZM165.1 621 170.8 617.7 173.3 622.1 170.8 624 179.4 629.7 173.3 634.9 167.9 628.2 168.9 625.9ZM111.6 602.5 119.3 597.3 129.4 608.7 122.1 615.2ZM90.6 614.9 97.7 608.7 100.2 611 108.8 606.3 111.6 612 99.2 620.2 100.2 624.4 96.4 627.3 92.6 621ZM78.6 624.6 85.2 619.1 90.1 624.9 83.5 630.5ZM110.7 619.6 115.5 616.8 122.5 626.7 117.9 629.7ZM99.6 628.2 104 625.9 111.1 635.5 106.9 638.1ZM119.3 631.1 125 628.2 131.3 639.3 126.9 642.5ZM128.8 627.3 133.6 624.8 135.9 627.8 142.2 622.9 147.9 632 140.3 638.7 134.5 635.5 132.6 632ZM107.3 640.6 114.1 636.8 123.1 650.2 116.8 654.5ZM144.7 646.3 149.2 640.6 163.7 649.6 159.4 656.8ZM133.2 648.3 137.8 645.8 145 657.8 143.1 659.1 152.7 667.3 147.9 670.6 140.3 662.6ZM120.6 654.9 125 652.6 133.6 666.4 129.4 669.2ZM131.3 670.6 135.1 667.9 142.7 676.9 138.9 680.1ZM11.8 627.8 23.3 617.7 32.8 628.2 21.4 638.1ZM0 621.5 8 632.4 4.2 635.5 0 633.9ZM60.1 641.6 68.7 635.5 74.4 642.5 65.8 649.2ZM186.1 656.3 192.3 651.2 197.4 657.3 191.3 662.5ZM237.6 640 246.2 633.6 263.7 651.1 248.1 666.4 240.5 658.7 243.9 655.3 240.8 648.8 242.7 646.3ZM305.7 646.9 314.9 640 324.8 652.1 317.7 660.3ZM230.9 672 236.7 667.1 241.6 673 235.8 677.9ZM205.7 682.6 217.2 670.6 231.9 682.6 220.4 695.4ZM163.7 678.8 169.5 673.6 173.7 675.9 176 674.4 190.8 689.7 183.6 696.9 176.5 693.1ZM32.8 662.6 39.1 660.7 41 665.4 51.1 662.6 55.3 674 46.8 677.5 44.8 673.1 36.6 675.9ZM10.5 685.5 18.1 678.2 27.1 689.3 21.4 694.1 18.1 692.1 14.3 696ZM103.1 692.1 115.5 680.7 126 691.2 118.3 699 108.8 699ZM88.2 689.3 94.5 682.6 100.2 689.3 95.4 694.1 99.2 699 89.7 699ZM58 696.7 66.8 689.4 71.7 695.2 63 702.6ZM148.9 695 156.9 689.7 165.6 694.1 167.9 699 150.8 699ZM285.9 663.5 295.4 654 301.5 660.7 292 669.8ZM299.3 663.7 304.4 669.8 300.7 672.9 295.6 666.8ZM306.5 674.9 311.2 669.3 314.8 672.4 310.2 677.9ZM324.4 664.5 329.2 660.3 333 662.6 339.3 669.2 330.2 678.8 326.7 674.4 329.8 671.7ZM262.4 685.5 267.2 680.7 269.5 682.6 274.8 678.2 279 682.6 269.5 693.1ZM308.8 689.7 319.1 678.2 326 683.6 315.8 696ZM341.6 694.1 355 684.5 360.7 692.1 355 699 344.5 699ZM359.7 644.4 367.4 635.8 376.3 645.4 366.4 655.3 362.6 650.7 364.1 648.3ZM372.6 629.6 379.7 639.7 377.4 641.4 370.3 631.2ZM377.5 630.1 384 622.9 384 637.8ZM286.3 699 292 694.1 297.7 695 300.6 691.2 305.3 692.1 310.1 699ZM263.8 698.2 268.1 694.6 270.6 697.5 266.2 701.2ZM18.1 708.5 29.6 699 36.3 699 34.4 703.8 38.2 708.5 42 712.4 34 720 27.7 712.4 23.9 715.2ZM55.3 702.8 61.1 699 73.5 699 63 709.5ZM64.9 710.8 76 703.2 81.1 710.1 69.7 718.1ZM90.6 703.8 95.4 699 112.6 699 105.9 707.6 99.2 713.3ZM150.8 699 163.2 699 156.5 705.1ZM184.1 701.7 188.5 698 191.9 702.1 187.5 705.7ZM189.9 704.7 196.6 700 206.1 710.5 200 716.2ZM232.8 709.5 240.8 702.4 245.2 700.9 254.2 708.9 250 712.7 245.2 708.5 242.4 711.4 247.1 717.1 243.3 720ZM247.7 722.3 251.5 719.6 256.7 720.4 256.7 722.9 252.3 726.7ZM280.9 708.5 289.7 701.9 288.2 699 307.3 699 302.5 704.7 305 707.6 297.7 712.4 294.8 710.1 289.1 716.2ZM265 701.6 270.1 697.3 273.2 701 268.1 705.3ZM346.1 700.3 350.5 696.6 352.3 698.8 348 702.5ZM324.8 715.8 332.1 709.5 340.1 715.8 333 723.8ZM336.8 730.5 342.6 721.5 346.9 726.7 343.5 729.2 345.8 733 342 737.2ZM310.7 735.3 314.5 731.4 313 727.6 320.6 720.9 325.4 727.2 313.9 738.1ZM255.7 729.2 264.9 719.6 271 724.8 272.9 728.6 278.6 734.9 272.9 740 266.8 733.4 263.4 736.2ZM213.7 729.5 220.4 721.9 228.1 730.5 240.1 741.9 234.4 746.7 227.1 739.1 222.3 736.2 216.6 735.3ZM200.8 745.8 207.1 740 214.7 747.1 209 753.4ZM295.4 744.8 301.9 739.5 312.6 750.9 305.3 757.8ZM278.6 764.8 282.8 760.5 285.3 762 291 756.3 295.4 761.6 299.6 760.5 303.8 766.2 300 770.6 295.8 766.2 285.3 774.4ZM229 767.7 240.8 754.3 247.1 759.7 235.1 772.5ZM265.6 781.4 273.9 774.4 276.7 776.3 279 775.3 282.8 780.7 271 791ZM274.8 794.5 282.2 787.1 285.6 790.5 278.1 797.9ZM252.3 808.2 258 803 255.7 800.1 266.2 796.3 270.6 801.1 258.6 812.5ZM231.3 817.3 240.5 809.7 247.7 815.4 239.5 824ZM255 829.5 262.3 823.4 267.9 829.9 260.6 836.1ZM220.4 836.4 231.9 829.7 247.1 845 242.4 846.9 236.6 845.9 230 845.9ZM170.2 727.2 179.4 723.8 183.2 717.1 179.4 713.3 182.8 710.8 194.7 724.8 179.8 738.1ZM157.4 725.7 161.8 722.3 172.1 733.4 168.3 737.2ZM149.8 740 154.2 736.2 159.9 740 165.1 736.8 169.5 742.5 158.8 750.9ZM140.7 742.9 145.8 738.6 150.1 743.7 145 748ZM135.9 731.8 142.7 725.7 149.2 731.8 142.2 738.7ZM121.8 731.4 126.3 726.7 133.6 734.3 128.8 739.1ZM131.3 720 141.2 708.9 145.4 712.7 136.5 725.3ZM78.2 724.2 93.1 712.7 96.9 717.7 89.3 724.8 91.6 728.6 91.2 733.4 87.4 736.2ZM103.4 750.9 113.5 741.4 121.8 747.7 112.2 760.1ZM120.3 753.7 125.3 750.2 128.6 754.9 123.6 758.4ZM144.1 755.9 147.9 750.9 152.7 755.3 156.9 752.4 162.6 757.2 152.7 764.8ZM139.3 762.1 144 758.2 147.7 762.6 143 766.5ZM124.4 775.3 137.4 764.8 142.2 770.6 129.8 781.4ZM167.6 781.4 176.5 771.9 182.8 777.6 174 787.7ZM187.4 777.2 202.7 762.9 209.5 770 206.1 773 203.8 771.1 191.8 782.6ZM199.9 789.9 206.4 784.4 211.6 790.5 205 796.1ZM211.5 788.3 218.5 780.7 228.1 790.2 221 797.9ZM194.7 806.8 199.4 801.7 208 809.7 202.7 815ZM180.3 816.4 187.4 811.2 197.5 823 190.8 828.4ZM146.6 807.8 154.2 800.1 157.4 803.6 161.8 805.9 163.7 808.7 156.9 814.5ZM155 796.3 160.3 791 167.9 799.2 162.6 805.9ZM168.9 831.6 174.6 826.5 179.4 826.5 182.3 830.7 178.4 833.5 181.3 836.8 176.5 840.6ZM143.5 833.5 147.9 829.2 156.1 837.4 151.7 842.1ZM149.2 847.9 155 842.5 163.7 851.7 157.4 857.4ZM158.8 864.6 166 858.9 176 869.8 169.5 876.1ZM195.6 849.8 200.4 845.6 209 854 204.2 858.4 200.4 858.4ZM201.1 859 205.8 862.9 202.7 866.5 198 862.6ZM172.7 885.6 183.2 875.5 194.3 885.1 187 892.1 182.3 887 177.5 890.8ZM212.8 881.3 216.6 878 219.1 881.3 222.3 880.3 221.8 885.1 218.5 887.5ZM137.8 891.7 145.4 885.6 149.8 889.8 146.6 892.7 149.8 895.6 146 899.4ZM153.1 903.2 167 901.7 168.9 917.5 155 918.8ZM186.1 908 191.2 901.3 194.7 900.3 211.8 909.9 206.1 920.4ZM161.8 921.3 167 918.5 174.6 928 171.8 932 168.9 932ZM220.6 921.6 224.5 927.1 222.1 928.7 218.3 923.2ZM286.3 907 292.9 898.4 305.3 905.1 312 892.7 320.6 896.5 305.3 932 292.9 932 299.6 916.6ZM7.6 745.8 20 735.3 26.3 740 21.4 744.8 34.4 760.5 26.7 767.3ZM31.5 750.1 42.9 741 47.7 746.7 36.3 755.9ZM30.9 767.7 45.8 755.9 50 761 35.3 772.5ZM39.1 722.9 46.8 715.8 53.4 723.8 59.2 729.5 63 734.3 57.3 738.1 54.4 741.4 50 736.2 45.8 731.4 44.3 727.2ZM51.1 750.9 66.8 738.1 72.1 743.8 56.3 755.9ZM0 772.5 7.6 780.1 0 786.8ZM0 725.7 7.6 719.6 13.4 725.7 10.5 728.6 13 732.4 8.6 736.2 0 729.5ZM14.9 729.5 18.1 721.9 20 722.9 18.7 726.7 23.9 729.5 17.6 735.3ZM55 796.7 62 791.6 67.7 798.2 60.7 804.3ZM79.1 775.5 85.1 784.1 80.4 787.4 74.4 778.8ZM84.8 769.1 91.4 778.5 87 781.6 80.4 772.2ZM92.3 762.9 99.4 773 94.7 776.3 87.6 766.2ZM83.3 790.2 91.4 783.5 96 789.1 88 795.8ZM94.5 784.9 101.1 779.2 108.4 787.7 103.1 794.4 99.2 790.6ZM68.3 809.7 82.4 800.1 86.8 806.8 72.5 817.3ZM76 823.2 83.4 819 87.4 825.9 80 830.2ZM107.8 797.9 114.1 794 124.4 807.8 118.3 812.5ZM117.4 818.3 125 812.5 135.9 825.9 127.9 832.6ZM125.7 837.1 131.3 832.5 135 836.8 129.4 841.5ZM95.4 837.4 102.1 832.6 111.6 845 105.9 849.8ZM104 853.6 125 838.7 129.4 844.4 119.3 851.7 127.5 862.7 121.8 867.3 113.5 856.4 109.2 859.3ZM120.2 871.1 126.9 866 133.6 872.7 137 875 130.2 882.2ZM22.5 810.1 32.8 801.1 36.3 804.9 32.4 808.2 35.3 809.7 41 812.5 32.8 820.2 28.6 815.4ZM9.9 818.8 18.1 813.5 20.6 815.8 24.4 810.1 28.6 815.4 16.8 826.9ZM0 827.2 6.7 822.1 13 829.7 11.5 832.6 20.6 838.3 16.2 841.7 8 835.5 0 832.6ZM41 829.7 47.3 823 61.5 833.5 55.3 843.1 48.7 837.4 50 834.1ZM25.8 839.3 30.5 834.9 34.4 840.2 40.1 837.4 45.4 849.8 38.2 852.1 32.8 844 29.6 845ZM21.4 855.9 30.2 848.8 36.3 855.9 28.2 863.5ZM4.2 863.5 11.8 858.4 15.3 862.7 20 866 16.2 870.4 11.8 867.3 9.2 869.8ZM55.3 870.8 59.2 866 61.5 867.3 60.1 863.1 69.1 850.7 74 854.5 78.2 855.9 84 867.9 78.2 873.6 74 866.9 69.7 869.2 70.6 873.6 72.9 879.3 69.1 883.7 64.5 878.4 62.6 882.6ZM44.3 879.9 49.2 876.5 51.5 879.3 54.4 877.4 57.3 881.3 55 883.2 57.3 887 50 892.1 45.4 887 47.3 884.1ZM50.8 895 55.8 891.5 59.1 896.2 54.1 899.7ZM0 877.4 5.3 874.2 10.5 879.9 0 887ZM70.2 905.1 93.5 886.4 97.7 891.7 74.4 910.5ZM104 900.3 109.7 895.9 119.3 907.4 114.1 912.4ZM15.6 903.6 23.9 895.6 35.3 909.9 28.6 915 23.3 908.9 20 909.9ZM25.8 893.3 31.5 887.9 34.4 890.8 32.4 892.7 38.2 893.7 42.9 892.7 44.3 896.5 36.6 902.2 32.8 897.5 29.6 897.5ZM3.8 916.2 11.5 908.9 17.6 915.6 9.9 922.7ZM27.9 921.1 33 916.8 37 921.5 31.8 925.8ZM11.8 925.1 17.2 921.3 23.9 929 21 932 16.2 932ZM428.8 1.6 434.6 -3.3 437.7 0.3 431.8 5.2ZM440.4 18.4 444 15.4 446.7 18.6 443.1 21.7ZM451.8 25.6 464.2 15.2 471.6 24 459.1 34.4ZM506.7 19.5 516.2 10.7 524.7 19.8 515.2 28.6ZM550.4 0 567.6 0 557.3 8.6ZM588.9 15.1 610 -0.3 619.6 12.8 598.4 28.2ZM627.6 2.2 633.5 -2.8 636.5 0.9 630.7 5.8ZM648.9 11.7 661 -0.4 663 1.6 650.9 13.8ZM644.6 9.6 649 5.9 652 9.5 647.7 13.2ZM666.2 4.2 676.7 -4.1 682 2.7 671.5 10.9ZM684 7.2 689.8 2.3 694.7 8.1 688.9 13ZM722 2.3 729.8 -3.2 733.1 1.5 725.2 7ZM648.5 21.5 656 15.6 660.7 21.6 653.2 27.5ZM611.3 31.8 616 27.9 619.7 32.3 615 36.2ZM661 25.5 673.6 37.2 667.3 43.9 654.7 32.2ZM684.9 19.2 700.1 6 706.3 13.2 691.2 26.4ZM692.6 25.6 707 13.1 715.8 23.2 701.4 35.7ZM683.7 37.5 693.8 28.7 701.9 38.1 691.8 46.8ZM672.5 50.2 683.3 40.8 692.1 50.9 681.3 60.3ZM729.4 45.8 745.6 32.4 751.9 40.1 743.7 47.7 746.6 51.9 739.9 57.3ZM721.2 52 727 47.1 731.9 53 726.1 57.9ZM746.6 65.8 756.1 51.1 762.8 50 768 55.3 768 66.8 760 63 753.3 69.7ZM716.1 63.9 723.3 57.3 731.7 66.8 727.5 69.7 732.3 73.5 728.5 76.3ZM743.5 66.6 753.9 83.3 745.8 88.3 735.4 71.7ZM753.3 88.2 761.5 81.1 768 87.4 768 104ZM700.4 75.4 711.3 65.8 717 72.5 712.2 76.3 710 74.4 705.6 78.6 708.4 82.1 706.1 83.6ZM715.1 76.3 722.7 71.6 735.5 86.8 721.8 99.2 718.4 94.5 727.5 86.3ZM690.3 84 696 78.6 700.8 83 697 86.8 704.6 94.5 709.4 91.6 711.3 94.5 702.7 102.1 697 95.4 694.1 92.6ZM660.3 112.6 681.7 92 689 96.4 685.5 105 680.8 104 681.7 112.6 675 119.3 671.2 114.5 674.1 111.6 671.2 108.8 664.5 116.4ZM651.2 126 661.7 116.8 666.4 121.2 676 112.6 678.8 116.4 670.3 125 666.4 122.1 662.6 126 670.3 134.5 675 130.2 678.8 134.5 669.7 143.5 661.7 134.5 658.8 133.6ZM633 137.4 643.5 127.5 647.4 131.7 644.5 134.5 646.4 136.5 636.9 142.7ZM635.9 152.7 648.3 142.2 647.4 140.3 655 137.8 661.1 143.5 642.6 160.3ZM613 170.8 622.5 162.2 626.4 166 632.1 161.3 628.7 157.4 633 152.7 640.7 162.2 624.8 178.4 620.6 174.6 617.8 176.5ZM585.2 191.1 599.6 178.6 608.4 188.7 594 201.2ZM603.6 184.6 613.7 175.8 620.5 183.7 610.5 192.5ZM600.1 176.5 610.1 167.7 614.5 172.8 604.4 181.5ZM640.3 180.5 651.7 170.2 655.5 174.5 644.2 184.7ZM679.8 139 707.4 168.6 700 175.5 672.4 145.9ZM711.4 129.1 754 168.8 743.6 180 701 140.3ZM542 56.9 553.5 47.1 582.5 76.3 584.4 75.4 589.2 81.1 594.9 83.6 600.6 79.8 631.1 112.6 610.1 133.6 611.1 135.5 595.8 149.8 573.3 120.2 578.7 115.5 583.4 119.3 591.1 112.6 582.5 103.1 576.7 102.1 568.2 93.5 572 89.7ZM614.4 38.1 639.1 64.6 633.8 69.5 609.1 43ZM601.6 75.8 608.8 69.1 618.7 79.2 627.3 72.1 621.6 67.7 624.5 65.8 633.6 73.5 625.4 82.1 630.2 86.8 626.4 89.7 639.7 105.9 633.6 111.6ZM626.4 83.4 638.2 73.1 652.7 89.7 639.7 100.8ZM640.7 73.9 664.5 53.8 675.6 66.2 651.6 86.8ZM384 45.8 391.3 40.1 398.9 48.7 390.7 56.3 384 50.6ZM398.9 61.1 405 54 412.6 62 407.9 65.8 404 63.9 400.8 67.2ZM425.6 63 432.7 50.6 435.5 53.4 434 57.3 441.3 58.2 440.3 62 447 65.8 442.2 69.7 433.6 75.4 428.8 69.7ZM440.3 52.7 452.8 42.3 460.1 51.1 447.7 61.5ZM403.8 77.2 409 73 412.6 77.3 407.5 81.6ZM417.7 79.9 425 73.8 430.5 80.4 423.2 86.5ZM478.8 57.3 495.6 41 502.7 48.7 494.7 56.3 490.9 53.4 483.2 62ZM470.5 69.3 473.4 66.8 477.7 71.9 474.8 74.4ZM488 72.9 498.5 63 506.7 71.6 492.8 84.9 489 81.1 496.6 75.4 493.7 72.1 490.9 74.8ZM465.1 91.6 475.2 80.2 482.9 88.7 478.5 92.6 480.4 94.5 475.2 99.2 471.8 96.4 469.9 97.3ZM473.2 98.2 479.1 93.3 481.8 96.5 475.9 101.4ZM455.6 93.5 459.4 90.3 473.7 106.9 479.4 110.7 473.7 117.4 469.5 113.5 471.8 110.7 466.1 105.9 462.2 110.7 458.4 107.8 462.6 102.1ZM433.9 96.9 442.8 100.1 440.2 107.3 431.3 104.1ZM419.9 114.2 427.9 107.5 434 114.8 426 121.5ZM380.7 108.8 389.5 101.4 395.7 108.8 386.9 116.1ZM410.7 125 415.5 118.3 422.2 126 425 125 429.8 128.8 426.9 131.7 423.1 128.2 419.3 130.7 414.5 129.8ZM505.2 93.5 520.5 77.3 526.7 84 510.9 101.7 508 98.3ZM517.6 100.2 520.5 95.4 519.5 93.5 530 83 537.6 91.2 523.3 104ZM504.4 115.3 509.1 112 512.4 116.7 507.7 120ZM481.3 126.9 487.1 119.8 490.9 122.1 496.6 127.9 489.9 135.1 484.2 131.7ZM498.6 133.1 504.4 128.2 508.7 133.3 502.9 138.2ZM498.4 146.9 522.6 124.4 529.1 131.4 505 153.9ZM439.3 133.6 449.8 125.6 456.1 131.3 447.9 138.4 444.7 135.9 442.2 137.8ZM458.4 138.9 466.1 129.4 469.9 133.6 473.7 131.7 483.2 141.6 475.6 148.9 466.1 140.3 462.2 141.6ZM431.1 136.5 435.2 134.1 438.1 139.1 433.9 141.5ZM428.3 150.8 434 143.1 441.3 145 442.8 148.9 438.4 151.7 439.3 154.2 434 156.9ZM383.9 145.7 388.1 143.3 390.9 148.2 386.8 150.6ZM398.7 148.9 408.3 158.8 402.1 164.8 392.6 154.9ZM437.4 167.9 448.9 156.5 456.1 164.1 459.4 166 464.5 169.5 458.4 178.4 451.7 173.3 447 175.6ZM422 175.3 431 188.1 425 192.3 416 179.4ZM384 188 398.3 178.4 401.6 183.2 384 194.7ZM481.3 155.5 488 151.3 490.9 153.6 493.7 152.7 498.5 157.4 496.6 161.3 498.5 164.1 493.7 166 489.9 162.2 487.1 159.4 484.2 159.9ZM492.9 166.2 497 163.9 500.3 169.6 496.2 172ZM498.1 174.6 504.2 167.9 517.6 182.3 522.4 186.1 517.6 190.5 514.7 188 508 187 504.2 182.3ZM530.5 188.5 542.7 201.1 535.2 208.4 523 195.8ZM535 180.5 552.1 164 567.8 180.2 550.6 196.7ZM563.4 167.9 573.9 156.5 579.6 162.2 568.2 172.7ZM572 152.7 579 146.9 574.8 142.2 578.3 139.3 590.5 151.7 579.6 161.8ZM559.8 139.9 568.6 132.6 575.3 140.6 566.6 148ZM535.8 137 551.9 154.3 547.5 158.4 531.3 141.1ZM493.4 198.6 498.5 194.3 502.8 199.5 497.7 203.8ZM501.9 209.9 507.1 205.2 505.2 202.7 510 195 517.6 202.3 513.8 207.1 520.5 212.8 511.9 221.4ZM483.6 216.6 491.6 208.5 497 213.9 488.9 222ZM490.5 227.1 498.5 217.6 506.1 223.3 502.3 228.1 505.2 231.9 500.4 233 494.7 233ZM565.9 210.3 577.9 200.9 583.8 208.4 571.8 217.8ZM427.9 228.1 441.3 217.6 451.7 227.1 447 233 431.7 233ZM465.7 229.9 473.2 224 477.9 230 470.4 235.9ZM546.2 229 560.5 217.2 566.8 223.3 555.8 233 548.1 233ZM620.6 228.1 629.2 220.4 636.3 228.1 635.9 233 634 235.9 628.3 238.7 620.6 233ZM384 238.7 388.2 237.2 393.9 242.2 388.2 248.6 384 247.3ZM416.4 250.6 431.7 236.8 429.8 233 449.8 233 452.3 243.5 445.1 248.3 439.3 243.5 429.8 252.1 434 256.9 426.4 263.2ZM466.4 233 475.2 233 488.6 246 482.3 251.7ZM497.5 235.2 503.3 230.2 506.4 233.9 500.5 238.8ZM435.1 262 445.5 253.6 455 265.4 444.7 273.5ZM385 261.6 389.7 256.9 395.1 261.6 401.2 263.5 393.5 273.1 386.9 267ZM400.2 279.8 413 265.8 421.8 269.3 420.3 274 414.5 272.1 403.1 283.6ZM421.2 274 426.9 270.2 433.2 276.9 426.9 282.2ZM410.3 283 415.5 278.8 421.2 284.5 425 280.7 434 288.3 445.1 274 451.2 281.7 438.4 293.7 434 289.3 426.9 302.1 416.4 294.5 418.7 291.2ZM384 275.9 387.8 275.9 395.8 285.5 384 294.5ZM395.8 297.9 403.1 289.9 419.9 306.5 412.6 313.2ZM398.3 307.4 403.1 304.6 412.6 314.1 406.9 318.5ZM388.2 306.5 392 304 401.6 314.7 398.3 317.9ZM384 307.4 392.6 317 384 325.6ZM431.7 331.3 446 318.9 449.8 314.7 468.4 298.8 485.1 317 477.1 325.6 471.4 319.3 461.9 326.5 457.5 322.7 449.8 332.2 450.8 337 453.7 346 448.5 350.4ZM416.1 354.2 424.5 347.9 422.2 344.6 428.3 337 435.9 346 419.9 360.5ZM401.6 357 407.9 351.7 417.4 361.2 410.3 367.5ZM392.6 357 396.4 354.2 409.8 366.6 405.9 370.4ZM388.2 361.2 392.6 358 405.4 373.3 401.2 377.1ZM400 389.8 405.8 386.5 409.2 392.2 403.4 395.6ZM475.6 288.3 488.6 276.5 507.1 297.9 500.8 302.7 503.8 306.5 497.9 312.2ZM492.4 274.6 502.7 267 528.5 297.5 524.6 301.7 519.1 295 515.7 297.5ZM505.2 265.4 513.8 256.9 524.8 268.3 539 255.5 560 279.8 551.9 289.3 545.8 282.2 547.7 280.3 540.5 270.8 535.7 270.2 532.9 274 541.4 283 537.1 286.4 529.4 277.3 526.2 279.8 540.9 296.9 536.7 300.2ZM532.9 244.5 536.7 241 551.9 257.8 556.7 255.9 561.5 261.6 554.8 267.7ZM538.2 239.7 546.2 233 554.8 239.7 546.2 247.3ZM560.5 234 567.2 233 572 233 579.6 240.6 572.9 246.7ZM593.9 239.7 601.6 234 618.7 252.1 601.6 267.7 596.2 262 604.4 254.9 600.6 252.1 601.6 249.2ZM573.9 253 578.7 249.8 593.9 264.5 586.3 270.2ZM588.6 271.2 594.3 267 604.4 283 599.6 286.4ZM606.3 269.3 615.3 264.5 634.4 289.3 625.4 295.6ZM637.8 238.7 643.9 234 656.5 247.3 650.2 253ZM656.9 242.5 664.2 235.9 676.4 248.3 668.7 255.9ZM697.4 258.8 705.6 251.7 715.7 263.5 706.5 270.8ZM685.9 268.3 694.1 261.2 707.5 275.9 699.8 283ZM668 284.5 677.9 275.4 689 288.3 678.8 296.9ZM505.8 319.8 529.4 300.2 534.8 306.5 520.5 321.7 522.4 324.2 515.7 330.7ZM530.9 312.2 536.7 307.8 545.8 321.2 540.1 324.6ZM535.1 332.6 547.7 322.7 556.7 332.2 543.9 342.7ZM542.4 353.6 549.6 347.5 557.3 355.1 549.6 362.4ZM614.5 322.3 621 315.4 630.6 324.6 621.6 333.2 617.8 330.3 619.7 327.5ZM616.5 338.8 622.4 333.9 626.7 339 620.8 343.9ZM651.6 318.5 656.5 313.5 660.7 317.9 664.5 314.7 675.6 326.9 672.2 330.3 666.1 324.2 661.7 326.9ZM473.7 342.7 499.5 349.8 496.2 361.2 471.4 354.8ZM510.3 350.4 520.5 347.1 523.3 357 513.8 360.5ZM477.5 384.7 483.6 379.9 485.1 381.9 509 356.1 515.7 364.7 489.3 386.6 490.9 388.5 486.1 393.3ZM515.7 364.7 524.3 359.9 540.5 377.1 532.9 383.8 527.1 374.2 525.6 369.5 521.4 366.6 519.5 368.9ZM524 381.4 530.8 383.9 528.3 390.7 521.5 388.2ZM506.5 387.6 512.2 382.8 517.6 388.5 515.7 391.4 517.6 394.3 514.7 395.6ZM515.7 397 522.3 391.5 527.8 398 521.3 403.6ZM493.7 399.4 500.4 393.3 505.2 399 503.3 401.9 507.1 404.8 510 402.5 516.1 408.6 510 414.7 504.2 408.6 501.4 409.5ZM559.6 374.2 568.7 364.7 575.2 370.8 579 368.1 580.2 370.4 577.7 372.3 583.4 378 574.5 388.5ZM387.8 405.7 395.8 397.5 403.1 405.1 397.4 411.4 393.5 411.4ZM408.7 402.2 416 396.1 421.5 402.7 414.2 408.8ZM420.3 408.6 424.1 405.7 429.8 411.4 428.3 414.3 430.8 418.1 427.5 420ZM400.8 416.2 407.9 408.6 414.9 416.2 408.8 423.5 404 422.9ZM436.5 407 443.5 399 441.3 396.2 447.9 391.4 456.1 398.6 449.8 404.8 452.3 407.6 444.7 416.6ZM452.4 405.6 458.3 400.7 462.5 405.8 456.7 410.7ZM413.6 424.8 420.3 418.1 427.5 425.4 424.1 428.6 426.4 431.5 422.2 434.9ZM453.7 421.9 460.7 415.8 468.9 423.8 461.9 431.1ZM469.5 417.2 474.1 412 482.9 421.9 477.5 427.7 473.7 422.9ZM421.8 436.2 426.4 431.5 430.8 435.3 434 431.9 437.4 435.3 428.8 442.9ZM439.7 431.5 445.5 425.4 452.3 431.9 446.6 438.7ZM452.3 442.9 455.6 433.4 465.1 441 460.3 447.7 456.1 443.9ZM470.3 437.2 479.4 427.7 484.2 431.5 483.2 434.3 490.9 442 484.2 448.6 477.5 445.8ZM491.4 440 497.6 437.7 499.9 444 493.6 446.2ZM432.7 446.4 440.3 438.7 447.4 445.2 439.7 452.8ZM487.1 454.4 494.3 447.7 500.8 454.4 493.7 461.1ZM470.3 457.2 476.6 452.1 486.1 461.1 481.3 466 475.6 466ZM443.2 455.3 448.9 450.6 453.1 455.3 457.5 457.2 459.4 466 450.8 466ZM388.8 450.6 392.6 447.7 395.5 449.6 400.8 442 407.9 448.6 397.7 458.2ZM384 433 392 438.7 384 446.7ZM751.9 345.6 759 338.9 768 347.5 768 355.1 762.8 359 758 355.1 760.9 351.3 757.1 348.5 755.2 349.8ZM733.2 358 740.5 350.4 748.9 358 738.6 370.4 734.2 366.6ZM738.6 374.2 746.6 363.7 750 366.2 742.4 376.5ZM744.3 374.2 754.2 364.3 760.9 370.8 755.2 383.8ZM693.5 384.7 704.2 371.4 715.7 379.9 704.6 395.2ZM685.1 397.1 693.2 389.5 700.4 396.2 692.8 404.8ZM708.8 400.9 715.7 394.3 717.6 396.2 722.7 388.5 729.8 395.2 718.4 407.6ZM720.3 412.8 729 404.4 734.8 409.5 726.6 418.1ZM698.5 420 708.4 421 709.4 424.8 715.1 425.7 713.8 434.3 706.5 434.3 706.5 429.6 698.5 427.7ZM716.5 419 722.3 421.1 720.2 426.8 714.4 424.7ZM736.1 430.5 740.9 424.8 746.6 428.6 742.8 431.5 740.9 430.5 738.6 433.4ZM730.6 438.6 737.2 433.1 742.7 439.6 736.1 445.2ZM725.2 445.8 728.5 445.2 729.8 448.3 737.4 449.6 736.7 454.4 731.3 455.3 730.4 459.7 726.6 459.1 725.6 454.4 723.7 453.4ZM747.5 450.2 755.2 440.1 758 442 762.8 436.8 766.6 440.1 763.8 444.8 760.9 444.5 753.3 452.5ZM753.3 421 757.1 414.3 768 421 768 435.3 758 429.6 754.2 423.8ZM736.7 463.9 748.1 453.4 754.6 460.1 748.5 466 738 466ZM732.9 468.9 737.1 466 750 466 740.9 476.5ZM752.3 485.1 763.8 468.9 768 469.8 768 483.2 760.9 490.4ZM762.8 500 768 494.6 768 504.2ZM744.7 579.5 750 573.8 754.2 577.6 758 575.2 760.9 578.6 759.6 582.4 760.3 584.7 755.2 589.1ZM703.7 629.2 710.7 619.6 718.4 626.3 711.3 635.5ZM639.3 639.3 643.2 637.8 648.3 631.6 656.9 638.1 650.8 646.3 647 644.4ZM543.9 642 551.6 643.1 552.3 639.7 601.6 646.3 600 660.3 581.5 657.8 580.6 662.6 610.7 667.9 611.5 660.7 618.4 661.6 617.8 668.3 623.5 669.2 621.6 679.7 579 673.1 577.7 683.2 610.1 688.3 609.2 695.4 598.7 694.1 597.7 697.3 572.9 693.1 574.5 683.2 519.9 675.5 521 666 574.8 673.6 575.2 666.4 573.9 664.5 574.8 657.2 551 654 551.9 647.3 543.4 646.3ZM458.8 472.7 466.1 466 472.7 471.7 465.1 479ZM482.8 473.1 490 470.4 492.5 477.3 485.3 479.9ZM419.3 476.5 425 471.7 441.3 489.9 432.1 498.4 425.6 491.8 429.8 487.9ZM434 508.4 441.3 502.6 449.8 513.7 454.2 513.3 458.8 517.9 451.2 524.8 444.7 519.4 442.2 515.6ZM433.3 516.3 439.7 522.1 435.8 526.3 429.5 520.6ZM474.1 533.7 489.3 531.3 490.5 537.6 475.2 540.4ZM461.9 544.6 466.1 541.4 470.3 547.1 474.6 548.1 479.4 552.8 472.7 557.6 468 552.8 465.1 554.2 463.8 550ZM458.3 561.8 465.5 556.2 470.8 562.9 463.6 568.6ZM439.3 570 445.5 565.6 458 580.9 451.7 585.8ZM408.4 541.4 413.6 536.2 422.2 546.2 426.4 543.3 430.8 548.1 419.9 557.6 413.6 551.5 414.9 548.4ZM386.9 555.3 393.2 550.4 402.7 558.6 407.9 555.3 413.6 559.5 404.6 570ZM384 569.1 388.2 566.2 392.6 570 388.8 573.3 393.2 578.6 389.7 582.4 384 576.7ZM408.8 598.1 414.2 592.9 424.5 604.4 420.3 608.7 416.4 606.3 414.5 608.2 416.8 610.7 413 614.9 405.9 608.2 408.8 605.3 411.7 607.6 413.6 606.3ZM388.8 616.8 397.7 607.6 402.1 612 400.2 613.9 407.3 618.7 397.7 627.3 392.6 622.5 390.7 624ZM384 621.5 391.6 629.2 384 635.8ZM475.6 778.8 485.5 770.6 513.8 804.3 503.3 813.1ZM807.8 2.2 813.7 -2.8 816.7 0.9 810.9 5.8ZM777.5 30.2 786.1 21.9 788 18.1 791.9 18.1 793.8 21.9 792.4 24.8 796.2 29.6 788 37.2ZM768.5 36 776.6 29.2 782.7 36.5 774.7 43.3ZM774.9 45.2 783 37.1 787.8 41.8 779.7 49.9ZM787.1 46.8 790.9 44.3 803.3 54.4 799.5 58.8 794.7 57.3 790.9 53.4ZM763.2 61.4 770.5 55.3 776.6 62.6 769.3 68.7ZM769.7 73.6 779.2 65.7 786.5 74.4 777 82.4ZM805.2 72.1 820.5 55.3 840.1 72.5 835.7 77.3 827.2 73.5 818 83.4ZM819.5 85.9 828.7 78.2 837.7 88.2 829.1 96.4ZM836.7 81.1 844.3 75.4 847.8 78.2 845.3 80.2 847.2 84 842.4 86.8ZM837.7 90.6 840.5 87.4 851.6 96.4 845.3 104.6 841.5 101.1 845.3 96.4ZM780.4 92.6 789 82.1 793.8 84 796.6 82.1 800.4 88.2 789 100.2ZM768 88.2 775.6 95.4 768 104.6ZM795.3 99.2 802.4 93.5 807.1 99.2 811.5 96.4 814.8 101.1 806.2 109.2ZM808.6 112.6 814.8 105.9 819.5 110.7 823.3 108.8 826.8 113.5 818 121.8ZM804.6 120.4 811.2 114.9 816.1 120.8 809.5 126.3ZM830.3 131.1 837.6 124.9 843.1 131.5 835.8 137.7ZM884.8 70.2 889.2 66.8 895.9 73.5 900.6 69.1 896.8 64.9 899.7 62.6 909.2 72.5 899.7 83.4ZM903.8 58.5 915.9 49.1 920.3 54.8 908.3 64.2ZM919.7 44.3 924.9 39.1 923.5 37.2 931.2 26.7 933.6 24.8 940.7 31.5 935.9 38.2 937.8 40.1 932.1 45.8 933.1 50 926.8 53.4 923 48.7ZM939.4 20.5 947.2 27.5 944.7 30.3 936.9 23.3ZM939.4 18.1 943.6 13 942 10.5 946.4 6.1 954.1 13.7 951.6 17.2 953.5 19.1 948.3 24.8ZM949.3 5.7 956 0 967.4 0 958.8 13ZM943 64.8 957.8 47.2 964.3 52.8 949.6 70.3ZM956 40.5 964.6 34 966.9 36.3 966.5 31.5 972.2 26.7 977 31.5 975.1 35.3 977.9 38.2 977.9 44.3 973.2 48.7 967.4 50 962.7 44.8ZM975.6 19.1 978.9 16.2 981.4 18.1 990.3 8.6 995.1 13.7 983.6 28.6 976 22.5ZM990.3 1 1012.3 0 1011.3 7.6 991.3 4.8ZM1032.8 7.5 1037.8 4.7 1040.6 9.6 1035.7 12.5ZM1040.9 14.3 1051.4 3.8 1055.2 8 1050.4 12.4 1053.3 14.3 1062.8 2.9 1067.6 7.6 1059 16.2 1054.3 11.8 1045.7 19.1ZM1022.1 15 1035.6 25.6 1029.2 33.9 1015.6 23.3ZM1038.5 35 1047.7 43.3 1042.6 49 1033.4 40.7ZM996.1 37.2 999.3 34.4 1008.1 42 1003.7 50.6 998 46.8 1001.2 42.9ZM1000.5 55.7 1005.6 51.4 1009.5 56.1 1004.4 60.4ZM1020.3 43 1032 52.8 1023.4 63.1 1011.7 53.3ZM1059.6 45.8 1068.6 35.3 1073.3 40.1 1070.5 42.9 1078.7 50.6 1074.3 54.8 1067.6 47.7 1063.4 51.1ZM1061.2 61.6 1068.3 68 1066.4 70.1 1059.3 63.7ZM999.9 73.5 1006.5 65.8 1010.7 69.1 1016.1 63.4 1020.3 68.7 1010 80.5ZM1070 76.2 1081.2 85 1076 91.8 1064.7 82.9ZM995 80 1001.5 81.2 1000.2 88.7 993.6 87.5ZM987.6 97.7 995.4 92.2 1001.4 100.8 993.6 106.3ZM967.3 95.1 973.5 90.7 977.9 96.9 971.6 101.3ZM937.5 70.1 952.5 81.9 946.6 89.4 931.6 77.7ZM955.6 82.9 966.8 91.7 961 99.2 949.7 90.4ZM916.9 100.2 923 92.6 934.4 103.1 930.2 111.6ZM941.3 107.8 954.6 117.1 948.5 125.7 935.3 116.4ZM956.3 123.3 960.7 119.6 964.4 124 960 127.7ZM900.6 127.9 914.9 118.7 914 116.4 916.5 114.5 918.8 116.4 924.5 113.5 927.9 120.2 914.9 131.7 913 129.8 903.9 134.2ZM889 140.3 897 133.6 902 139.4 893.9 146.2ZM952.5 135.9 956 131.7 960.7 136.5 963.6 141.2 960.7 143.1ZM967.4 134.5 970.7 130.7 973.2 132.6 977.9 125.4 984.6 131.7 975.1 142.2ZM922.1 160.4 935.4 146.7 939.5 150.7 926.2 164.4ZM910.3 164.4 919.5 156.1 926.5 163.9 917.3 172.2ZM948.3 157.4 956 148.9 963 155 956 164.1ZM943.9 156.6 951.7 162 949 166 941.2 160.5ZM924.5 180.3 929.8 175.2 932.1 178.4 929.8 180.9 931.7 183.6 936.9 179.4 943.6 185.5 937.5 192.4 931.2 186.1 929.8 184.7ZM966.5 175.6 972.2 168.3 977.9 172.7 977.5 178.4 973.2 181.3ZM969.5 177.3 979.6 184.4 974.2 192.2 964 185.1ZM953.5 192.7 959.8 186.1 966.5 190.8 960.7 198.5ZM949.7 202.7 956 196.6 963.6 202.3 957.3 209ZM967.4 207.1 972.2 198.5 977.9 201.3 973.2 209.9ZM968.4 221.4 974.1 214.7 979.8 215.6 982.7 219.5 974.5 227.5ZM982.7 217.8 986.8 214.4 990.3 218.5 986.2 221.9ZM991.5 231.3 999.3 225.8 1002.6 230.5 994.7 236ZM1017 218.7 1027.3 216.9 1028.6 224 1018.2 225.9ZM1026.6 102.1 1035.2 93.5 1039 97.3 1040.9 95.4 1038 91.6 1040.5 89.7 1038 86.8 1042.8 77.3 1053.9 85.5 1048.5 93.5 1055.8 102.1 1053.3 105.5 1044.7 98.3 1043.8 104 1050.4 120.2 1048.5 121.2 1039 110.7 1035.2 109.7ZM1013.8 118.3 1021.8 109.2 1031 116.4 1027.9 120.2 1041.9 131.7 1035.2 140.3 1024.7 131.7 1019.9 124ZM992.8 133.6 1005.6 122.1 1009.4 125 1011.3 122.1 1016.1 126 1014.2 128.8 1005.6 141.2 1001.8 139.3ZM1008.8 140.3 1014.2 134.5 1019 137.4 1024.7 134.5 1027.2 138.4 1018 149.2ZM1026.7 141.9 1030.3 138.8 1033.4 142.5 1029.7 145.5ZM980.4 151.7 988.4 142.2 997.6 149.8 989.8 159.4ZM1019.5 156.5 1026.6 148.5 1034.2 152.7 1031.4 158.4 1027.9 163.2ZM1038.7 149.7 1043.6 146.8 1047 152.6 1042 155.5ZM980.8 164.2 986.6 159.3 991.5 165.2 985.7 170.1ZM992.2 167 999.9 157.4 1003.7 160.3 1006.2 167.9 1001.8 172.7ZM1030.4 168.9 1038 159.4 1044.3 164.1 1037.1 174.6ZM1044.9 166.3 1049.3 162.6 1052.9 167 1048.6 170.6ZM1003.7 183.2 1011.3 176.5 1006.9 172.7 1011.3 169.5 1018 173.7 1024.7 179.4 1022.8 184.2 1025.6 186.1 1021.8 188.9 1018 186.1 1012.3 190.8ZM1040.9 177.1 1046.6 171.4 1055.8 178.4 1050.1 184.7ZM1052.7 184.2 1060.9 176 1069.5 183.2 1065.7 188 1061.9 186.6 1057.1 188ZM1025.3 192.7 1032.3 186.1 1040.5 193.7 1033.3 200.8ZM1060.9 195.6 1069.5 186.6 1081 194.7 1073.3 203.2ZM1077.2 203.2 1085.7 188.5 1094.3 194.7 1090.5 200.4 1093.4 203.2 1083.8 209.9ZM1087.7 210.9 1096.2 204.2 1104.8 208 1098.2 217.6 1092.4 217.6ZM1035.2 209 1039.9 203.2 1043.8 207.1 1040.9 209.9 1045.7 212.8 1049.5 209 1045.7 206.1 1048.2 203.2 1056.2 209.5 1048.5 221.4ZM1061.5 221.4 1069.5 213.4 1081.4 222.3 1073.3 231.3ZM1115.3 224.2 1124.9 215.3 1133.5 222.3 1124.9 231.9ZM1077.2 228.1 1082.9 222.3 1093.4 229 1090.5 233 1081 233ZM1054.3 229 1060 224.2 1068.6 230.9 1066.7 233 1056.2 233ZM1106.7 230.8 1113 226.4 1116.3 231.1 1110 235.5ZM1092.4 50 1099.1 42.4 1102 44.8 1107.7 42 1116.9 51.1 1109.6 61.1ZM1106.4 65.8 1111.5 60.1 1117.2 64.9 1123.3 55.3 1127.7 52.5 1130.6 56.3 1129.6 63 1121.1 74.4 1113.4 69.7 1111.5 70.6ZM1129.3 76.7 1137.3 68.7 1142.4 67.7 1143.6 72.5 1137.3 83.4ZM1120 83.6 1124.2 81.3 1127 86.2 1122.9 88.6ZM1141.1 84 1152 78.2 1152 89.7 1146.8 91.2ZM1122.6 109.7 1129.6 101.1 1154.5 120.2 1144.9 127.5ZM1135.4 145 1143 140.3 1144.9 142.2 1152 139.3 1152 147.9 1141.1 151.1ZM1105.4 155.5 1113.4 146.9 1123 155 1114.9 163.7ZM1094.7 171.8 1112.5 171.2 1113 180.3 1109.6 180.3 1108.6 189.9 1097.2 189.3 1097.8 180.3 1094.7 179.4ZM988.4 234.9 992.2 233 999.9 233 1001.8 236.8 1009.4 236.8 1012.7 241 1007.5 246 1002.7 243.5 999.9 245.4ZM1037.5 241.6 1053.9 239.7 1054.6 249.8 1039 251.1ZM1056.2 233 1069.5 233 1062.8 239.1ZM1072.4 239.7 1078.1 233 1090.5 233 1092.4 234.9 1084.8 240.6 1081 243.5ZM1096.6 241.6 1102 234.9 1101 233 1116.3 233 1117.2 235.9 1111.5 246.4 1105.8 244.5 1101 247.9ZM1101.4 249.9 1107.7 254.3 1106.3 256.2 1100.1 251.8ZM1010.5 255 1019 262.7 1016.7 265.2 1008.2 257.5ZM1020.5 261.2 1025.4 255.3 1028.1 257.5 1023.2 263.4ZM1030.4 271.2 1039 268.9 1039.9 265.4 1043.8 263.9 1052.4 268.3 1048.9 281.7 1041.3 279.8 1039.9 275.9 1038 277.8 1031.4 275.9ZM1073.3 273.5 1082.9 261.6 1087.7 265.4 1085.2 270.2 1091.5 275.9 1086.7 280.7 1083.8 278.8 1081 281.7ZM1080.3 285.9 1084.4 282.5 1087.4 286.2 1083.3 289.6ZM1105.2 294 1117 290.2 1118.9 296 1107.1 299.8ZM1054.3 300.2 1063.8 292.2 1070.5 296.9 1067.6 300.2 1074.9 307.4 1071.1 312.8ZM1121.9 305.2 1127.8 300.3 1132.4 305.8 1126.6 310.8ZM1115.9 310.5 1123.3 317.9 1118.6 322.7 1111.2 315.2ZM1102.4 326.3 1107.9 321.6 1112.2 326.7 1106.7 331.4ZM1091.9 337.7 1098.5 332.1 1103.6 338.3 1097.1 343.8ZM1079.5 321.2 1084.8 317 1090.5 314.7 1095.3 317 1087.1 325 1081 323.6ZM1126.4 327.5 1140.1 318.9 1143.6 324.6 1138.2 332.2 1131.5 339.5 1125.3 335.1 1128.7 331.3ZM1107.3 349 1119.1 338 1123 340.8 1126.8 338.9 1130.6 345.6 1118.2 356.7ZM1143 313.2 1147.8 305.9 1152 305.5 1152 317.9 1146.8 318.9ZM1131.5 366.6 1138.2 361.2 1143 362.8 1152 359 1152 370.4 1142 376.1ZM955 289.3 962.7 280.7 969.3 286.8 961.7 295.6ZM943.6 318.9 948.9 315.4 951.6 317.9 960.7 302.1 967.4 306.5 954.1 326.5ZM958.5 329.4 964.6 324.2 967.4 326.5 973.7 314.1 980.2 318.9 966.5 336.4ZM966.5 345.6 985.6 321.7 990.3 325.6 971.2 349.4ZM978.5 355.1 997 330.3 1002.7 334.1 984.6 359.9ZM1000.8 318.9 1010 308.4 1018 313.2 1008.1 325.6ZM929.8 339.5 937.5 331.3 955.4 347.5 951.2 352.3 945.1 347.5 938.8 349ZM915.9 349.4 920.7 343.7 923.5 345.6 927.9 343.7 933.1 350.4 930.2 353.6 934.4 358 929.8 361.2ZM905.8 358 911.5 352.3 916.5 356.7 910.7 363.2ZM909.6 372.3 917.2 364.3 919.7 355.1 922.2 357 919.7 362.8 924.5 360.9 928.7 364.7 923.5 369.5 921.6 367.5 919.7 370 926 376.5 917.8 382.8 914.6 380.3 915.9 377.1ZM892.4 373.8 899.7 369.5 903.5 366.6 906.4 369.5 899.7 379ZM949.3 359.9 956.9 354.2 961.7 359.3 954.1 366.2ZM956.5 375.2 970.7 367.5 973.7 373.8 959.8 381.9ZM854.8 366.6 858.1 363.7 866.3 370.4 868.8 364.7 872.6 366.6 875.3 358 878.7 359 881 352.8 882.5 347.1 889.2 352.3 886.3 357 882.5 355.1 881.5 359.9 877.7 366.6 876.8 370.4 872 369.5 867.2 377.1ZM820.5 322.7 824.9 315.4 833.8 321.2 831.9 324.6 837.1 322.7 850.1 332.2 842.8 341.4 830.6 331.3 829.1 326.1 825.3 323.6 822.4 325ZM782.3 319.8 791.3 311.6 800.4 309.3 802 317 795.7 318.9 789.4 325.6ZM807.1 295 813.8 291.2 821.8 298.8 817.2 304.6ZM794.5 299.7 799.6 295.5 803.3 299.8 798.2 304.1ZM768 337.6 772.8 339.9 775.6 336.1 781.4 332.2 782.9 329.4 788 332.2 785.6 337.6 787.5 343.3 781.7 346 776.6 341.8 773.7 344.6 768 342.7ZM768 347.5 772.8 349.8 768 357ZM768 389.5 773.7 384.7 779.8 390.4 770.9 398.6 768 397.1ZM782.9 407.6 791.3 391.4 793.8 390.4 800.1 396.2 788 411.4ZM809.6 400.9 824.9 385.3 831.9 389.5 819.5 407.6ZM821.8 408.6 827.2 404.4 830 406.7 835.7 401.3 843.4 407.6 840.1 411.4 842.8 414.3 833.8 418.1ZM817.2 419.1 823.3 416.2 832.9 424.8 828.7 430.5ZM842.4 391 851 381.5 861.1 388.5 854.8 396.7 850.1 392.9 846.2 394.3ZM881.5 393.3 887.3 386.6 893.6 391.4 887.8 398.6ZM888.6 400.9 892 396.7 901.2 403.8 898.2 407.6ZM868.8 407.6 873.9 404.4 876.4 405.7 879.6 403.8 883.5 407 877.2 415.3ZM780.4 445.8 789.9 433.8 797.6 440.1 788.6 451.5ZM768 421 770.9 421 776 428.6 768 435.3ZM859.6 431.5 864.4 426.1 869.1 429.6 872.6 427.7 875.8 430.5 868.8 439.1ZM853.7 428.2 857.4 426.1 859.8 430.2 856.1 432.3ZM921.7 434.4 927.7 430.2 931.8 436.2 925.9 440.3ZM902.5 454.4 907.7 450.6 910.2 452.5 914 444.8 920.3 449.6 912.1 460.5ZM785.2 466 789.9 461.1 793.8 463 796.6 459.1 801.4 462 799.5 466ZM778.5 474.6 785.2 466 799.5 466 792.8 468.3 787.1 473.3 789.9 479.4 786.7 482.8ZM768 469.8 771.8 473.6 768 477.5ZM768 494.6 771.8 497.5 773.3 501.3 768 504.2ZM1143 543.3 1145.5 537.6 1152 538.5 1152 547.7ZM1152 78.2 1154.9 76.3 1159.3 81.1 1153.9 88.7 1152 87.8ZM1153 94.5 1158.7 90.1 1168.2 95.4 1164.4 103.4ZM1170.5 143.5 1178.7 131.7 1183.5 126 1189.8 131.7 1186 135.9 1194.9 143.5 1199.3 139.3 1208.3 146.6 1194.9 161.3 1191.1 157.4 1189.2 158.4ZM1234.4 142.7 1244.6 131.7 1249.7 136.5 1239.4 147.3ZM1224.1 155 1234.1 145.4 1238.3 149.8 1229.3 159.9ZM1152.5 173.6 1160.4 169.1 1163.7 174.8 1155.8 179.4ZM1152 140.3 1155.8 145 1153.9 148.9 1152 147.9ZM1278 265.4 1280.2 258.8 1291.3 259.7 1292.8 256.9 1298 258.2 1294.7 270.2ZM1275.6 273.5 1280.5 267.7 1284.1 270.7 1279.2 276.6ZM1322.8 264.5 1328 258.8 1327.2 256.9 1332.9 252.1 1336.7 256.3 1334.8 258.8 1340.9 265.4 1336.7 272.1 1331.8 271.2 1327.6 268.3ZM1316.1 283.6 1333.7 283.6 1333.7 292.2 1316.1 292.2ZM1277 295 1283.7 290.3 1286.5 291.2 1292.3 289.9 1294.2 294.1 1288.5 298.8 1283.7 301.3ZM1287.2 298.4 1292.3 300.3 1290.8 304.2 1285.8 302.4ZM1265.5 312.2 1268.8 309 1274.5 311.2 1278 305.5 1286.5 309 1279.5 318.5ZM1314.6 311.6 1321.8 305.9 1325.7 309.7 1318.4 316.6ZM1306.2 326.9 1315.2 318.5 1320.9 324.2 1312.3 332.6ZM1316.1 331 1322.1 330.5 1322.7 336.5 1316.6 337.1ZM1322.8 339.9 1327.2 331.3 1332.3 331.3 1338.1 326.5 1342.5 328.4 1340 336.1 1336.2 342.7 1331 350.4 1325.3 345.6ZM1362.3 328.8 1367.6 328.4 1367.6 334.1 1378.1 335.7 1377.6 340.3 1361.9 338.9ZM1358.1 346.5 1367.6 347.5 1367.3 351.3 1374.3 352.3 1373.4 357 1367.6 357.4 1366.7 361.8 1355.8 360.5ZM1358.1 366.2 1368.6 365.6 1369.2 373.3 1366.1 373.8 1365.7 379 1357.2 379.6 1357.7 375.2 1359.6 374.2ZM1265 337.6 1271.8 336.4 1272.6 341.8 1275.7 342.7 1275.7 347.1 1266.1 348.1ZM1304.3 359 1317.6 361.8 1316.5 366.6 1308.9 365.1 1306.2 370.8 1302.8 369.5ZM1324.7 358 1331.4 358 1332.3 363.7 1338.6 364.7 1338.1 370.4 1329.9 369.5 1329.1 364.7 1324.7 364.3ZM1314.2 368.9 1320.9 368.9 1320.9 384.7 1314.2 384.7ZM1330.4 375.7 1340 379.9 1333.3 392.9 1325.3 389.5ZM1266.1 375.2 1271.3 373.8 1271.3 368.5 1281.8 367 1282.7 374.2 1280.8 380.9 1273.2 381.5 1272.2 379.6 1266.1 380.3ZM1261.2 395.2 1267.5 393.7 1268 390.4 1278.3 389.1 1279.5 399 1262.7 401.9ZM1301.8 400.6 1320.9 402.5 1320.3 409 1316.5 411.4 1304.7 409.5ZM1328.5 405.7 1336.2 404.8 1336.7 402.8 1344.7 403.8 1343.8 412.4 1329.1 410.9ZM1358.5 395.2 1361.5 392.4 1364.8 393.3 1370.5 391.4 1371.8 396.2 1360 400.9ZM1363.8 407.6 1368.6 404.4 1371.1 407.6 1378.7 401.9 1382 406.3 1367.6 414.3ZM1368.9 415.9 1375.9 411 1379.8 416.5 1372.7 421.4ZM1390.5 420 1394.4 414.3 1396.3 409.5 1396.7 405.7 1400.1 404.4 1402.4 407.6 1400.5 410.9 1402.4 412.4 1394.4 421.9ZM1184.1 404.8 1201.2 405.7 1200.7 414.3 1183.5 413.3ZM1251.2 423.8 1266.5 420.4 1268 428 1252.8 431.5ZM1282.7 423.8 1299.3 427.3 1298 431.9 1288.5 430.5 1287.5 433.8 1281.4 432.4ZM1211.2 434.3 1217.8 433 1221.1 431.5 1230.2 434.3 1226.8 444.5 1215.9 440.1 1216.5 438.2ZM1390.5 443.9 1398.2 445.8 1397.2 450.6 1404.9 452.5 1406.8 447.7 1410 448.6 1407.3 456.7 1388.6 452.1ZM1281.8 461.1 1299.9 457.2 1301.8 466 1282.7 466ZM1152 305.5 1155.4 305.1 1159.6 307.4 1165 310.3 1155.8 321.2 1152 318.9ZM1164.4 326.1 1170.7 320.8 1173.4 322.7 1175.9 320.8 1179.1 322.3 1181.6 320.8 1184.8 325 1172.6 340.8 1168.2 336.1 1169.6 331.3ZM1152 346.5 1156.8 342.7 1160 339.9 1165 338.9 1169.2 344.6 1157.7 359.9 1152 357ZM1245.1 468.3 1253.1 467.9 1251.2 484.1 1248.4 486 1243.2 485.1 1241.7 482.2ZM1238.3 493.7 1244 487 1252.8 491.8 1246.5 502.3 1241.7 500.4ZM1229.9 516 1233.1 513.7 1232.2 509.5 1240.2 506.5 1241.7 508.4 1250.9 505.1 1253.5 512.8 1231.8 520.4ZM1153.5 501.3 1156.8 496.5 1161.9 498.8 1160 506.1 1166.3 508.4 1170.1 508.4 1177.8 510.8 1176.4 516.6 1172 515.2 1170.7 513.3 1158.7 511.4 1157.3 507ZM1152 540.8 1155.8 538.5 1159.3 531.8 1166.9 533.2 1162.5 550.9 1152 548.4ZM1175.3 541.4 1177.8 535.7 1189.2 538.9 1186.7 545.8 1187.3 556.6 1181.6 557.6 1182.2 546.2 1179.7 543.9ZM1264.2 537 1271.3 535.1 1272.6 538.5 1275.7 538.1 1274.1 529.9 1277.6 528.6 1280.8 540 1266.5 544.6ZM1282.7 466 1301.8 466 1300.9 467.9 1283.7 471.3ZM134.5 224.8 154 208 177.6 234 158.5 246 162.5 251 147.2 261.4 141.3 254.5 152.8 243.5ZM740.9 107.8 789.9 153.6 772.8 171.4 723.7 125ZM176.6 464.4 195.5 448.5 207.3 461.1 219.6 451.9 229 461 220.8 467.5 224.5 473.2 218.4 478.6 213.1 471.6 209 474.5 216.2 483.5 198.3 498.6 183.7 481.4 202.4 466.3 195.9 457.7 181.1 469.6ZM276.5 455.6 282.7 449.9 294.5 462.6 288.4 468.3ZM263.8 470 273.7 461 280.2 468.3 278.6 470.8 287.6 480.6 279.8 488.4ZM169.7 454.4 181.9 443.8 185.6 446.9 192.2 442.1 195.5 445 177 461.4ZM364.9 384.2 381.7 367.4 400.5 388.3 383.7 403.5ZM1141.3 194.1 1144.6 189.5 1145.9 190.5 1147.8 187.2 1147.2 185.9 1149.5 181.7 1160.3 188.9 1162.9 192.8 1168.8 194.4 1182.2 204.6 1173.4 215.4 1166.2 210.8 1165.5 211.1ZM1131.5 211.5 1140.3 200.6 1154.4 211.1 1152.4 214.1 1153.7 215.7 1153.4 217.3 1155.4 219.6 1158 217.3 1164.5 221.9 1157.7 231.4Z" fill="#d5b43c" stroke="none" fill-rule="nonzero"/>
<path d="M1.5 358 14.9 357 15.3 362.8 12.4 362.8 12.4 365.6 14.9 366.2 14.9 369.5 7.3 369.5 6.7 366.6 1.5 366.6ZM146 225.2 152.7 219.5 163 228 156.3 233.7Z" fill="#729b6f" stroke="#232323" stroke-width="0.7"/>
</svg></div></div>
<div id="status"><div class="box" style="left:4px;top:3px;width:248px;height:23px;border-radius:3px"><svg width="14" height="14" viewBox="0 0 14 14" style="left:6px;top:4px"><circle cx="5.500" cy="5.500" r="3.800" fill="none" stroke="#999" stroke-width="1.300"/><path d="M8.500 8.500l4 4" stroke="#999" stroke-width="1.600"/></svg><span style="left:28px;top:3px;font-size:12px;line-height:16px;color:#9a9a9a">Type to locate (Ctrl+K)</span></div><div class="lb" style="left:260px">1 legend entries removed.</div><div class="lb" style="left:1089px">Coordinate</div><div class="box" style="left:1142px;top:3px;width:112px;height:22px"><span style="left:12px">2276033,-4031515</span></div><svg width="16" height="18" viewBox="0 0 16 18" style="left:1258px;top:5px"><path d="M3 3q3-3 6 0l3 6q1 4-3 5t-5-2z" fill="#f2f2f2" stroke="#444" stroke-width="1"/><path d="M4 2.500l3 6M6.500 1.500l2.500 6" stroke="#444" stroke-width="1.200"/><circle cx="10" cy="11.500" r="2.200" fill="#fff" stroke="#555"/><circle cx="10" cy="11.500" r=".8" fill="#333"/><path d="M12 3l2.500-2" stroke="#a55" stroke-width=".8"/></svg><div class="lb" style="left:1288px">Scale</div><div class="box" style="left:1316px;top:4px;width:95px;height:22px"><span style="left:4px">1:5712</span><div class="abs" style="left:74px;top:0;width:1px;height:20px;background:#c4c4c4"></div><svg width="10" height="6" viewBox="0 0 10 6" style="left:79px;top:8px"><path d="M0 0h9l-4.500 5z" fill="#555"/></svg></div><svg width="14" height="16" viewBox="0 0 14 16" style="left:1422px;top:7px"><path d="M3.500 7v-2.500a3.500 3.500 0 0 1 7 0V7" fill="none" stroke="#6a6a6a" stroke-width="1.800"/><rect x="1" y="7" width="12" height="8" rx="1.500" fill="#6a6a6a"/></svg><div class="lb" style="left:1445px">Magnifier</div><div class="box" style="left:1491px;top:4px;width:95px;height:22px"><span style="left:4px">100%</span><div class="abs" style="left:78px;top:0;width:1px;height:20px;background:#c4c4c4"></div><svg width="8" height="16" viewBox="0 0 8 16" style="left:82px;top:2px"><path d="M0 6.500h7l-3.500-4.500zM0 9.500h7l-3.500 4.500z" fill="#555"/></svg></div><div class="lb" style="left:1595px">Rotation</div><div class="box" style="left:1642px;top:4px;width:91px;height:22px"><span style="left:4px">0.0 °</span><div class="abs" style="left:74px;top:0;width:1px;height:20px;background:#c4c4c4"></div><svg width="8" height="16" viewBox="0 0 8 16" style="left:78px;top:2px"><path d="M0 6.500h7l-3.500-4.500zM0 9.500h7l-3.500 4.500z" fill="#555"/></svg></div><div class="cb on" style="left:1739px;top:7px;width:12px;height:12px"><svg width="12" height="12" viewBox="0 0 12 12" style="left:0;top:0"><path d="M2.500 6l2.500 3.500 4.500-7.500" fill="none" stroke="#111" stroke-width="1.700"/></svg></div><div class="lb" style="left:1758px">Render</div><svg width="16" height="16" viewBox="0 0 16 16" style="left:1808px;top:6px"><circle cx="8" cy="8" r="6.500" fill="none" stroke="#666" stroke-width=".9"/><ellipse cx="8" cy="8" rx="3" ry="6.500" fill="none" stroke="#666" stroke-width=".8"/><path d="M1.500 8h13M2.500 4.500h11M2.500 11.500h11M8 1.500v13" stroke="#666" stroke-width=".8"/><path d="M0 6h16" stroke="#666" stroke-width=".5"/></svg><div class="lb" style="left:1828px">EPSG:3857</div><svg width="18" height="16" viewBox="0 0 18 16" style="left:1896px;top:6px"><path d="M9 1q8 0 8 5.500t-6 5.500l1.500 3.500-4.500-3.500q-7 0-7-5.500t8-5.500z" fill="#6a6a6a"/><circle cx="5.500" cy="6.500" r="1.100" fill="#fff"/><circle cx="9" cy="6.500" r="1.100" fill="#fff"/><circle cx="12.500" cy="6.500" r="1.100" fill="#fff"/></svg></div>
<svg id="icons" width="1920" height="1078" viewBox="0 0 1920 1078" style="left:0;top:0;pointer-events:none"><rect x="204" y="57.5" width="24" height="22" rx="2.500" fill="#dcdcdc" stroke="#b2b2b2" stroke-width="1"/><g transform="translate(-2.5 60.0)"><rect x="5" y="0.5" width="1" height="1" fill="#a8a8a8"/><rect x="8" y="0.5" width="1" height="1" fill="#a8a8a8"/><rect x="6" y="1.5" width="1" height="1" fill="#fff"/><rect x="9" y="1.5" width="1" height="1" fill="#fff"/><rect x="5" y="3.5" width="1" height="1" fill="#a8a8a8"/><rect x="8" y="3.5" width="1" height="1" fill="#a8a8a8"/><rect x="6" y="4.5" width="1" height="1" fill="#fff"/><rect x="9" y="4.5" width="1" height="1" fill="#fff"/><rect x="5" y="6.5" width="1" height="1" fill="#a8a8a8"/><rect x="8" y="6.5" width="1" height="1" fill="#a8a8a8"/><rect x="6" y="7.5" width="1" height="1" fill="#fff"/><rect x="9" y="7.5" width="1" height="1" fill="#fff"/><rect x="5" y="9.5" width="1" height="1" fill="#a8a8a8"/><rect x="8" y="9.5" width="1" height="1" fill="#a8a8a8"/><rect x="6" y="10.5" width="1" height="1" fill="#fff"/><rect x="9" y="10.5" width="1" height="1" fill="#fff"/><rect x="5" y="12.5" width="1" height="1" fill="#a8a8a8"/><rect x="8" y="12.5" width="1" height="1" fill="#a8a8a8"/><rect x="6" y="13.5" width="1" height="1" fill="#fff"/><rect x="9" y="13.5" width="1" height="1" fill="#fff"/><rect x="5" y="15.5" width="1" height="1" fill="#a8a8a8"/><rect x="8" y="15.5" width="1" height="1" fill="#a8a8a8"/><rect x="6" y="16.5" width="1" height="1" fill="#fff"/><rect x="9" y="16.5" width="1" height="1" fill="#fff"/></g><g transform="translate(17.0 60.0)"><path d="M2.5 .5h7l4 4v11h-11z" fill="#fff" stroke="#a8a8a8"/><path d="M9.5 .5v4h4" fill="#eee" stroke="#a8a8a8"/></g><g transform="translate(41.7 60.0)"><path d="M1 3h5l1 1.5h6.5v2H3.5L1 14z" fill="#d9b019"/><path d="M1 14.5L3.2 6h12.3l-2.3 8.5z" fill="#f6d63c" stroke="#d9b019" stroke-width=".6"/></g><g transform="translate(67.0 60.0)"><rect x="1" y="1" width="14" height="14" rx="2" fill="#6b96c6" stroke="#3f6fa8" stroke-width=".6"/><rect x="3.5" y="2" width="9" height="5" fill="#cfd5dc"/><rect x="3.5" y="3.3" width="9" height="1.2" fill="#a9b0b8"/><rect x="4" y="10" width="8.5" height="5" fill="#f2f2f2"/><rect x="5" y="11" width="2" height="2.5" fill="#223c66"/></g><g transform="translate(92.3 60.0)"><rect x="1" y="1" width="14" height="14" rx="2" fill="#6b96c6" stroke="#3f6fa8" stroke-width=".6"/><rect x="3.5" y="2" width="9" height="5" fill="#cfd5dc"/><rect x="3.5" y="3.3" width="9" height="1.2" fill="#a9b0b8"/><rect x="4" y="10" width="8.5" height="5" fill="#f2f2f2"/><rect x="5" y="11" width="2" height="2.5" fill="#223c66"/><rect x="9" y="9" width="7" height="7" rx="1.5" fill="#4f9a4f"/><path d="M10.5 14.5l3.8-3.8" stroke="#fff" stroke-width="1.6"/></g><g transform="translate(117.0 60.0)"><path d="M1.5 1.5h9l3.5 3.5v9.5h-12.5z" fill="#fff" stroke="#a8a8a8"/><path d="M1.5 1.5h3v13h-3z M1.5 1.5h8v3h-8z" fill="#f6d63c" stroke="#d9b019" stroke-width=".5"/><rect x="9" y="9" width="7" height="7" rx="1" fill="#c9a30f"/><path d="M12.5 10v5M10 12.5h5M10.7 10.7l3.6 3.6M14.3 10.7l-3.6 3.6" stroke="#fff" stroke-width="1"/></g><g transform="translate(142.0 60.0)"><path d="M1.5 2.5h10l3 3v9h-13z" fill="#e8eefc" stroke="#a8a8a8"/><rect x="3" y="4" width="8" height="8" fill="#fff"/><path d="M6 5.5a2.3 2.3 0 1 0 3 3l5.5 5.5-1.5 1.5-5.500-5.500" fill="#f6d63c" stroke="#8a7a3a" stroke-width=".7"/></g><g transform="translate(166.5 60.0)"><circle cx="5" cy="4" r="3" fill="#d4582a"/><rect x="2" y="9" width="6" height="6" rx="1" fill="#7fae7f"/><path d="M10.500 6.500l4.500-4.500" stroke="#2f5f9f" stroke-width="1.800"/><text x="10" y="14.500" font-size="8" font-family="DejaVu Sans" fill="#222">a</text></g><g transform="translate(190.0 60.0)"><rect x="5" y="0.5" width="1" height="1" fill="#a8a8a8"/><rect x="8" y="0.5" width="1" height="1" fill="#a8a8a8"/><rect x="6" y="1.5" width="1" height="1" fill="#fff"/><rect x="9" y="1.5" width="1" height="1" fill="#fff"/><rect x="5" y="3.5" width="1" height="1" fill="#a8a8a8"/><rect x="8" y="3.5" width="1" height="1" fill="#a8a8a8"/><rect x="6" y="4.5" width="1" height="1" fill="#fff"/><rect x="9" y="4.5" width="1" height="1" fill="#fff"/><rect x="5" y="6.5" width="1" height="1" fill="#a8a8a8"/><rect x="8" y="6.5" width="1" height="1" fill="#a8a8a8"/><rect x="6" y="7.5" width="1" height="1" fill="#fff"/><rect x="9" y="7.5" width="1" height="1" fill="#fff"/><rect x="5" y="9.5" width="1" height="1" fill="#a8a8a8"/><rect x="8" y="9.5" width="1" height="1" fill="#a8a8a8"/><rect x="6" y="10.5" width="1" height="1" fill="#fff"/><rect x="9" y="10.5" width="1" height="1" fill="#fff"/><rect x="5" y="12.5" width="1" height="1" fill="#a8a8a8"/><rect x="8" y="12.5" width="1" height="1" fill="#a8a8a8"/><rect x="6" y="13.5" width="1" height="1" fill="#fff"/><rect x="9" y="13.5" width="1" height="1" fill="#fff"/><rect x="5" y="15.5" width="1" height="1" fill="#a8a8a8"/><rect x="8" y="15.5" width="1" height="1" fill="#a8a8a8"/><rect x="6" y="16.5" width="1" height="1" fill="#fff"/><rect x="9" y="16.5" width="1" height="1" fill="#fff"/></g><g transform="translate(207.8 60.0)"><path d="M5.500 15C4.500 13 2.500 10.500 2 9.300C1.700 8.300 2.800 7.800 3.500 8.600L5 10.300V3.500C5 2.400 6.600 2.400 6.600 3.500V7.500V2.300C6.600 1.200 8.200 1.200 8.200 2.300V7.500V2.900C8.200 1.800 9.800 1.800 9.800 2.900V7.800V4.300C9.800 3.300 11.300 3.300 11.300 4.300V11C11.300 13 10.800 14 10.300 15Z" fill="#fff" stroke="#222" stroke-width=".85" stroke-linejoin="round"/></g><g transform="translate(232.8 60.0)"><rect x="1" y="1" width="10" height="9" rx="1" fill="#f6d63c" stroke="#d9b019" stroke-width=".5"/><path d="M8 0l3 3.500h-2v3h-2v-3h-2zM8 16l3-3.500h-2v-3h-2v3h-2zM0 8l3.500-3v2h3v2h-3v2zM16 8l-3.500-3v2h-3v2h3v2z" fill="#6b96c6"/></g><g transform="translate(257.5 60.0)"><path d="M1 15.500l5-5" stroke="#333" stroke-width="2.400"/><path d="M1 15.500l4-4" stroke="#e8b820" stroke-width="1.500"/><circle cx="9.5" cy="5.5" r="5" fill="#fbfbfb" stroke="#9a9a9a" stroke-width=".9"/><path d="M9.500 2.500v6M6.500 5.500h6" stroke="#6b96c6" stroke-width="1.800"/></g><g transform="translate(282.3 60.0)"><path d="M1 15.500l5-5" stroke="#333" stroke-width="2.400"/><path d="M1 15.500l4-4" stroke="#e8b820" stroke-width="1.500"/><circle cx="9.5" cy="5.5" r="5" fill="#fbfbfb" stroke="#9a9a9a" stroke-width=".9"/><path d="M6.500 5.500h6" stroke="#6b96c6" stroke-width="1.800"/></g><g transform="translate(307.3 60.0)"><path d="M1 15.500l5-5" stroke="#333" stroke-width="2.400"/><path d="M1 15.500l4-4" stroke="#ccc" stroke-width="1.500"/><circle cx="9.5" cy="5.5" r="5" fill="#fbfbfb" stroke="#b0b0b0" stroke-width=".9"/><text x="5.800" y="7.800" font-size="6" font-family="DejaVu Sans" fill="#888">1:1</text></g><g transform="translate(333.3 60.0)"><path d="M1 1h5l-1.700 1.700 2 2-1.300 1.300-2-2L1 6zM15 1v5l-1.700-1.700-2 2-1.300-1.300 2-2L10 1zM15 15h-5l1.700-1.700-2-2 1.300-1.300 2 2L15 10z" fill="#6b96c6"/><rect x="5" y="5" width="6" height="6" fill="#e9e9e9"/><path d="M0.500 15.500l5.500-5.500" stroke="#333" stroke-width="2.400"/><path d="M0.500 15.500l4.500-4.500" stroke="#e8b820" stroke-width="1.500"/></g><g transform="translate(358.1 60.0)"><rect x="2" y="2" width="8" height="8" fill="#f6d63c" stroke="#d9b019" stroke-width=".5"/><path d="M1 15.500l5-5" stroke="#333" stroke-width="2.400"/><path d="M1 15.500l4-4" stroke="#e8b820" stroke-width="1.500"/><circle cx="10" cy="5.5" r="5" fill="#fbfbfb" stroke="#9a9a9a" stroke-width=".9"/><path d="M10 1a4.500 4.500 0 0 0 0 9z" fill="#e9e4d0" opacity=".7"/></g><g transform="translate(383.1 60.0)"><rect x="2" y="2" width="8" height="8" fill="#e3e3e3" stroke="#bdbdbd" stroke-width=".5"/><path d="M1 15.500l5-5" stroke="#333" stroke-width="2.400"/><path d="M1 15.500l4-4" stroke="#e8b820" stroke-width="1.500"/><circle cx="10" cy="5.5" r="5" fill="#fbfbfb" stroke="#9a9a9a" stroke-width=".9"/><path d="M10 1a4.500 4.500 0 0 0 0 9z" fill="#e9e4d0" opacity=".7"/></g><g transform="translate(408.0 60.0)"><path d="M1 15.500l5-5" stroke="#333" stroke-width="2.400"/><path d="M1 15.500l4-4" stroke="#e8b820" stroke-width="1.500"/><circle cx="9" cy="5.5" r="5" fill="#fbfbfb" stroke="#9a9a9a" stroke-width=".9"/><rect x="8.500" y="8.500" width="7.500" height="7.500" fill="#6b96c6"/><path d="M14 10l-3.500 2.300 3.500 2.300" fill="none" stroke="#fff" stroke-width="1.500"/></g><g transform="translate(433.3 60.0)"><path d="M1 15.500l5-5" stroke="#333" stroke-width="2.400"/><path d="M1 15.500l4-4" stroke="#ccc" stroke-width="1.500"/><circle cx="9" cy="5.5" r="5" fill="#fbfbfb" stroke="#bbb" stroke-width=".9"/><rect x="8.500" y="8.500" width="7.500" height="7.500" fill="#b5b5b5"/><path d="M10.500 10l3.500 2.300-3.500 2.300" fill="none" stroke="#fff" stroke-width="1.500"/></g><g transform="translate(458.1 60.0)"><path d="M1.500 2h13v12h-9.500q-3.500 0-3.500-3z" fill="#e4e4e4" stroke="#b2b2b2"/><path d="M1.500 11q0-2 3.500-2v5" fill="#d0d0d0" stroke="#b2b2b2"/><rect x="9" y="9" width="7" height="7" rx="1" fill="#c9a30f"/><path d="M12.5 10v5M10 12.5h5M10.7 10.7l3.6 3.6M14.3 10.7l-3.6 3.6" stroke="#fff" stroke-width="1"/></g><g transform="translate(483.4 60.0)"><path d="M1.500 2h13v12h-9.500q-3.500 0-3.500-3z" fill="#e4e4e4" stroke="#b2b2b2"/><path d="M1.500 11q0-2 3.500-2v5" fill="#d0d0d0" stroke="#b2b2b2"/><path d="M9 1h3v7l-1.500-1.500L9 8z" fill="#6b96c6"/><rect x="9" y="9" width="7" height="7" rx="1" fill="#c9a30f"/><path d="M12.5 10v5M10 12.5h5M10.7 10.7l3.6 3.6M14.3 10.7l-3.6 3.6" stroke="#fff" stroke-width="1"/></g><g transform="translate(508.2 60.0)"><path d="M1.500 2h13v12h-9.500q-3.500 0-3.500-3z" fill="#e4e4e4" stroke="#b2b2b2"/><path d="M1.500 11q0-2 3.500-2v5" fill="#d0d0d0" stroke="#b2b2b2"/><path d="M9 1h3v7l-1.500-1.500L9 8z" fill="#6b96c6"/></g><g transform="translate(533.1 60.0)"><path d="M13.500 6A6 6 0 0 0 2.500 5l-1.500-1v5h5l-1.700-1.500a3.500 3.500 0 0 1 6.200-1z" fill="#6b96c6" stroke="#3f6fa8" stroke-width=".4"/><path d="M2.500 10a6 6 0 0 0 11 1l1.500 1v-5h-5l1.700 1.500a3.500 3.500 0 0 1-6.200 1z" fill="#6b96c6" stroke="#3f6fa8" stroke-width=".4"/></g><g transform="translate(555.9 60.0)"><rect x="5" y="0.5" width="1" height="1" fill="#a8a8a8"/><rect x="8" y="0.5" width="1" height="1" fill="#a8a8a8"/><rect x="6" y="1.5" width="1" height="1" fill="#fff"/><rect x="9" y="1.5" width="1" height="1" fill="#fff"/><rect x="5" y="3.5" width="1" height="1" fill="#a8a8a8"/><rect x="8" y="3.5" width="1" height="1" fill="#a8a8a8"/><rect x="6" y="4.5" width="1" height="1" fill="#fff"/><rect x="9" y="4.5" width="1" height="1" fill="#fff"/><rect x="5" y="6.5" width="1" height="1" fill="#a8a8a8"/><rect x="8" y="6.5" width="1" height="1" fill="#a8a8a8"/><rect x="6" y="7.5" width="1" height="1" fill="#fff"/><rect x="9" y="7.5" width="1" height="1" fill="#fff"/><rect x="5" y="9.5" width="1" height="1" fill="#a8a8a8"/><rect x="8" y="9.5" width="1" height="1" fill="#a8a8a8"/><rect x="6" y="10.5" width="1" height="1" fill="#fff"/><rect x="9" y="10.5" width="1" height="1" fill="#fff"/><rect x="5" y="12.5" width="1" height="1" fill="#a8a8a8"/><rect x="8" y="12.5" width="1" height="1" fill="#a8a8a8"/><rect x="6" y="13.5" width="1" height="1" fill="#fff"/><rect x="9" y="13.5" width="1" height="1" fill="#fff"/><rect x="5" y="15.5" width="1" height="1" fill="#a8a8a8"/><rect x="8" y="15.5" width="1" height="1" fill="#a8a8a8"/><rect x="6" y="16.5" width="1" height="1" fill="#fff"/><rect x="9" y="16.5" width="1" height="1" fill="#fff"/></g><g transform="translate(573.6 60.0)"><circle cx="6.500" cy="6" r="5.500" fill="#4f86c6"/><text x="4.800" y="9.500" font-size="9" font-weight="bold" font-family="DejaVu Serif" fill="#fff">i</text><path d="M9 7.5l0 8 2-1.800 1.500 3 1.300-.6-1.500-3 2.700-.2z" fill="#fff" stroke="#555" stroke-width=".7"/></g><g transform="translate(598.9 60.0)"><circle cx="6.500" cy="6.500" r="4.500" fill="none" stroke="#c2c2c2" stroke-width="2.500" stroke-dasharray="2 1.200"/><circle cx="6.500" cy="6.500" r="3.500" fill="#e0e0e0" stroke="#bdbdbd"/><path d="M5.500 4.500l3 2-3 2z" fill="#fff"/><path d="M9 8l0 8 2-1.800 1.500 3 1.300-.6-1.500-3 2.700-.2z" fill="#f4f4f4" stroke="#bbb" stroke-width=".7"/></g><g transform="translate(616.6 60.0)"><path d="M4.500 6.500h7l-3.500 4z" fill="#c8c8c8"/></g><g transform="translate(636.0 60.0)"><rect x="1.500" y="1.500" width="12" height="12" fill="none" stroke="#666" stroke-dasharray="2 1.500"/><rect x="2.500" y="2.500" width="8.500" height="8.500" fill="#f6d63c" stroke="#d9b019" stroke-width=".5"/><path d="M8 6.5l0 8 2-1.800 1.500 3 1.300-.6-1.500-3 2.700-.2z" fill="#fff" stroke="#555" stroke-width=".7"/></g><g transform="translate(654.0 60.0)"><path d="M4.500 6.500h7l-3.500 4z" fill="#444"/></g><g transform="translate(673.0 60.0)"><rect x="2" y="2" width="12.500" height="12.500" fill="#e2e2e2" stroke="#b5b5b5"/><path d="M2 2l12.500 12.500H2z" fill="#f6d63c" stroke="#d9b019" stroke-width=".5"/></g><g transform="translate(691.2 60.0)"><path d="M4.500 6.500h7l-3.500 4z" fill="#444"/></g><g transform="translate(710.0 60.0)"><rect x="1.500" y="1.500" width="9.500" height="9.500" rx="1" fill="#f6d63c" stroke="#d9b019" stroke-width=".5"/><rect x="8.500" y="8.500" width="7" height="7" rx="1.500" fill="#d93a3a"/><circle cx="12" cy="12" r="2" fill="none" stroke="#fff" stroke-width=".9"/><path d="M10.500 13.500l3-3" stroke="#fff" stroke-width=".9"/></g><g transform="translate(735.0 60.0)"><rect x="1.500" y="1.500" width="13" height="13" rx="1" fill="#eaf0f8" stroke="#6b96c6"/><rect x="2" y="2" width="12" height="3" fill="#6b96c6" opacity=".7"/><path d="M2 8h12M2 11h12M6 5v9" stroke="#6b96c6" stroke-width=".8"/></g><g transform="translate(759.8 60.0)"><path d="M2 1v14M14 1v14" stroke="#777" stroke-width="1.200"/><path d="M2 4h12M2 8h12M2 12h12" stroke="#999" stroke-width=".7"/><path d="M1 15h14" stroke="#777" stroke-width="1.200"/><circle cx="6" cy="4" r="1.600" fill="#d44"/><circle cx="10" cy="4" r="1.600" fill="#d44"/><circle cx="5" cy="8" r="1.600" fill="#6a6"/><circle cx="8" cy="8" r="1.600" fill="#6a6"/><circle cx="11" cy="8" r="1.600" fill="#6a6"/><circle cx="5" cy="12" r="1.600" fill="#6b96c6"/><circle cx="8" cy="12" r="1.600" fill="#6b96c6"/><circle cx="11" cy="12" r="1.600" fill="#6b96c6"/></g><g transform="translate(785.0 60.0)"><circle cx="8" cy="8" r="4.500" fill="#6b96c6"/><path d="M11.50 8.00L15.50 8.00" stroke="#6b96c6" stroke-width="2.400"/><path d="M10.47 10.47L13.30 13.30" stroke="#6b96c6" stroke-width="2.400"/><path d="M8.00 11.50L8.00 15.50" stroke="#6b96c6" stroke-width="2.400"/><path d="M5.53 10.47L2.70 13.30" stroke="#6b96c6" stroke-width="2.400"/><path d="M4.50 8.00L0.50 8.00" stroke="#6b96c6" stroke-width="2.400"/><path d="M5.53 5.53L2.70 2.70" stroke="#6b96c6" stroke-width="2.400"/><path d="M8.00 4.50L8.00 0.50" stroke="#6b96c6" stroke-width="2.400"/><path d="M10.47 5.53L13.30 2.70" stroke="#6b96c6" stroke-width="2.400"/><circle cx="8" cy="8" r="2" fill="#f3f3f3"/></g><g transform="translate(809.5 60.0)"><text x="2" y="14.500" font-size="17" font-weight="bold" font-family="DejaVu Serif" fill="#8a1a9a">Σ</text></g><g transform="translate(834.8 60.0)"><path d="M1 3v3M15 3v3M1 4.500h14" stroke="#2f5f9f" stroke-width="1.200"/><rect x="1" y="8" width="14" height="6" rx="1" fill="#8d8d8d"/><path d="M2 11h12" stroke="#d8d8d8" stroke-width="1"/></g><g transform="translate(853.0 60.0)"><path d="M4.500 6.500h7l-3.500 4z" fill="#444"/></g><g transform="translate(871.6 60.0)"><path d="M3 1.500h10q2.500 0 2.500 2.500v3q0 2.500-2.500 2.500h-5.500l-3.500 3.500 .5-3.500h-1.500q-2.500 0-2.500-2.500v-3q0-2.500 2.500-2.500z" fill="#f3e07a" stroke="#c9b44a" stroke-width=".7"/><circle cx="4" cy="13.500" r="2" fill="#6a9a5a"/></g><g transform="translate(897.2 60.0)"><path d="M1.500 1.500h13v9.500h-9l-3.500 3.500.5-3.500h-1z" fill="#e9eef2" stroke="#b5b5b5"/><text x="5" y="9.500" font-size="9" font-weight="bold" font-family="DejaVu Serif" fill="#444">T</text></g><g transform="translate(915.2 60.0)"><path d="M4.500 6.500h7l-3.500 4z" fill="#444"/></g><g transform="translate(-2.5 91.0)"><rect x="5" y="0.5" width="1" height="1" fill="#a8a8a8"/><rect x="8" y="0.5" width="1" height="1" fill="#a8a8a8"/><rect x="6" y="1.5" width="1" height="1" fill="#fff"/><rect x="9" y="1.5" width="1" height="1" fill="#fff"/><rect x="5" y="3.5" width="1" height="1" fill="#a8a8a8"/><rect x="8" y="3.5" width="1" height="1" fill="#a8a8a8"/><rect x="6" y="4.5" width="1" height="1" fill="#fff"/><rect x="9" y="4.5" width="1" height="1" fill="#fff"/><rect x="5" y="6.5" width="1" height="1" fill="#a8a8a8"/><rect x="8" y="6.5" width="1" height="1" fill="#a8a8a8"/><rect x="6" y="7.5" width="1" height="1" fill="#fff"/><rect x="9" y="7.5" width="1" height="1" fill="#fff"/><rect x="5" y="9.5" width="1" height="1" fill="#a8a8a8"/><rect x="8" y="9.5" width="1" height="1" fill="#a8a8a8"/><rect x="6" y="10.5" width="1" height="1" fill="#fff"/><rect x="9" y="10.5" width="1" height="1" fill="#fff"/><rect x="5" y="12.5" width="1" height="1" fill="#a8a8a8"/><rect x="8" y="12.5" width="1" height="1" fill="#a8a8a8"/><rect x="6" y="13.5" width="1" height="1" fill="#fff"/><rect x="9" y="13.5" width="1" height="1" fill="#fff"/><rect x="5" y="15.5" width="1" height="1" fill="#a8a8a8"/><rect x="8" y="15.5" width="1" height="1" fill="#a8a8a8"/><rect x="6" y="16.5" width="1" height="1" fill="#fff"/><rect x="9" y="16.5" width="1" height="1" fill="#fff"/></g><g transform="translate(17.3 91.0)"><path d="M2 13l5-11 2 .8-5 11-2.500 1.500z" fill="#aaa"/><path d="M5 13l5-11 2 .8-5 11-2.500 1.500z" fill="#999"/><path d="M10 12h4l-2 2.500z" fill="#bbb"/></g><g transform="translate(41.7 91.0)"><path d="M3 12.500l6.500-11 3 1.700-6.500 11z" fill="#ead62a" stroke="#b8a21a" stroke-width=".6"/><path d="M3 12.500l3 1.700-3.800 1.800z" fill="#555"/><path d="M9.500 1.500l3 1.700" stroke="#b8a21a" stroke-width="1.500"/></g><g transform="translate(67.0 91.0)"><rect x="1" y="1" width="14" height="14" rx="2" fill="#b9b9b9" stroke="#a2a2a2" stroke-width=".6"/><rect x="3.5" y="2" width="9" height="5" fill="#d9d9d9"/><rect x="3.5" y="3.3" width="9" height="1.2" fill="#c2c2c2"/><rect x="4" y="10" width="8.5" height="5" fill="#f2f2f2"/><rect x="5" y="11" width="2" height="2.5" fill="#999"/><path d="M8 15l6-8 1.500 1-6 8-2 .8z" fill="#a9a9a9"/></g><g transform="translate(92.3 91.0)"><path d="M2 3q3-2.500 6-1t5 0q2 2 0 4.500t-5 1q-1 2.500-4 2t-2-6.500z" fill="#c4c4c4" stroke="#a9a9a9" stroke-width=".6"/><rect x="8.5" y="8.5" width="7" height="7" rx="1" fill="#bdbdbd"/><path d="M12.0 9.5v5M9.5 12.0h5M10.2 10.2l3.6 3.6M13.8 10.2l-3.6 3.6" stroke="#fff" stroke-width="1"/></g><g transform="translate(116.8 91.0)"><path d="M2 15l3-11" stroke="#aaa" stroke-width="1"/><rect x="3.500" y="2" width="3" height="3" fill="#bbb"/><path d="M6 4h7" stroke="#bbb" stroke-width="1"/><path d="M6 8l7 7M13 7l-6 7" stroke="#b0b0b0" stroke-width="1.800"/></g><g transform="translate(135.3 91.0)"><path d="M4.500 6.500h7l-3.500 4z" fill="#c8c8c8"/></g><g transform="translate(153.9 91.0)"><rect x="1" y="2" width="12" height="3" fill="#d2d2d2"/><rect x="1" y="6" width="12" height="3" fill="#d8d8d8"/><rect x="1" y="10" width="12" height="3" fill="#d2d2d2"/><path d="M5 15l7-13 2 1-7 13-2.500 1z" fill="#a5a5a5"/></g><g transform="translate(178.8 91.0)"><path d="M1.500 3.500h13" stroke="#555" stroke-width="1.600"/><path d="M6 3V1.800h4V3" fill="none" stroke="#555" stroke-width="1"/><path d="M3 5h10l-.8 10h-8.400z" fill="#f4f4f4" stroke="#555" stroke-width="1.400"/><path d="M6 6.500v7M8 6.500v7M10 6.500v7" stroke="#555" stroke-width="1.200"/></g><g transform="translate(204.0 91.0)"><path d="M1 3l11 6M1 7l11-3" stroke="#a9a9a9" stroke-width="1.200"/><circle cx="12.500" cy="5" r="2" fill="none" stroke="#a9a9a9" stroke-width="1.200"/><circle cx="12.500" cy="11" r="2" fill="none" stroke="#a9a9a9" stroke-width="1.200"/></g><g transform="translate(229.0 91.0)"><path d="M5.500 1.500h6l3 3v7h-9z" fill="#ededed" stroke="#cfcfcf"/><path d="M1.500 5.500h6l3 3v7h-9z" fill="#e2e2e2" stroke="#c2c2c2"/><path d="M3.500 10h4M3.500 12h4" stroke="#cfcfcf"/></g><g transform="translate(253.7 91.0)"><rect x="2" y="2" width="12" height="13.500" rx="1" fill="#d6d6d6" stroke="#c2c2c2"/><rect x="5" y=".8" width="6" height="2.500" fill="#c9c9c9"/><rect x="4" y="4.500" width="8" height="9.500" fill="#ececec"/><path d="M5.500 8h4M5.500 10.500h4" stroke="#d0d0d0"/></g><g transform="translate(278.6 91.0)"><path d="M1 6.500l6-5v3q8 0 7.500 6-.5 3.500-5 4.500 3-2 2-4.500t-4.500-2v3z" fill="#b5b5b5"/></g><g transform="translate(304.0 91.0)"><path d="M15 6.500l-6-5v3q-8 0-7.500 6 .5 3.500 5 4.500-3-2-2-4.500t4.500-2v3z" fill="#b5b5b5"/></g><g transform="translate(326.6 91.0)"><rect x="5" y="0.5" width="1" height="1" fill="#a8a8a8"/><rect x="8" y="0.5" width="1" height="1" fill="#a8a8a8"/><rect x="6" y="1.5" width="1" height="1" fill="#fff"/><rect x="9" y="1.5" width="1" height="1" fill="#fff"/><rect x="5" y="3.5" width="1" height="1" fill="#a8a8a8"/><rect x="8" y="3.5" width="1" height="1" fill="#a8a8a8"/><rect x="6" y="4.5" width="1" height="1" fill="#fff"/><rect x="9" y="4.5" width="1" height="1" fill="#fff"/><rect x="5" y="6.5" width="1" height="1" fill="#a8a8a8"/><rect x="8" y="6.5" width="1" height="1" fill="#a8a8a8"/><rect x="6" y="7.5" width="1" height="1" fill="#fff"/><rect x="9" y="7.5" width="1" height="1" fill="#fff"/><rect x="5" y="9.5" width="1" height="1" fill="#a8a8a8"/><rect x="8" y="9.5" width="1" height="1" fill="#a8a8a8"/><rect x="6" y="10.5" width="1" height="1" fill="#fff"/><rect x="9" y="10.5" width="1" height="1" fill="#fff"/><rect x="5" y="12.5" width="1" height="1" fill="#a8a8a8"/><rect x="8" y="12.5" width="1" height="1" fill="#a8a8a8"/><rect x="6" y="13.5" width="1" height="1" fill="#fff"/><rect x="9" y="13.5" width="1" height="1" fill="#fff"/><rect x="5" y="15.5" width="1" height="1" fill="#a8a8a8"/><rect x="8" y="15.5" width="1" height="1" fill="#a8a8a8"/><rect x="6" y="16.5" width="1" height="1" fill="#fff"/><rect x="9" y="16.5" width="1" height="1" fill="#fff"/></g><g transform="translate(344.3 91.0)"><path d="M0 6l3-4h12v8h-12z" fill="#f6d63c" stroke="#d9b019" stroke-width=".6"/><text x="3.3" y="8.3" font-size="5.500" font-weight="bold" font-family="DejaVu Sans" fill="#333" textLength="9" lengthAdjust="spacingAndGlyphs">abc</text></g><g transform="translate(369.6 91.0)"><circle cx="6" cy="6" r="5.500" fill="#e8302a"/><path d="M6 6V.5A5.500 5.500 0 0 0 .8 4.500z" fill="#f4d11a"/><path d="M6 6L.8 4.500A5.500 5.500 0 0 0 5 11.400z" fill="#2a9a3a"/><rect x="7" y="11" width="3" height="5" fill="#f4d11a"/><rect x="10" y="7" width="3" height="9" fill="#2a9a3a"/><rect x="13" y="11.500" width="3" height="4.500" fill="#c8282a"/></g><g transform="translate(394.9 91.0)"><rect x="0" y="1" width="16" height="14" fill="#dce8fb" stroke="#5b8fe0" stroke-width="1"/><path d="M0 4.5l3-4h12v8h-12z" fill="#f6d63c" stroke="#d9b019" stroke-width=".6"/><text x="3.3" y="6.8" font-size="5.500" font-weight="bold" font-family="DejaVu Sans" fill="#333" textLength="6" lengthAdjust="spacingAndGlyphs">ab</text><circle cx="12.500" cy="11" r="3.500" fill="#b8282a"/></g><g transform="translate(420.2 91.0)"><path d="M0 4.5l3-4h12v8h-12z" fill="#e4e4e4" stroke="#c5c5c5" stroke-width=".6"/><text x="3.3" y="6.8" font-size="5.500" font-weight="bold" font-family="DejaVu Sans" fill="#9a9a9a" textLength="9" lengthAdjust="spacingAndGlyphs">abc</text><circle cx="11.500" cy="11.500" r="3" fill="#9d9d9d"/></g><g transform="translate(444.6 91.0)"><path d="M0 4.5l3-4h12v8h-12z" fill="#e4e4e4" stroke="#c5c5c5" stroke-width=".6"/><text x="3.3" y="6.8" font-size="5.500" font-weight="bold" font-family="DejaVu Sans" fill="#9a9a9a" textLength="9" lengthAdjust="spacingAndGlyphs">abc</text><ellipse cx="10" cy="12" rx="5" ry="2.800" fill="#f2f2f2" stroke="#9d9d9d"/><circle cx="10" cy="12" r="1.500" fill="#9d9d9d"/></g><g transform="translate(469.9 91.0)"><path d="M0 4.5l3-4h12v8h-12z" fill="#e4e4e4" stroke="#c5c5c5" stroke-width=".6"/><text x="3.3" y="6.8" font-size="5.500" font-weight="bold" font-family="DejaVu Sans" fill="#9a9a9a" textLength="9" lengthAdjust="spacingAndGlyphs">abc</text><rect x="8.500" y="8.500" width="7" height="7" rx="1" fill="#a9a9a9"/><path d="M10 12h4M12.500 10l1.800 2-1.800 2" stroke="#fff" fill="none" stroke-width="1.200"/></g><g transform="translate(495.2 91.0)"><path d="M0 4.5l3-4h12v8h-12z" fill="#e4e4e4" stroke="#c5c5c5" stroke-width=".6"/><text x="3.3" y="6.8" font-size="5.500" font-weight="bold" font-family="DejaVu Sans" fill="#9a9a9a" textLength="9" lengthAdjust="spacingAndGlyphs">abc</text><rect x="8.500" y="8.500" width="7" height="7" rx="1" fill="#a9a9a9"/><circle cx="12" cy="12" r="2" fill="none" stroke="#fff"/></g><g transform="translate(519.6 91.0)"><path d="M0 4.5l3-4h12v8h-12z" fill="#e4e4e4" stroke="#c5c5c5" stroke-width=".6"/><text x="3.3" y="6.8" font-size="5.500" font-weight="bold" font-family="DejaVu Sans" fill="#9a9a9a" textLength="9" lengthAdjust="spacingAndGlyphs">abc</text><rect x="8.500" y="8.500" width="7" height="7" rx="1" fill="#e9e9e9" stroke="#c5c5c5"/><path d="M10 14.500l4-4" stroke="#aaa" stroke-width="1.500"/></g><g transform="translate(542.9 91.0)"><rect x="5" y="0.5" width="1" height="1" fill="#a8a8a8"/><rect x="8" y="0.5" width="1" height="1" fill="#a8a8a8"/><rect x="6" y="1.5" width="1" height="1" fill="#fff"/><rect x="9" y="1.5" width="1" height="1" fill="#fff"/><rect x="5" y="3.5" width="1" height="1" fill="#a8a8a8"/><rect x="8" y="3.5" width="1" height="1" fill="#a8a8a8"/><rect x="6" y="4.5" width="1" height="1" fill="#fff"/><rect x="9" y="4.5" width="1" height="1" fill="#fff"/><rect x="5" y="6.5" width="1" height="1" fill="#a8a8a8"/><rect x="8" y="6.5" width="1" height="1" fill="#a8a8a8"/><rect x="6" y="7.5" width="1" height="1" fill="#fff"/><rect x="9" y="7.5" width="1" height="1" fill="#fff"/><rect x="5" y="9.5" width="1" height="1" fill="#a8a8a8"/><rect x="8" y="9.5" width="1" height="1" fill="#a8a8a8"/><rect x="6" y="10.5" width="1" height="1" fill="#fff"/><rect x="9" y="10.5" width="1" height="1" fill="#fff"/><rect x="5" y="12.5" width="1" height="1" fill="#a8a8a8"/><rect x="8" y="12.5" width="1" height="1" fill="#a8a8a8"/><rect x="6" y="13.5" width="1" height="1" fill="#fff"/><rect x="9" y="13.5" width="1" height="1" fill="#fff"/><rect x="5" y="15.5" width="1" height="1" fill="#a8a8a8"/><rect x="8" y="15.5" width="1" height="1" fill="#a8a8a8"/><rect x="6" y="16.5" width="1" height="1" fill="#fff"/><rect x="9" y="16.5" width="1" height="1" fill="#fff"/></g><g transform="translate(561.0 91.0)"><circle cx="8" cy="7.500" r="7" fill="#6b96c6" stroke="#3f6fa8" stroke-width=".6"/><ellipse cx="8" cy="7.500" rx="3" ry="7" fill="none" stroke="#dfe8f4" stroke-width=".9"/><path d="M1 7.500h14M2.500 3.500h11M2.500 11.500h11" stroke="#dfe8f4" stroke-width=".8"/><rect x="3" y="3" width="3" height="9" fill="#8a8a8a" opacity=".55"/><rect x="10" y="3" width="3" height="9" fill="#8a8a8a" opacity=".55"/><rect x="9" y="10" width="6.500" height="6" rx="1" fill="#3f8a4a"/><path d="M10 13h4l-2 2.500z" fill="#222"/></g><g transform="translate(586.2 91.0)"><circle cx="8" cy="7.500" r="7" fill="#6b96c6" stroke="#3f6fa8" stroke-width=".6"/><ellipse cx="8" cy="7.500" rx="3" ry="7" fill="none" stroke="#dfe8f4" stroke-width=".9"/><path d="M1 7.500h14M2.500 3.500h11M2.500 11.500h11" stroke="#dfe8f4" stroke-width=".8"/><rect x="3" y="3" width="3" height="9" fill="#8a8a8a" opacity=".55"/><rect x="10" y="3" width="3" height="9" fill="#8a8a8a" opacity=".55"/><rect x="9.500" y="10" width="6" height="6" rx="1" fill="#3f8a4a"/><circle cx="12.200" cy="12.700" r="1.500" fill="none" stroke="#fff" stroke-width=".8"/></g><g transform="translate(611.5 91.0)"><circle cx="8" cy="7" r="6.800" fill="#4a7fbf" stroke="#3f6fa8" stroke-width=".6"/><path d="M3 5q3-3 6-1t4 2q-2 3-5 2t-5-3z" fill="#9fc3e8" opacity=".8"/><circle cx="4.500" cy="13" r="2.600" fill="#111"/><circle cx="11.500" cy="13" r="2.600" fill="#111"/><rect x="6" y="11.500" width="4" height="2" fill="#111"/><circle cx="4.500" cy="13" r="1.200" fill="#eee"/><circle cx="11.500" cy="13" r="1.200" fill="#eee"/></g><g transform="translate(634.0 91.0)"><rect x="5" y="0.5" width="1" height="1" fill="#a8a8a8"/><rect x="8" y="0.5" width="1" height="1" fill="#a8a8a8"/><rect x="6" y="1.5" width="1" height="1" fill="#fff"/><rect x="9" y="1.5" width="1" height="1" fill="#fff"/><rect x="5" y="3.5" width="1" height="1" fill="#a8a8a8"/><rect x="8" y="3.5" width="1" height="1" fill="#a8a8a8"/><rect x="6" y="4.5" width="1" height="1" fill="#fff"/><rect x="9" y="4.5" width="1" height="1" fill="#fff"/><rect x="5" y="6.5" width="1" height="1" fill="#a8a8a8"/><rect x="8" y="6.5" width="1" height="1" fill="#a8a8a8"/><rect x="6" y="7.5" width="1" height="1" fill="#fff"/><rect x="9" y="7.5" width="1" height="1" fill="#fff"/><rect x="5" y="9.5" width="1" height="1" fill="#a8a8a8"/><rect x="8" y="9.5" width="1" height="1" fill="#a8a8a8"/><rect x="6" y="10.5" width="1" height="1" fill="#fff"/><rect x="9" y="10.5" width="1" height="1" fill="#fff"/><rect x="5" y="12.5" width="1" height="1" fill="#a8a8a8"/><rect x="8" y="12.5" width="1" height="1" fill="#a8a8a8"/><rect x="6" y="13.5" width="1" height="1" fill="#fff"/><rect x="9" y="13.5" width="1" height="1" fill="#fff"/><rect x="5" y="15.5" width="1" height="1" fill="#a8a8a8"/><rect x="8" y="15.5" width="1" height="1" fill="#a8a8a8"/><rect x="6" y="16.5" width="1" height="1" fill="#fff"/><rect x="9" y="16.5" width="1" height="1" fill="#fff"/></g><g transform="translate(652.0 91.0)"><path d="M8 .5q-3.500 0-3.500 2.500v2h4v1h-5.500q-2.500 0-2.500 3t2.500 3h1.500v-2.500q0-2 2-2h4q1.500 0 1.500-2v-2.500q0-2.500-4-2.500z" fill="#3b76ad"/><path d="M8 15.500q3.500 0 3.500-2.500v-2h-4v-1h5.500q2.500 0 2.500-3t-2.500-3h-1.500v2.500q0 2-2 2h-4q-1.500 0-1.500 2v2.500q0 2.500 4 2.500z" fill="#f6cf3c"/><circle cx="6" cy="2.500" r=".8" fill="#fff"/><path d="M11 12.500l3.500 1.500-3.500 1.500" fill="none" stroke="#333" stroke-width=".9"/></g><g transform="translate(676.7 91.0)"><path d="M3 9A5.500 5.500 0 1 1 8 14" fill="none" stroke="#3f7fd4" stroke-width="2.800"/><path d="M0 8l3.500 5 3.500-5z" fill="#3f7fd4"/></g><g transform="translate(694.9 91.0)"><path d="M4.500 6.500h7l-3.500 4z" fill="#444"/></g><g transform="translate(711.7 91.0)"><rect x="5" y="0.5" width="1" height="1" fill="#a8a8a8"/><rect x="8" y="0.5" width="1" height="1" fill="#a8a8a8"/><rect x="6" y="1.5" width="1" height="1" fill="#fff"/><rect x="9" y="1.5" width="1" height="1" fill="#fff"/><rect x="5" y="3.5" width="1" height="1" fill="#a8a8a8"/><rect x="8" y="3.5" width="1" height="1" fill="#a8a8a8"/><rect x="6" y="4.5" width="1" height="1" fill="#fff"/><rect x="9" y="4.5" width="1" height="1" fill="#fff"/><rect x="5" y="6.5" width="1" height="1" fill="#a8a8a8"/><rect x="8" y="6.5" width="1" height="1" fill="#a8a8a8"/><rect x="6" y="7.5" width="1" height="1" fill="#fff"/><rect x="9" y="7.5" width="1" height="1" fill="#fff"/><rect x="5" y="9.5" width="1" height="1" fill="#a8a8a8"/><rect x="8" y="9.5" width="1" height="1" fill="#a8a8a8"/><rect x="6" y="10.5" width="1" height="1" fill="#fff"/><rect x="9" y="10.5" width="1" height="1" fill="#fff"/><rect x="5" y="12.5" width="1" height="1" fill="#a8a8a8"/><rect x="8" y="12.5" width="1" height="1" fill="#a8a8a8"/><rect x="6" y="13.5" width="1" height="1" fill="#fff"/><rect x="9" y="13.5" width="1" height="1" fill="#fff"/><rect x="5" y="15.5" width="1" height="1" fill="#a8a8a8"/><rect x="8" y="15.5" width="1" height="1" fill="#a8a8a8"/><rect x="6" y="16.5" width="1" height="1" fill="#fff"/><rect x="9" y="16.5" width="1" height="1" fill="#fff"/></g><g transform="translate(730.3 91.0)"><rect x="1" y="1" width="14" height="14.500" rx="1" fill="#6b96c6"/><rect x="1" y="1" width="3.500" height="14.500" fill="#27364a"/><text x="7" y="12" font-size="9" font-family="DejaVu Sans" fill="#fff">?</text></g><g transform="translate(753.0 91.0)"><rect x="5" y="0.5" width="1" height="1" fill="#a8a8a8"/><rect x="8" y="0.5" width="1" height="1" fill="#a8a8a8"/><rect x="6" y="1.5" width="1" height="1" fill="#fff"/><rect x="9" y="1.5" width="1" height="1" fill="#fff"/><rect x="5" y="3.5" width="1" height="1" fill="#a8a8a8"/><rect x="8" y="3.5" width="1" height="1" fill="#a8a8a8"/><rect x="6" y="4.5" width="1" height="1" fill="#fff"/><rect x="9" y="4.5" width="1" height="1" fill="#fff"/><rect x="5" y="6.5" width="1" height="1" fill="#a8a8a8"/><rect x="8" y="6.5" width="1" height="1" fill="#a8a8a8"/><rect x="6" y="7.5" width="1" height="1" fill="#fff"/><rect x="9" y="7.5" width="1" height="1" fill="#fff"/><rect x="5" y="9.5" width="1" height="1" fill="#a8a8a8"/><rect x="8" y="9.5" width="1" height="1" fill="#a8a8a8"/><rect x="6" y="10.5" width="1" height="1" fill="#fff"/><rect x="9" y="10.5" width="1" height="1" fill="#fff"/><rect x="5" y="12.5" width="1" height="1" fill="#a8a8a8"/><rect x="8" y="12.5" width="1" height="1" fill="#a8a8a8"/><rect x="6" y="13.5" width="1" height="1" fill="#fff"/><rect x="9" y="13.5" width="1" height="1" fill="#fff"/><rect x="5" y="15.5" width="1" height="1" fill="#a8a8a8"/><rect x="8" y="15.5" width="1" height="1" fill="#a8a8a8"/><rect x="6" y="16.5" width="1" height="1" fill="#fff"/><rect x="9" y="16.5" width="1" height="1" fill="#fff"/></g><g transform="translate(769.9 91.0)"><rect x="5" y="0.5" width="1" height="1" fill="#a8a8a8"/><rect x="8" y="0.5" width="1" height="1" fill="#a8a8a8"/><rect x="6" y="1.5" width="1" height="1" fill="#fff"/><rect x="9" y="1.5" width="1" height="1" fill="#fff"/><rect x="5" y="3.5" width="1" height="1" fill="#a8a8a8"/><rect x="8" y="3.5" width="1" height="1" fill="#a8a8a8"/><rect x="6" y="4.5" width="1" height="1" fill="#fff"/><rect x="9" y="4.5" width="1" height="1" fill="#fff"/><rect x="5" y="6.5" width="1" height="1" fill="#a8a8a8"/><rect x="8" y="6.5" width="1" height="1" fill="#a8a8a8"/><rect x="6" y="7.5" width="1" height="1" fill="#fff"/><rect x="9" y="7.5" width="1" height="1" fill="#fff"/><rect x="5" y="9.5" width="1" height="1" fill="#a8a8a8"/><rect x="8" y="9.5" width="1" height="1" fill="#a8a8a8"/><rect x="6" y="10.5" width="1" height="1" fill="#fff"/><rect x="9" y="10.5" width="1" height="1" fill="#fff"/><rect x="5" y="12.5" width="1" height="1" fill="#a8a8a8"/><rect x="8" y="12.5" width="1" height="1" fill="#a8a8a8"/><rect x="6" y="13.5" width="1" height="1" fill="#fff"/><rect x="9" y="13.5" width="1" height="1" fill="#fff"/><rect x="5" y="15.5" width="1" height="1" fill="#a8a8a8"/><rect x="8" y="15.5" width="1" height="1" fill="#a8a8a8"/><rect x="6" y="16.5" width="1" height="1" fill="#fff"/><rect x="9" y="16.5" width="1" height="1" fill="#fff"/></g><g transform="translate(787.6 91.0)"><path d="M1 2l4 1 3-1.500 3 1.500 4-1v12l-4 1-3-1.500-3 1.500-4-1z" fill="#b5dca3"/><path d="M3 5q4-1 5 3t5 1" fill="none" stroke="#8fb5e0" stroke-width="1.200"/><rect x="9" y="9" width="6" height="6" fill="#5f8a2f"/><path d="M10 14l4-4" stroke="#f2e27a" stroke-width="1.200"/></g><g transform="translate(812.9 91.0)"><path d="M1 3l5-1.500 5 1.500 4-1v12l-4 1-5-1.500-5 1.500z" fill="#f0d58a"/><path d="M1 9l5 4 5-5 4 5" fill="#6b96c6"/><rect x="2" y="2" width="4" height="4" fill="#4fae4f"/><path d="M6 14l6-12" stroke="#8a4a1a" stroke-width="2"/><rect x="3" y="8" width="4" height="4" fill="#e8a0a0"/></g><g transform="translate(836.2 91.0)"><rect x="5" y="0.5" width="1" height="1" fill="#a8a8a8"/><rect x="8" y="0.5" width="1" height="1" fill="#a8a8a8"/><rect x="6" y="1.5" width="1" height="1" fill="#fff"/><rect x="9" y="1.5" width="1" height="1" fill="#fff"/><rect x="5" y="3.5" width="1" height="1" fill="#a8a8a8"/><rect x="8" y="3.5" width="1" height="1" fill="#a8a8a8"/><rect x="6" y="4.5" width="1" height="1" fill="#fff"/><rect x="9" y="4.5" width="1" height="1" fill="#fff"/><rect x="5" y="6.5" width="1" height="1" fill="#a8a8a8"/><rect x="8" y="6.5" width="1" height="1" fill="#a8a8a8"/><rect x="6" y="7.5" width="1" height="1" fill="#fff"/><rect x="9" y="7.5" width="1" height="1" fill="#fff"/><rect x="5" y="9.5" width="1" height="1" fill="#a8a8a8"/><rect x="8" y="9.5" width="1" height="1" fill="#a8a8a8"/><rect x="6" y="10.5" width="1" height="1" fill="#fff"/><rect x="9" y="10.5" width="1" height="1" fill="#fff"/><rect x="5" y="12.5" width="1" height="1" fill="#a8a8a8"/><rect x="8" y="12.5" width="1" height="1" fill="#a8a8a8"/><rect x="6" y="13.5" width="1" height="1" fill="#fff"/><rect x="9" y="13.5" width="1" height="1" fill="#fff"/><rect x="5" y="15.5" width="1" height="1" fill="#a8a8a8"/><rect x="8" y="15.5" width="1" height="1" fill="#a8a8a8"/><rect x="6" y="16.5" width="1" height="1" fill="#fff"/><rect x="9" y="16.5" width="1" height="1" fill="#fff"/></g><g transform="translate(854.2 91.0)"><path d="M1.500 1v13.500H15" fill="none" stroke="#c5c5c5" stroke-width="1"/><path d="M3 13q4-1 6-6t5-4" fill="none" stroke="#d06a6a" stroke-width="1"/><path d="M3 13.500q4-.5 6-3t5-2" fill="none" stroke="#8a8ad8" stroke-width="1"/></g><rect x="7" y="121" width="1" height="1" fill="#aaa"/><rect x="10" y="121" width="1" height="1" fill="#aaa"/><rect x="13" y="121" width="1" height="1" fill="#aaa"/><rect x="16" y="121" width="1" height="1" fill="#aaa"/><rect x="19" y="121" width="1" height="1" fill="#aaa"/><rect x="22" y="121" width="1" height="1" fill="#aaa"/><rect x="25" y="121" width="1" height="1" fill="#aaa"/><g transform="translate(7.5 129.5) scale(1.062)"><path d="M1 5l7-2 2 8-7 2z" fill="#c88a3a"/><path d="M3 3l8-2 2 8-8 2z" fill="#e8a04a"/><path d="M5 1l9 1-1 9-9-1z" fill="#6b96c6"/><circle cx="12.500" cy="12.500" r="3.200" fill="#4f9a4f"/><path d="M12.500 10.500v4M10.500 12.500h4" stroke="#fff" stroke-width="1.200"/></g><g transform="translate(7.5 154.0) scale(1.062)"><path d="M1 7l7-3 7 3v5l-7 3.500-7-3.500z" fill="#f6d63c" stroke="#d9b019" stroke-width=".6"/><circle cx="7" cy="5" r="4" fill="#4a7fbf"/><path d="M4 4q3-2 5 0t1 3" fill="none" stroke="#cfe0f4"/><rect x="10" y="9" width="5" height="5" rx="1" fill="#f3f0c8" stroke="#d9b019"/></g><g transform="translate(7.5 178.0) scale(1.062)"><path d="M2 3l4 11 8-12" fill="none" stroke="#444" stroke-width="1"/><circle cx="2" cy="3" r="1.200" fill="#fff" stroke="#444" stroke-width=".6"/><circle cx="14" cy="2" r="1.200" fill="#fff" stroke="#444" stroke-width=".6"/><rect x="10" y="10" width="5" height="5" rx="1" fill="#f6f0c0" stroke="#d9b019" stroke-width="1"/></g><g transform="translate(7.5 202.5) scale(1.062)"><path d="M1 15q2-9 13-14-1 9-9 11l-2 .5z" fill="#6b96c6" stroke="#3f6fa8" stroke-width=".5"/><path d="M1 15q4-7 10-11" fill="none" stroke="#fff" stroke-width=".7"/><rect x="10" y="10" width="5" height="5" rx="1" fill="#f6f0c0" stroke="#d9b019" stroke-width="1"/></g><g transform="translate(7.5 226.5) scale(1.062)"><rect x="2" y="4" width="11" height="7" rx="1.500" fill="#6b96c6"/><path d="M4 2v2M6.500 2v2M9 2v2M11.500 2v2M4 11v2M6.500 11v2M9 11v2" stroke="#6b96c6" stroke-width="1.200"/><rect x="10" y="10" width="5" height="5" rx="1" fill="#f6f0c0" stroke="#d9b019" stroke-width="1"/></g><g transform="translate(39.5 141.0)"><path d="M1 10l5-4 5 6-6 3z" fill="#e84a3a"/><path d="M3 7l3-2 4 5" fill="#f6d63c"/><path d="M1 10l3 4 3-1" fill="#4a7fbf"/><path d="M7 10l8-8" stroke="#d99a3a" stroke-width="2.200"/><path d="M5 9l3 3" stroke="#8a5a1a" stroke-width="2"/></g><g transform="translate(65.0 141.0)"><rect x="1.500" y="4" width="7" height="10" fill="#f4f4f4" stroke="#777"/><rect x="4" y="1.500" width="7" height="10" fill="#f4f4f4" stroke="#777"/><path d="M6 3.500v6M8.500 3.500v6" stroke="#777"/><circle cx="11.500" cy="12.500" r="3" fill="#4f9a4f"/><path d="M11.500 10.800v3.400M9.800 12.500h3.400" stroke="#fff" stroke-width="1"/></g><g transform="translate(90.5 141.0)"><path d="M.5 7.500q7-7 14 0-7 7-14 0z" fill="#f6f6f6" stroke="#999" stroke-width=".9"/><circle cx="7.500" cy="7" r="3" fill="#6b96c6"/><circle cx="7.500" cy="7" r="1.300" fill="#223"/><path d="M11 12.500h5l-2.500 3z" fill="#444"/></g><g transform="translate(115.0 141.0)"><path d="M1 1.500h14l-5.500 6.500v7l-3-1.500v-5.500z" fill="#6b96c6" stroke="#3f6fa8" stroke-width=".5"/><path d="M1 1.500h14" stroke="#f6d63c" stroke-width="2"/></g><g transform="translate(141.0 141.0)"><text x="1" y="10" font-size="12" font-family="DejaVu Sans" fill="#b5b5b5">ε</text><path d="M8 10h6v5h-1.500v-3h-3v3h-1.500z" fill="#d0d0d0"/></g><g transform="translate(158.0 141.0)"><path d="M4.500 6.500h7l-3.500 4z" fill="#c8c8c8"/></g><g transform="translate(177.5 141.0)"><path d="M2.500 2v12M2.500 4h2.500M2.500 8h2.500M2.500 12h2.500" stroke="#999" fill="none" stroke-dasharray="1 1"/><rect x="3" y="3" width="2.500" height="2.500" fill="#e8a04a"/><rect x="3" y="10.500" width="2.500" height="2.500" fill="#e8a04a"/><path d="M9 1h3.500v8h3l-4.700 6-4.800-6h3z" fill="#3f7fc4"/></g><g transform="translate(202.5 141.0)"><path d="M2.500 2v12M2.500 4h2.500M2.500 8h2.500M2.500 12h2.500" stroke="#999" fill="none" stroke-dasharray="1 1"/><rect x="3" y="3" width="2.500" height="2.500" fill="#e8a04a"/><rect x="3" y="10.500" width="2.500" height="2.500" fill="#e8a04a"/><path d="M9 15h3.500v-8h3l-4.700-6-4.800 6h3z" fill="#3f7fc4"/></g><g transform="translate(227.0 141.0)"><rect x="1.500" y="1.500" width="11" height="11" rx="1" fill="#fdfdfd" stroke="#666"/><rect x="9.500" y="10.500" width="6.500" height="4.500" rx="1" fill="#e8283a"/><path d="M11 12.800h3.500" stroke="#fff" stroke-width="1.200"/></g><g transform="translate(352 119.5)"><rect x=".5" y=".5" width="10" height="10" rx="2" fill="#f4f4f4" stroke="#555"/><rect x="2.500" y="4" width="4.500" height="4" fill="none" stroke="#555" stroke-width=".9"/><path d="M4 4v-1.500h4.500v4h-1.500" fill="none" stroke="#555" stroke-width=".9"/></g><g transform="translate(366 119.5)"><rect x=".5" y=".5" width="10" height="10" rx="2" fill="#f4f4f4" stroke="#555"/><path d="M3 3l5 5M8 3l-5 5" stroke="#333" stroke-width="1.600"/></g></svg>
</div>
</body></html>
